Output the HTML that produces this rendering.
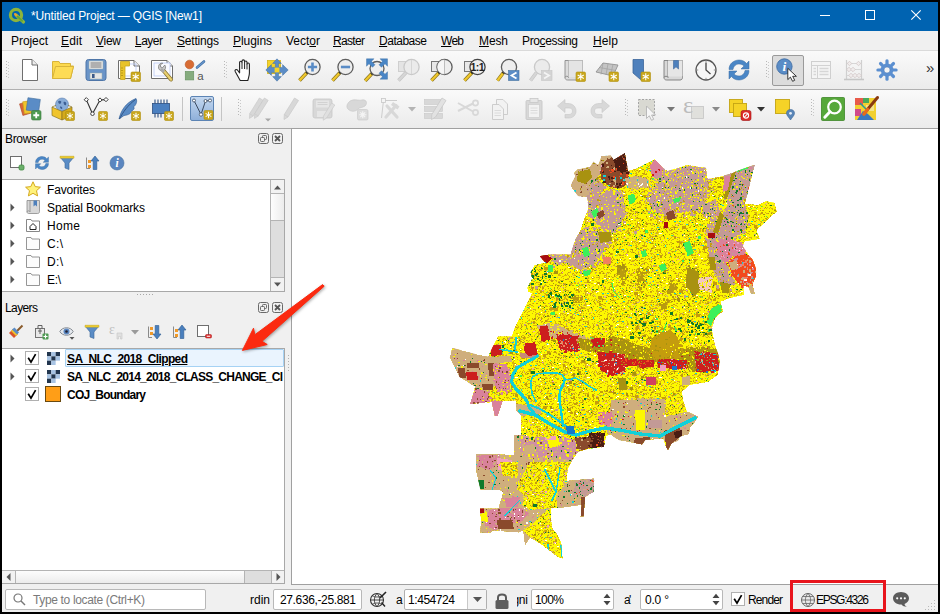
<!DOCTYPE html>
<html lang="en"><head><meta charset="utf-8"><title>QGIS</title>
<style>
html,body{margin:0;padding:0}
body{width:940px;height:614px;background:#000;position:relative;overflow:hidden;font-family:"Liberation Sans",sans-serif;font-size:12px}
.t{position:absolute;white-space:nowrap;overflow:visible}
.b{position:absolute;box-sizing:border-box}
svg{position:absolute;overflow:visible}
u{text-decoration:underline;text-underline-offset:1px}
</style></head><body>
<div class="b" style="left:2px;top:2px;width:936px;height:610px;background:#f0f0f0;"></div>
<div class="b" style="left:2px;top:2px;width:936px;height:29px;background:#0063b1;"></div>
<div class="t" style="left:31px;top:8px;height:16px;line-height:16px;font-size:12px;color:#fff;letter-spacing:-0.147px;">*Untitled Project — QGIS [New1]</div>
<div class="b" style="left:820px;top:15px;width:10px;height:1px;background:#fff;"></div>
<div class="b" style="left:865px;top:10px;width:10px;height:10px;border:1px solid #fff;"></div>
<svg style="left:911px;top:10px" width="10" height="10" viewBox="0 0 10 10"><path d="M0.3 0.3L9.7 9.7M9.7 0.3L0.3 9.7" stroke="#fff" stroke-width="1.1" fill="none"/></svg>
<div class="t" style="left:11px;top:33px;height:16px;line-height:16px;font-size:12px;color:#000;letter-spacing:-0.058px;">Pro<u>j</u>ect</div>
<div class="t" style="left:61px;top:33px;height:16px;line-height:16px;font-size:12px;color:#000;letter-spacing:0.107px;"><u>E</u>dit</div>
<div class="t" style="left:96px;top:33px;height:16px;line-height:16px;font-size:12px;color:#000;letter-spacing:-0.264px;"><u>V</u>iew</div>
<div class="t" style="left:135px;top:33px;height:16px;line-height:16px;font-size:12px;color:#000;letter-spacing:-0.504px;"><u>L</u>ayer</div>
<div class="t" style="left:177px;top:33px;height:16px;line-height:16px;font-size:12px;color:#000;letter-spacing:-0.194px;"><u>S</u>ettings</div>
<div class="t" style="left:233px;top:33px;height:16px;line-height:16px;font-size:12px;color:#000;letter-spacing:-0.059px;"><u>P</u>lugins</div>
<div class="t" style="left:286px;top:33px;height:16px;line-height:16px;font-size:12px;color:#000;letter-spacing:-0.004px;">Vect<u>o</u>r</div>
<div class="t" style="left:333px;top:33px;height:16px;line-height:16px;font-size:12px;color:#000;letter-spacing:-0.669px;"><u>R</u>aster</div>
<div class="t" style="left:379px;top:33px;height:16px;line-height:16px;font-size:12px;color:#000;letter-spacing:-0.481px;"><u>D</u>atabase</div>
<div class="t" style="left:441px;top:33px;height:16px;line-height:16px;font-size:12px;color:#000;letter-spacing:-0.728px;"><u>W</u>eb</div>
<div class="t" style="left:479px;top:33px;height:16px;line-height:16px;font-size:12px;color:#000;letter-spacing:-0.115px;"><u>M</u>esh</div>
<div class="t" style="left:522px;top:33px;height:16px;line-height:16px;font-size:12px;color:#000;letter-spacing:-0.373px;">Pro<u>c</u>essing</div>
<div class="t" style="left:593px;top:33px;height:16px;line-height:16px;font-size:12px;color:#000;letter-spacing:0.107px;"><u>H</u>elp</div>
<div class="b" style="left:2px;top:50px;width:936px;height:1px;background:#dadada;"></div>
<div class="b" style="left:2px;top:51px;width:936px;height:38px;background:linear-gradient(#fafafa,#ebebeb);"></div>
<div class="b" style="left:2px;top:89px;width:936px;height:1px;background:#b0b0b0;"></div>
<div class="b" style="left:2px;top:90px;width:936px;height:38px;background:linear-gradient(#fafafa,#ebebeb);"></div>
<div class="b" style="left:2px;top:128px;width:936px;height:1px;background:#a8a8a8;"></div>
<svg style="left:6px;top:61px" width="4" height="18" viewBox="0 0 4 18"><rect x="0" y="0" width="1" height="1" fill="#b8b8b8"/><rect x="2" y="1" width="1" height="1" fill="#c8c8c8"/><rect x="0" y="3" width="1" height="1" fill="#b8b8b8"/><rect x="2" y="4" width="1" height="1" fill="#c8c8c8"/><rect x="0" y="6" width="1" height="1" fill="#b8b8b8"/><rect x="2" y="7" width="1" height="1" fill="#c8c8c8"/><rect x="0" y="9" width="1" height="1" fill="#b8b8b8"/><rect x="2" y="10" width="1" height="1" fill="#c8c8c8"/><rect x="0" y="12" width="1" height="1" fill="#b8b8b8"/><rect x="2" y="13" width="1" height="1" fill="#c8c8c8"/><rect x="0" y="15" width="1" height="1" fill="#b8b8b8"/><rect x="2" y="16" width="1" height="1" fill="#c8c8c8"/></svg>
<svg style="left:224px;top:61px" width="4" height="18" viewBox="0 0 4 18"><rect x="0" y="0" width="1" height="1" fill="#b8b8b8"/><rect x="2" y="1" width="1" height="1" fill="#c8c8c8"/><rect x="0" y="3" width="1" height="1" fill="#b8b8b8"/><rect x="2" y="4" width="1" height="1" fill="#c8c8c8"/><rect x="0" y="6" width="1" height="1" fill="#b8b8b8"/><rect x="2" y="7" width="1" height="1" fill="#c8c8c8"/><rect x="0" y="9" width="1" height="1" fill="#b8b8b8"/><rect x="2" y="10" width="1" height="1" fill="#c8c8c8"/><rect x="0" y="12" width="1" height="1" fill="#b8b8b8"/><rect x="2" y="13" width="1" height="1" fill="#c8c8c8"/><rect x="0" y="15" width="1" height="1" fill="#b8b8b8"/><rect x="2" y="16" width="1" height="1" fill="#c8c8c8"/></svg>
<svg style="left:766px;top:61px" width="4" height="18" viewBox="0 0 4 18"><rect x="0" y="0" width="1" height="1" fill="#b8b8b8"/><rect x="2" y="1" width="1" height="1" fill="#c8c8c8"/><rect x="0" y="3" width="1" height="1" fill="#b8b8b8"/><rect x="2" y="4" width="1" height="1" fill="#c8c8c8"/><rect x="0" y="6" width="1" height="1" fill="#b8b8b8"/><rect x="2" y="7" width="1" height="1" fill="#c8c8c8"/><rect x="0" y="9" width="1" height="1" fill="#b8b8b8"/><rect x="2" y="10" width="1" height="1" fill="#c8c8c8"/><rect x="0" y="12" width="1" height="1" fill="#b8b8b8"/><rect x="2" y="13" width="1" height="1" fill="#c8c8c8"/><rect x="0" y="15" width="1" height="1" fill="#b8b8b8"/><rect x="2" y="16" width="1" height="1" fill="#c8c8c8"/></svg>
<svg style="left:6px;top:99px" width="4" height="18" viewBox="0 0 4 18"><rect x="0" y="0" width="1" height="1" fill="#b8b8b8"/><rect x="2" y="1" width="1" height="1" fill="#c8c8c8"/><rect x="0" y="3" width="1" height="1" fill="#b8b8b8"/><rect x="2" y="4" width="1" height="1" fill="#c8c8c8"/><rect x="0" y="6" width="1" height="1" fill="#b8b8b8"/><rect x="2" y="7" width="1" height="1" fill="#c8c8c8"/><rect x="0" y="9" width="1" height="1" fill="#b8b8b8"/><rect x="2" y="10" width="1" height="1" fill="#c8c8c8"/><rect x="0" y="12" width="1" height="1" fill="#b8b8b8"/><rect x="2" y="13" width="1" height="1" fill="#c8c8c8"/><rect x="0" y="15" width="1" height="1" fill="#b8b8b8"/><rect x="2" y="16" width="1" height="1" fill="#c8c8c8"/></svg>
<svg style="left:238px;top:99px" width="4" height="18" viewBox="0 0 4 18"><rect x="0" y="0" width="1" height="1" fill="#b8b8b8"/><rect x="2" y="1" width="1" height="1" fill="#c8c8c8"/><rect x="0" y="3" width="1" height="1" fill="#b8b8b8"/><rect x="2" y="4" width="1" height="1" fill="#c8c8c8"/><rect x="0" y="6" width="1" height="1" fill="#b8b8b8"/><rect x="2" y="7" width="1" height="1" fill="#c8c8c8"/><rect x="0" y="9" width="1" height="1" fill="#b8b8b8"/><rect x="2" y="10" width="1" height="1" fill="#c8c8c8"/><rect x="0" y="12" width="1" height="1" fill="#b8b8b8"/><rect x="2" y="13" width="1" height="1" fill="#c8c8c8"/><rect x="0" y="15" width="1" height="1" fill="#b8b8b8"/><rect x="2" y="16" width="1" height="1" fill="#c8c8c8"/></svg>
<svg style="left:625px;top:99px" width="4" height="18" viewBox="0 0 4 18"><rect x="0" y="0" width="1" height="1" fill="#b8b8b8"/><rect x="2" y="1" width="1" height="1" fill="#c8c8c8"/><rect x="0" y="3" width="1" height="1" fill="#b8b8b8"/><rect x="2" y="4" width="1" height="1" fill="#c8c8c8"/><rect x="0" y="6" width="1" height="1" fill="#b8b8b8"/><rect x="2" y="7" width="1" height="1" fill="#c8c8c8"/><rect x="0" y="9" width="1" height="1" fill="#b8b8b8"/><rect x="2" y="10" width="1" height="1" fill="#c8c8c8"/><rect x="0" y="12" width="1" height="1" fill="#b8b8b8"/><rect x="2" y="13" width="1" height="1" fill="#c8c8c8"/><rect x="0" y="15" width="1" height="1" fill="#b8b8b8"/><rect x="2" y="16" width="1" height="1" fill="#c8c8c8"/></svg>
<svg style="left:811px;top:99px" width="4" height="18" viewBox="0 0 4 18"><rect x="0" y="0" width="1" height="1" fill="#b8b8b8"/><rect x="2" y="1" width="1" height="1" fill="#c8c8c8"/><rect x="0" y="3" width="1" height="1" fill="#b8b8b8"/><rect x="2" y="4" width="1" height="1" fill="#c8c8c8"/><rect x="0" y="6" width="1" height="1" fill="#b8b8b8"/><rect x="2" y="7" width="1" height="1" fill="#c8c8c8"/><rect x="0" y="9" width="1" height="1" fill="#b8b8b8"/><rect x="2" y="10" width="1" height="1" fill="#c8c8c8"/><rect x="0" y="12" width="1" height="1" fill="#b8b8b8"/><rect x="2" y="13" width="1" height="1" fill="#c8c8c8"/><rect x="0" y="15" width="1" height="1" fill="#b8b8b8"/><rect x="2" y="16" width="1" height="1" fill="#c8c8c8"/></svg>
<div class="b" style="left:182px;top:97px;width:1px;height:24px;background:#c4c4c4;"></div>
<div class="b" style="left:221px;top:97px;width:1px;height:24px;background:#c4c4c4;"></div>
<div class="b" style="left:772px;top:55px;width:32px;height:31px;background:#dcdcdc;border:1px solid #9a9a9a;border-radius:2px;"></div>
<div class="t" style="left:926px;top:60px;height:16px;line-height:16px;font-size:15px;color:#333;">»</div>
<div class="t" style="left:5px;top:131px;height:16px;line-height:16px;font-size:12px;color:#000;letter-spacing:-0.335px;">Browser</div>
<svg style="left:258px;top:133px" width="11" height="11" viewBox="0 0 11 11"><rect x="0.5" y="0.5" width="10" height="10" rx="2" fill="none" stroke="#6a6a6a"/><rect x="4.5" y="2.5" width="4" height="4" rx="0.8" fill="none" stroke="#6a6a6a"/><rect x="2.5" y="4.5" width="4" height="4" rx="0.8" fill="#f0f0f0" stroke="#6a6a6a"/></svg>
<svg style="left:272px;top:133px" width="11" height="11" viewBox="0 0 11 11"><rect x="0.5" y="0.5" width="10" height="10" rx="2" fill="none" stroke="#6a6a6a"/><path d="M3 3L8 8M8 3L3 8" stroke="#555" stroke-width="1.8"/></svg>
<div class="b" style="left:2px;top:179px;width:283px;height:113px;background:#fff;border:1px solid #a8a8a8;border-left:none;"></div>
<div class="t" style="left:47px;top:182px;height:16px;line-height:16px;font-size:12px;color:#000;letter-spacing:-0.168px;">Favorites</div>
<div class="t" style="left:47px;top:200px;height:16px;line-height:16px;font-size:12px;color:#000;letter-spacing:-0.128px;">Spatial Bookmarks</div>
<div class="t" style="left:47px;top:218px;height:16px;line-height:16px;font-size:12px;color:#000;letter-spacing:0.330px;">Home</div>
<div class="t" style="left:47px;top:236px;height:16px;line-height:16px;font-size:12px;color:#000;letter-spacing:0.333px;">C:\</div>
<div class="t" style="left:47px;top:254px;height:16px;line-height:16px;font-size:12px;color:#000;letter-spacing:0.333px;">D:\</div>
<div class="t" style="left:47px;top:272px;height:16px;line-height:16px;font-size:12px;color:#000;letter-spacing:-0.337px;">E:\</div>
<svg style="left:10px;top:203px" width="5" height="9" viewBox="0 0 5 9"><path d="M0.5 0.5L4.5 4.5L0.5 8.5Z" fill="#555"/></svg>
<svg style="left:10px;top:221px" width="5" height="9" viewBox="0 0 5 9"><path d="M0.5 0.5L4.5 4.5L0.5 8.5Z" fill="#555"/></svg>
<svg style="left:10px;top:239px" width="5" height="9" viewBox="0 0 5 9"><path d="M0.5 0.5L4.5 4.5L0.5 8.5Z" fill="#555"/></svg>
<svg style="left:10px;top:257px" width="5" height="9" viewBox="0 0 5 9"><path d="M0.5 0.5L4.5 4.5L0.5 8.5Z" fill="#555"/></svg>
<svg style="left:10px;top:275px" width="5" height="9" viewBox="0 0 5 9"><path d="M0.5 0.5L4.5 4.5L0.5 8.5Z" fill="#555"/></svg>
<div class="b" style="left:270px;top:180px;width:14px;height:111px;background:#dedede;border-left:1px solid #b4b4b4;"></div>
<div class="b" style="left:270px;top:180px;width:14px;height:14px;background:#f2f2f2;border-left:1px solid #b4b4b4;border-bottom:1px solid #b4b4b4;"></div>
<div class="b" style="left:270px;top:277px;width:14px;height:14px;background:#f2f2f2;border-left:1px solid #b4b4b4;border-top:1px solid #b4b4b4;"></div>
<div class="b" style="left:270px;top:193px;width:14px;height:28px;border:1px solid #b4b4b4;border-right:none;background:linear-gradient(90deg,#fdfdfd,#ececec);"></div>
<svg style="left:274px;top:185px" width="7" height="5" viewBox="0 0 7 5"><path d="M0 4.5L3.5 0.5L7 4.5Z" fill="#555"/></svg>
<svg style="left:274px;top:282px" width="7" height="5" viewBox="0 0 7 5"><path d="M0 0.5L3.5 4.5L7 0.5Z" fill="#555"/></svg>
<div class="b" style="left:137px;top:294px;width:1px;height:1px;background:#a8a8a8;"></div>
<div class="b" style="left:140px;top:294px;width:1px;height:1px;background:#a8a8a8;"></div>
<div class="b" style="left:143px;top:294px;width:1px;height:1px;background:#a8a8a8;"></div>
<div class="b" style="left:146px;top:294px;width:1px;height:1px;background:#a8a8a8;"></div>
<div class="b" style="left:149px;top:294px;width:1px;height:1px;background:#a8a8a8;"></div>
<div class="b" style="left:152px;top:294px;width:1px;height:1px;background:#a8a8a8;"></div>
<div class="t" style="left:5px;top:300px;height:16px;line-height:16px;font-size:12px;color:#000;letter-spacing:-0.603px;">Layers</div>
<svg style="left:258px;top:302px" width="11" height="11" viewBox="0 0 11 11"><rect x="0.5" y="0.5" width="10" height="10" rx="2" fill="none" stroke="#6a6a6a"/><rect x="4.5" y="2.5" width="4" height="4" rx="0.8" fill="none" stroke="#6a6a6a"/><rect x="2.5" y="4.5" width="4" height="4" rx="0.8" fill="#f0f0f0" stroke="#6a6a6a"/></svg>
<svg style="left:272px;top:302px" width="11" height="11" viewBox="0 0 11 11"><rect x="0.5" y="0.5" width="10" height="10" rx="2" fill="none" stroke="#6a6a6a"/><path d="M3 3L8 8M8 3L3 8" stroke="#555" stroke-width="1.8"/></svg>
<div class="b" style="left:2px;top:348px;width:283px;height:236px;background:#fff;border:1px solid #a8a8a8;border-left:none;"></div>
<div class="b" style="left:65px;top:349px;width:219px;height:18px;background:#eaf4fe;border:1px solid #a6d2f4;border-radius:1px;"></div>
<div class="t" style="left:67px;top:351px;height:16px;line-height:16px;font-size:12px;color:#000;font-weight:bold;letter-spacing:-0.613px;text-decoration:underline;">SA_NLC_2018_Clipped</div>
<div class="t" style="left:67px;top:369px;height:16px;line-height:16px;font-size:12px;color:#000;font-weight:bold;letter-spacing:-0.756px;width:217px;overflow:hidden;">SA_NLC_2014_2018_CLASS_CHANGE_Cl</div>
<div class="t" style="left:67px;top:387px;height:16px;line-height:16px;font-size:12px;color:#000;font-weight:bold;letter-spacing:-0.759px;">COJ_Boundary</div>
<svg style="left:10px;top:354px" width="5" height="9" viewBox="0 0 5 9"><path d="M0.5 0.5L4.5 4.5L0.5 8.5Z" fill="#555"/></svg>
<svg style="left:10px;top:372px" width="5" height="9" viewBox="0 0 5 9"><path d="M0.5 0.5L4.5 4.5L0.5 8.5Z" fill="#555"/></svg>
<svg style="left:25px;top:351px" width="14" height="14" viewBox="0 0 14 14"><rect x="0.5" y="0.5" width="13" height="13" fill="#fff" stroke="#b0b0b0"/><path d="M3.2 6.8L6 11.2L10.6 3.2" stroke="#000" stroke-width="1.7" fill="none"/></svg>
<svg style="left:25px;top:369px" width="14" height="14" viewBox="0 0 14 14"><rect x="0.5" y="0.5" width="13" height="13" fill="#fff" stroke="#b0b0b0"/><path d="M3.2 6.8L6 11.2L10.6 3.2" stroke="#000" stroke-width="1.7" fill="none"/></svg>
<svg style="left:25px;top:387px" width="14" height="14" viewBox="0 0 14 14"><rect x="0.5" y="0.5" width="13" height="13" fill="#fff" stroke="#b0b0b0"/><path d="M3.2 6.8L6 11.2L10.6 3.2" stroke="#000" stroke-width="1.7" fill="none"/></svg>
<svg style="left:47px;top:352px" width="13" height="13" viewBox="0 0 3 3"><rect x="0" y="0" width="1" height="1" fill="#22364f"/><rect x="1" y="0" width="1" height="1" fill="#a8c4e4"/><rect x="2" y="0" width="1" height="1" fill="#22364f"/><rect x="0" y="1" width="1" height="1" fill="#a8c4e4"/><rect x="1" y="1" width="1" height="1" fill="#22364f"/><rect x="2" y="1" width="1" height="1" fill="#a8c4e4"/><rect x="0" y="2" width="1" height="1" fill="#22364f"/><rect x="1" y="2" width="1" height="1" fill="#a8c4e4"/></svg>
<svg style="left:47px;top:370px" width="13" height="13" viewBox="0 0 3 3"><rect x="0" y="0" width="1" height="1" fill="#22364f"/><rect x="1" y="0" width="1" height="1" fill="#a8c4e4"/><rect x="2" y="0" width="1" height="1" fill="#22364f"/><rect x="0" y="1" width="1" height="1" fill="#a8c4e4"/><rect x="1" y="1" width="1" height="1" fill="#22364f"/><rect x="2" y="1" width="1" height="1" fill="#a8c4e4"/><rect x="0" y="2" width="1" height="1" fill="#22364f"/><rect x="1" y="2" width="1" height="1" fill="#a8c4e4"/></svg>
<div class="b" style="left:45px;top:386px;width:16px;height:16px;background:#ff9e17;border:1px solid #6a4a10;"></div>
<div class="b" style="left:2px;top:570px;width:282px;height:13px;background:#dedede;border-top:1px solid #b4b4b4;"></div>
<div class="b" style="left:2px;top:570px;width:14px;height:13px;background:#f2f2f2;border-top:1px solid #b4b4b4;border-right:1px solid #b4b4b4;"></div>
<div class="b" style="left:271px;top:570px;width:13px;height:13px;background:#f2f2f2;border-top:1px solid #b4b4b4;border-left:1px solid #b4b4b4;"></div>
<div class="b" style="left:15px;top:570px;width:230px;height:13px;border:1px solid #b4b4b4;border-bottom:none;background:linear-gradient(#fdfdfd,#ececec);"></div>
<svg style="left:6px;top:573px" width="5" height="8" viewBox="0 0 5 8"><path d="M4.5 0L0.5 4L4.5 8Z" fill="#555"/></svg>
<svg style="left:276px;top:573px" width="5" height="8" viewBox="0 0 5 8"><path d="M0.5 0L4.5 4L0.5 8Z" fill="#555"/></svg>
<div class="b" style="left:288px;top:355px;width:1px;height:1px;background:#b0b0b0;"></div>
<div class="b" style="left:288px;top:358px;width:1px;height:1px;background:#b0b0b0;"></div>
<div class="b" style="left:288px;top:361px;width:1px;height:1px;background:#b0b0b0;"></div>
<div class="b" style="left:288px;top:364px;width:1px;height:1px;background:#b0b0b0;"></div>
<div class="b" style="left:288px;top:367px;width:1px;height:1px;background:#b0b0b0;"></div>
<div class="b" style="left:288px;top:370px;width:1px;height:1px;background:#b0b0b0;"></div>
<div class="b" style="left:291px;top:128px;width:647px;height:457px;background:#fff;border:1px solid #a0a0a0;border-right:none;"></div>
<div class="b" style="left:5px;top:589px;width:201px;height:21px;background:#fff;border:1px solid #b8b8b8;border-radius:2px;"></div>
<svg style="left:13px;top:593px" width="13" height="13" viewBox="0 0 13 13"><circle cx="5" cy="5" r="4" fill="none" stroke="#777" stroke-width="1.2"/><path d="M8 8L12 12" stroke="#777" stroke-width="1.4"/></svg>
<div class="t" style="left:33px;top:592px;height:16px;line-height:16px;font-size:12px;color:#7a7a7a;letter-spacing:-0.351px;">Type to locate (Ctrl+K)</div>
<div class="t" style="left:250px;top:592px;height:16px;line-height:16px;font-size:12px;color:#000;letter-spacing:-0.003px;width:21px;overflow:hidden;">rdin</div>
<div class="b" style="left:273px;top:589px;width:89px;height:21px;background:#fff;border:1px solid #b8b8b8;border-radius:2px;"></div>
<div class="t" style="left:280px;top:592px;height:16px;line-height:16px;font-size:12px;color:#000;letter-spacing:-0.364px;">27.636,-25.881</div>
<div class="t" style="left:396px;top:592px;height:16px;line-height:16px;font-size:12px;color:#000;letter-spacing:-0.673px;">a</div>
<div class="b" style="left:404px;top:589px;width:83px;height:21px;background:#fff;border:1px solid #b0b0b0;border-radius:2px;"></div>
<div class="t" style="left:408px;top:592px;height:16px;line-height:16px;font-size:12px;color:#000;letter-spacing:-0.435px;">1:454724</div>
<div class="b" style="left:467px;top:590px;width:19px;height:19px;background:#f4f4f4;border-left:1px solid #c8c8c8;"></div>
<svg style="left:473px;top:597px" width="9" height="5" viewBox="0 0 9 5"><path d="M0 0L9 0L4.5 5Z" fill="#555"/></svg>
<div class="t" style="left:517px;top:592px;width:11px;height:16px;line-height:16px;overflow:hidden"><span style="margin-left:-4.6px;letter-spacing:-0.3px">gni</span></div>
<div class="b" style="left:531px;top:589px;width:83px;height:21px;background:#fff;border:1px solid #b8b8b8;border-radius:2px;"></div>
<div class="t" style="left:535px;top:592px;height:16px;line-height:16px;font-size:12px;color:#000;letter-spacing:-0.564px;">100%</div>
<div class="t" style="left:624px;top:592px;height:16px;line-height:16px;font-size:12px;color:#000;letter-spacing:-0.673px;">a</div>
<div class="t" style="left:629px;top:592px;height:16px;line-height:16px;font-size:12px;color:#000;">'</div>
<div class="b" style="left:640px;top:589px;width:83px;height:21px;background:#fff;border:1px solid #b8b8b8;border-radius:2px;"></div>
<div class="t" style="left:645px;top:592px;height:16px;line-height:16px;font-size:12px;color:#000;letter-spacing:-0.204px;">0.0 °</div>
<svg style="left:603px;top:593px" width="8" height="13" viewBox="0 0 8 13"><path d="M0.5 5L4 0.8L7.5 5Z M0.5 8L4 12.2L7.5 8Z" fill="#444"/></svg>
<svg style="left:712px;top:593px" width="8" height="13" viewBox="0 0 8 13"><path d="M0.5 5L4 0.8L7.5 5Z M0.5 8L4 12.2L7.5 8Z" fill="#444"/></svg>
<svg style="left:731px;top:592px" width="14" height="14" viewBox="0 0 14 14"><rect x="0.5" y="0.5" width="13" height="13" fill="#fff" stroke="#b0b0b0"/><path d="M3.2 6.8L6 11.2L10.6 3.2" stroke="#000" stroke-width="1.7" fill="none"/></svg>
<div class="t" style="left:748px;top:592px;height:16px;line-height:16px;font-size:12px;color:#000;letter-spacing:-0.871px;">Render</div>
<div class="b" style="left:790px;top:580px;width:96px;height:32px;border:3px solid #e8141c;"></div>
<div class="t" style="left:816px;top:592px;height:16px;line-height:16px;font-size:12px;color:#000;letter-spacing:-1.297px;">EPSG:4326</div>
<svg style="left:18px;top:58px" width="24" height="24" viewBox="0 0 24 24"><path d="M4.5 1.5H14L19.5 7V22.5H4.5Z" fill="#fff" stroke="#6e6e6e" stroke-width="1"/><path d="M14 1.5V7H19.5" fill="#ececec" stroke="#6e6e6e" stroke-width="1"/></svg>
<svg style="left:51px;top:58px" width="24" height="24" viewBox="0 0 24 24"><path d="M1.5 3.5H8L9 5.5H19.5V8H22.5L19.5 20.5H1.5Z" fill="#fcd94e" stroke="#d9b43a" stroke-width="1" stroke-linejoin="round"/><path d="M4.5 8.5H22.5L19.5 20.5H1.5Z" fill="#fddc55" stroke="#d9b43a" stroke-width="1" stroke-linejoin="round"/></svg>
<svg style="left:84px;top:58px" width="24" height="24" viewBox="0 0 24 24"><rect x="2" y="1.5" width="20" height="21" rx="2.5" fill="#6a94c8" stroke="#4f76a8" stroke-width="1"/><rect x="5" y="3" width="14" height="8" fill="#ececec" stroke="#9aa" stroke-width="0.5"/><path d="M6.5 5H17.5M6.5 7H17.5M6.5 9H17.5" stroke="#555" stroke-width="0.8"/><rect x="6" y="15" width="12" height="6" fill="#e6e6e6" stroke="#9aa" stroke-width="0.5"/><rect x="8" y="16" width="2.6" height="4" fill="#3c5a88"/></svg>
<svg style="left:117px;top:58px" width="24" height="24" viewBox="0 0 24 24"><path d="M1.5 2.5H17L22.5 8V20.5H1.5Z" fill="#fff" stroke="#6e6e6e"/><path d="M17 2.5V8H22.5" fill="#eee" stroke="#6e6e6e"/><rect x="5" y="6" width="14" height="12" fill="none" stroke="#b8c8f4" stroke-width="0.8"/><path d="M3.5 3.5H12.5V8H8V21.5H3.5Z" fill="#e8c32a" stroke="#c9a71c" stroke-width="0.8"/><path d="M4 10H6M4 12.5H6M4 15H6M4 17.5H6" stroke="#a88a10" stroke-width="0.7"/><rect x="14" y="14" width="9.5" height="9.5" rx="1.2" fill="#c9a71c" stroke="#b0900f" stroke-width="0.6"/><path d="M18.75 15.2V22.3M15.68 16.98L21.82 20.52M21.82 16.98L15.68 20.52" stroke="#fff" stroke-width="1.05"/></svg>
<svg style="left:150px;top:58px" width="24" height="24" viewBox="0 0 24 24"><path d="M1.5 2.5H17L22.5 8V20.5H1.5Z" fill="#fff" stroke="#6e6e6e"/><path d="M17 2.5V8H22.5" fill="#eee" stroke="#6e6e6e"/><rect x="4" y="5" width="16" height="13" fill="#fafbff" stroke="#b8c8f4" stroke-width="0.8"/><path d="M13 12L21 21.5" stroke="#8a7430" stroke-width="4" stroke-linecap="round"/><path d="M13 12L21 21.5" stroke="#e8d070" stroke-width="2.4" stroke-linecap="round"/><path d="M8.5 8.5A3.6 3.6 0 1 0 14.8 7L12.6 9.6L10.6 9L10.4 6.8L12.8 5.2A3.6 3.6 0 0 0 8.5 8.5Z" fill="#c8c8c8" stroke="#777" stroke-width="0.7"/><path d="M11 11L14 14" stroke="#aaa" stroke-width="2.6"/></svg>
<svg style="left:183px;top:58px" width="24" height="24" viewBox="0 0 24 24"><circle cx="6.5" cy="6.5" r="4.3" fill="#d86c34" stroke="#b85420" stroke-width="0.6"/><rect x="2.3" y="13.5" width="8.4" height="8.4" fill="#86ac7e" stroke="#6a9464" stroke-width="0.7"/><path d="M14 9.5L21 3.5" stroke="#3e6ea6" stroke-width="2.6" stroke-linecap="round"/><path d="M14 9.5L21 3.5" stroke="#6a98cc" stroke-width="1.2" stroke-linecap="round"/><text x="14.2" y="21.5" font-family="Liberation Sans, sans-serif" font-size="11.5" fill="#555">a</text></svg>
<svg style="left:232px;top:58px" width="24" height="24" viewBox="0 0 24 24"><path d="M8.2 22.5L3.2 13.6C2.4 12 4.2 10.8 5.4 12L7.6 14.8V4.6C7.6 2.8 10 2.8 10 4.6V3.2C10 1.4 12.6 1.4 12.6 3.2V4.2C12.6 2.6 15 2.6 15 4.4V6C15 4.6 17.4 4.6 17.4 6.4V15C17.4 18 16.4 20 15.8 22.5Z" fill="#fff" stroke="#222" stroke-width="1.1" stroke-linejoin="round"/><path d="M10 4.6V11M12.6 4.2V11M15 6V11.4" stroke="#222" stroke-width="1"/></svg>
<svg style="left:265px;top:58px" width="24" height="24" viewBox="0 0 24 24"><rect x="2.5" y="2.5" width="13" height="13" fill="#f5d327" stroke="#d4b216" stroke-width="0.8"/><path d="M12 0.8L16.4 5.4H13.6V9.4H17.6V6.6L23.2 12L17.6 17.4V14.6H13.6V18.6H16.4L12 23.2L7.6 18.6H10.4V14.6H6.4V17.4L0.8 12L6.4 6.6V9.4H10.4V5.4H7.6Z" fill="#5a8cc6" stroke="#44709e" stroke-width="0.5"/><rect x="9.6" y="9.6" width="4.8" height="4.8" fill="#f5d327"/></svg>
<svg style="left:298px;top:58px" width="24" height="24" viewBox="0 0 24 24"><path d="M9.03 14.47L1.5 22.5" stroke="#8a7420" stroke-width="3.6" stroke-linecap="butt"/><path d="M9.03 14.47L1.5 22.5" stroke="#f0c82c" stroke-width="2.2" stroke-linecap="butt"/><circle cx="9.33" cy="14.17" r="1.5" fill="#111"/><circle cx="14.5" cy="9" r="7.6" fill="#eeeeee" stroke="#5e5e5e" stroke-width="1.3"/><path d="M14.5 4.4V13.6M9.9 9H19.1" stroke="#5a8cc6" stroke-width="2.6"/></svg>
<svg style="left:331px;top:58px" width="24" height="24" viewBox="0 0 24 24"><path d="M9.03 14.47L1.5 22.5" stroke="#8a7420" stroke-width="3.6" stroke-linecap="butt"/><path d="M9.03 14.47L1.5 22.5" stroke="#f0c82c" stroke-width="2.2" stroke-linecap="butt"/><circle cx="9.33" cy="14.17" r="1.5" fill="#111"/><circle cx="14.5" cy="9" r="7.6" fill="#eeeeee" stroke="#5e5e5e" stroke-width="1.3"/><path d="M9.9 9H19.1" stroke="#5a8cc6" stroke-width="2.6"/></svg>
<svg style="left:364px;top:58px" width="24" height="24" viewBox="0 0 24 24"><path d="M7.96 15.54L1.2 22.8" stroke="#8a7420" stroke-width="3.6" stroke-linecap="butt"/><path d="M7.96 15.54L1.2 22.8" stroke="#f0c82c" stroke-width="2.2" stroke-linecap="butt"/><circle cx="8.26" cy="15.24" r="1.5" fill="#111"/><circle cx="13" cy="10.5" r="7" fill="#eeeeee" stroke="#5e5e5e" stroke-width="1.3"/><path d="M2.5 0.8L10.0 0.8L7.5 3.3L11.0 6.8L8.5 9.3L5.0 5.8L2.5 8.3Z" fill="#4a86c6" stroke="#38699e" stroke-width="0.4"/><path d="M23.5 0.8L16.0 0.8L18.5 3.3L15.0 6.8L17.5 9.3L21.0 5.8L23.5 8.3Z" fill="#4a86c6" stroke="#38699e" stroke-width="0.4"/><path d="M23.5 21.2L16.0 21.2L18.5 18.7L15.0 15.2L17.5 12.7L21.0 16.2L23.5 13.7Z" fill="#4a86c6" stroke="#38699e" stroke-width="0.4"/></svg>
<svg style="left:397px;top:58px" width="24" height="24" viewBox="0 0 24 24"><rect x="1.5" y="3.5" width="10" height="10" fill="#e4e4e4" stroke="#cfcfcf"/><path d="M9.03 14.47L1.5 22.5" stroke="#c4c4c4" stroke-width="3.6" stroke-linecap="butt"/><path d="M9.03 14.47L1.5 22.5" stroke="#d6d6d6" stroke-width="2.2" stroke-linecap="butt"/><circle cx="14.5" cy="9" r="7.6" fill="#ebebeb" stroke="#c9c9c9" stroke-width="1.3"/><path d="M14.5 1.8V16.2" stroke="#d0d0d0" stroke-width="0.8"/></svg>
<svg style="left:430px;top:58px" width="24" height="24" viewBox="0 0 24 24"><rect x="1.5" y="3.5" width="10" height="10" fill="#e8e8e8" stroke="#777"/><path d="M9.03 14.47L1.5 22.5" stroke="#8a7420" stroke-width="3.6" stroke-linecap="butt"/><path d="M9.03 14.47L1.5 22.5" stroke="#f0c82c" stroke-width="2.2" stroke-linecap="butt"/><circle cx="9.33" cy="14.17" r="1.5" fill="#111"/><circle cx="14.5" cy="9" r="7.6" fill="#eeeeee" stroke="#5e5e5e" stroke-width="1.3"/><path d="M14.5 1.8V16.2" stroke="#888" stroke-width="0.8"/><path d="M14.5 1.6A7.4 7.4 0 0 0 14.5 16.4Z" fill="#fafafa" opacity=".7"/></svg>
<svg style="left:463px;top:58px" width="24" height="24" viewBox="0 0 24 24"><rect x="1.5" y="3.5" width="10" height="10" fill="#e8e8e8" stroke="#777"/><path d="M9.03 14.47L1.5 22.5" stroke="#8a7420" stroke-width="3.6" stroke-linecap="butt"/><path d="M9.03 14.47L1.5 22.5" stroke="#f0c82c" stroke-width="2.2" stroke-linecap="butt"/><circle cx="9.33" cy="14.17" r="1.5" fill="#111"/><circle cx="14.5" cy="9" r="7.6" fill="#eeeeee" stroke="#444" stroke-width="1.3"/><text x="14.3" y="12.8" text-anchor="middle" font-family="Liberation Sans, sans-serif" font-weight="bold" font-size="10.5" letter-spacing="-0.6" fill="#222">1:1</text></svg>
<svg style="left:496px;top:58px" width="24" height="24" viewBox="0 0 24 24"><path d="M7.53 14.47L1.5 22.5" stroke="#8a7420" stroke-width="3.6" stroke-linecap="butt"/><path d="M7.53 14.47L1.5 22.5" stroke="#f0c82c" stroke-width="2.2" stroke-linecap="butt"/><circle cx="7.83" cy="14.17" r="1.5" fill="#111"/><circle cx="13" cy="9" r="7.6" fill="#eeeeee" stroke="#5e5e5e" stroke-width="1.3"/><rect x="12.5" y="12.5" width="10.5" height="10" fill="#5a8cc6" stroke="#44709e" stroke-width="0.6"/><path d="M20.5 14.5L15.5 17.5L20.5 20.5" stroke="#fff" stroke-width="1.8" fill="none"/></svg>
<svg style="left:529px;top:58px" width="24" height="24" viewBox="0 0 24 24"><path d="M7.53 14.47L1.5 22.5" stroke="#c4c4c4" stroke-width="3.6" stroke-linecap="butt"/><path d="M7.53 14.47L1.5 22.5" stroke="#d6d6d6" stroke-width="2.2" stroke-linecap="butt"/><circle cx="13" cy="9" r="7.6" fill="#ebebeb" stroke="#c9c9c9" stroke-width="1.3"/><rect x="12.5" y="12.5" width="10.5" height="10" fill="#d4d4d4" stroke="#c6c6c6" stroke-width="0.6"/><path d="M15 14.5L20 17.5L15 20.5" stroke="#f4f4f4" stroke-width="1.8" fill="none"/></svg>
<svg style="left:562px;top:58px" width="24" height="24" viewBox="0 0 24 24"><path d="M3 2.5H20.5V19.5C20.5 21 19.5 22 18 22H5.5C4 22 3 21 3 19.5Z" fill="#dcdcdc" stroke="#8a8a8a" stroke-width="0.9"/><path d="M3 19.5C3 17.8 6.5 17.8 6.5 19.5V2.5" fill="none" stroke="#8a8a8a" stroke-width="0.9"/><path d="M6.5 2.5H20.5V19H6.5Z" fill="#e4e4e4"/><rect x="14" y="14" width="9.5" height="9.5" rx="1.2" fill="#c9a71c" stroke="#b0900f" stroke-width="0.6"/><path d="M18.75 15.2V22.3M15.68 16.98L21.82 20.52M21.82 16.98L15.68 20.52" stroke="#fff" stroke-width="1.05"/></svg>
<svg style="left:595px;top:58px" width="24" height="24" viewBox="0 0 24 24"><path d="M1 14L8 5L23 7L18 18Z" fill="#c4c4c4" stroke="#8a8a8a" stroke-width="0.8"/><path d="M4.5 9.5L20.5 12.5M8 5L6 16.5M13 5.7L11 17M18 6.3L15.5 17.6" stroke="#9a9a9a" stroke-width="0.6"/><rect x="14" y="14" width="9.5" height="9.5" rx="1.2" fill="#c9a71c" stroke="#b0900f" stroke-width="0.6"/><path d="M18.75 15.2V22.3M15.68 16.98L21.82 20.52M21.82 16.98L15.68 20.52" stroke="#fff" stroke-width="1.05"/></svg>
<svg style="left:628px;top:58px" width="24" height="24" viewBox="0 0 24 24"><path d="M5 1.5H15.5V18L12.5 21.5L5 15Z" fill="#4e80bc" stroke="#3a659a" stroke-width="0.8"/><rect x="13" y="14" width="9.5" height="9.5" rx="1.2" fill="#c9a71c" stroke="#b0900f" stroke-width="0.6"/><path d="M17.75 15.2V22.3M14.68 16.98L20.82 20.52M20.82 16.98L14.68 20.52" stroke="#fff" stroke-width="1.05"/></svg>
<svg style="left:661px;top:58px" width="24" height="24" viewBox="0 0 24 24"><path d="M3 2.5H21.5V19.5C21.5 21 20.5 22 19 22H5.5C4 22 3 21 3 19.5Z" fill="#d8d8d8" stroke="#7a7a7a" stroke-width="0.9"/><path d="M3 19.5C3 17.8 7 17.8 7 19.5V2.5" fill="none" stroke="#7a7a7a" stroke-width="0.9"/><path d="M7 2.5H21.5V18.5H7Z" fill="#e6e6e6"/><path d="M12.5 2.5H17.5V11L15 8.8L12.5 11Z" fill="#4e80bc" stroke="#3a659a" stroke-width="0.6"/></svg>
<svg style="left:694px;top:58px" width="24" height="24" viewBox="0 0 24 24"><circle cx="12" cy="12" r="10" fill="#f6f6f6" stroke="#555" stroke-width="1.3"/><path d="M12 4.5V12L16.5 16" stroke="#444" stroke-width="1.3" fill="none"/><path d="M12 2.8V4.2M12 19.8V21.2M2.8 12H4.2M19.8 12H21.2" stroke="#777" stroke-width="0.8"/></svg>
<svg style="left:727px;top:58px" width="24" height="24" viewBox="0 0 24 24"><path d="M2 11.5C2 5.5 7 2 12 2C15.5 2 18 3.5 19.5 5.5L22 3V11H14L17 8C16 6.8 14.2 6 12 6C9 6 6.5 8 6 11.5Z" fill="#4a86c6" stroke="#386ba0" stroke-width="0.5"/><path d="M22 12.5C22 18.5 17 22 12 22C8.5 22 6 20.5 4.5 18.5L2 21V13H10L7 16C8 17.2 9.8 18 12 18C15 18 17.500 16 18 12.5Z" fill="#4a86c6" stroke="#386ba0" stroke-width="0.5"/></svg>
<svg style="left:776px;top:58px" width="24" height="24" viewBox="0 0 24 24"><circle cx="8.4" cy="8.500" r="7.700" fill="#5a8cc6" stroke="#3f6ea6" stroke-width="0.900"/><text x="8.500" y="13.400" text-anchor="middle" font-family="Liberation Serif, serif" font-style="italic" font-weight="bold" font-size="13.500" fill="#fff">i</text><path d="M11.800 10.300V21.600L14.400 19.100L16.600 23.300L18.700 22.300L16.700 18.300H20.400Z" fill="#fff" stroke="#222" stroke-width="0.900" stroke-linejoin="round"/></svg>
<svg style="left:809px;top:58px" width="24" height="24" viewBox="0 0 24 24"><rect x="2.5" y="3.5" width="19" height="17" fill="#f4f4f4" stroke="#cfcfcf"/><path d="M2.500 7.500H21.500M8.500 7.500V20.500" stroke="#d2d2d2"/><path d="M4.500 10.500H7M10.500 10.500H19.500M4.500 13.500H7M10.500 13.500H19.500M4.500 16.500H7M10.500 16.500H19.500" stroke="#d6d6d6" stroke-width="1.4"/></svg>
<svg style="left:842px;top:58px" width="24" height="24" viewBox="0 0 24 24"><path d="M4.500 2V21M19.500 2V21" stroke="#cfcfcf" stroke-width="1.200"/><path d="M2 21.500H22" stroke="#c6c6c6" stroke-width="1.600"/><path d="M4.500 5.500H19.500M4.500 11.500H19.500M4.500 17.500H19.500" stroke="#d4d4d4" stroke-width="0.900"/><g fill="#f0ecec" stroke="#d0c4c4" stroke-width="0.700"><rect x="5.9" y="3.9" width="3.200" height="3.200" transform="rotate(45 7.5 5.5)"/><rect x="14.9" y="3.9" width="3.200" height="3.200" transform="rotate(45 16.5 5.5)"/><rect x="5.4" y="9.9" width="3.200" height="3.200" transform="rotate(45 7 11.5)"/><rect x="9.4" y="9.9" width="3.200" height="3.200" transform="rotate(45 11 11.5)"/><rect x="7.4" y="15.9" width="3.200" height="3.200" transform="rotate(45 9 17.5)"/><rect x="11.4" y="15.9" width="3.200" height="3.200" transform="rotate(45 13 17.5)"/><rect x="15.4" y="15.9" width="3.200" height="3.200" transform="rotate(45 17 17.5)"/></g></svg>
<svg style="left:875px;top:58px" width="24" height="24" viewBox="0 0 24 24"><rect x="10.400" y="1.300" width="3.200" height="6" rx="1.500" transform="rotate(0 12 12)" fill="#5b8fd0"/><rect x="10.400" y="1.300" width="3.200" height="6" rx="1.500" transform="rotate(45 12 12)" fill="#5b8fd0"/><rect x="10.400" y="1.300" width="3.200" height="6" rx="1.500" transform="rotate(90 12 12)" fill="#5b8fd0"/><rect x="10.400" y="1.300" width="3.200" height="6" rx="1.500" transform="rotate(135 12 12)" fill="#5b8fd0"/><rect x="10.400" y="1.300" width="3.200" height="6" rx="1.500" transform="rotate(180 12 12)" fill="#5b8fd0"/><rect x="10.400" y="1.300" width="3.200" height="6" rx="1.500" transform="rotate(225 12 12)" fill="#5b8fd0"/><rect x="10.400" y="1.300" width="3.200" height="6" rx="1.500" transform="rotate(270 12 12)" fill="#5b8fd0"/><rect x="10.400" y="1.300" width="3.200" height="6" rx="1.500" transform="rotate(315 12 12)" fill="#5b8fd0"/><circle cx="12" cy="12" r="6.400" fill="#5b8fd0"/><circle cx="12" cy="12" r="3" fill="#f4f4f4"/><circle cx="12" cy="12" r="3" fill="none" stroke="#4a78b4" stroke-width="0.500"/></svg>
<svg style="left:18px;top:97px" width="24" height="24" viewBox="0 0 24 24"><rect x="3" y="5" width="12" height="12" transform="rotate(-16 9 11)" fill="#d9653a" stroke="#b04a24" stroke-width="0.6"/><rect x="5.5" y="4" width="12" height="12" transform="rotate(-8 11 10)" fill="#f0c42c" stroke="#c9a21c" stroke-width="0.6"/><rect x="9" y="1.5" width="12.500" height="12.500" transform="rotate(8 15 8)" fill="#5a8cc6" stroke="#44709e" stroke-width="0.6"/><rect x="13.500" y="13.500" width="9.500" height="9.500" rx="1.5" fill="#4e9a52" stroke="#3a7a3e" stroke-width="0.6"/><path d="M18.250 15.300V21.200M15.300 18.250H21.200" stroke="#fff" stroke-width="1.8"/></svg>
<svg style="left:51px;top:97px" width="24" height="24" viewBox="0 0 24 24"><circle cx="11" cy="7.500" r="6.500" fill="#88acd8" stroke="#5a7eae" stroke-width="0.6"/><path d="M7 4.500C9 3 11 4 10 6C9 7.500 7.500 7 7 4.500ZM12.500 5C14.500 4 16 6 15 8C14 9 12.500 7.500 12.500 5ZM9 9.500C10.500 9 12 10.500 11 12C9.500 12 9 11 9 9.500Z" fill="#3c5f94"/><path d="M1 10L11 14.500V23L1 18.500Z" fill="#f0c42c" stroke="#8a7420" stroke-width="0.7"/><path d="M11 14.500L21 10V18.500L11 23Z" fill="#d4aa1c" stroke="#8a7420" stroke-width="0.7"/><path d="M1 10L5 8.300M21 10L17 8.300" stroke="#8a7420" stroke-width="0.7"/><rect x="14.5" y="14.5" width="9" height="9" rx="1.2" fill="#c9a71c" stroke="#b0900f" stroke-width="0.6"/><path d="M19.0 15.7V22.3M16.14 17.35L21.86 20.65M21.86 17.35L16.14 20.65" stroke="#fff" stroke-width="1.05"/></svg>
<svg style="left:84px;top:97px" width="24" height="24" viewBox="0 0 24 24"><path d="M2.3 2.700L8.500 16.700L16 3L22 2.600" fill="none" stroke="#333" stroke-width="1.100"/><g fill="#fff" stroke="#333" stroke-width="0.900"><rect x="0.800" y="1.200" width="3" height="3" transform="rotate(45 2.300 2.700)"/><rect x="14.500" y="1.500" width="3" height="3" transform="rotate(45 16 3)"/><rect x="20.500" y="1.100" width="3" height="3" transform="rotate(45 22 2.600)"/><circle cx="8.500" cy="16.700" r="1.800"/></g><rect x="14.5" y="14.5" width="9" height="9" rx="1.2" fill="#c9a71c" stroke="#b0900f" stroke-width="0.6"/><path d="M19.0 15.7V22.3M16.14 17.35L21.86 20.65M21.86 17.35L16.14 20.65" stroke="#fff" stroke-width="1.05"/></svg>
<svg style="left:117px;top:97px" width="24" height="24" viewBox="0 0 24 24"><path d="M2 22C4 14 8 6 19 1.500C21 5 18 9 16.500 10C18 10.500 17 13 14 14.500C15 15.500 12 18 7 18.500Z" fill="#5a8cc6" stroke="#38639a" stroke-width="0.7"/><path d="M2.500 22C6 15 11 8 18.500 2.500" stroke="#2c4f80" stroke-width="0.9" fill="none"/><rect x="14.5" y="14.5" width="9" height="9" rx="1.2" fill="#c9a71c" stroke="#b0900f" stroke-width="0.6"/><path d="M19.0 15.7V22.3M16.14 17.35L21.86 20.65M21.86 17.35L16.14 20.65" stroke="#fff" stroke-width="1.05"/></svg>
<svg style="left:150px;top:97px" width="24" height="24" viewBox="0 0 24 24"><rect x="2.500" y="6.500" width="17" height="10" fill="#4a7fc0" stroke="#2c4f80" stroke-width="0.8"/><path d="M5 6.500V2.500M8 6.500V2.500M11 6.500V2.500M14 6.500V2.500M17 6.500V2.500M5 16.500V20.500M8 16.500V20.500M11 16.500V20.500" stroke="#2c4f80" stroke-width="1.100"/><rect x="14.5" y="14.5" width="9" height="9" rx="1.2" fill="#c9a71c" stroke="#b0900f" stroke-width="0.6"/><path d="M19.0 15.7V22.3M16.14 17.35L21.86 20.65M21.86 17.35L16.14 20.65" stroke="#fff" stroke-width="1.05"/></svg>
<div class="b" style="left:190px;top:96px;width:24px;height:25px;background:#aac4e4;border:1px solid #5c84b4;border-radius:2px;background:linear-gradient(#c4d8f0,#8fb0da)"></div>
<svg style="left:190px;top:97px" width="24" height="24" viewBox="0 0 24 24"><path d="M4 3.500L11 17.500L15.500 4L20 3.500" fill="none" stroke="#3a4a60" stroke-width="1"/><g fill="#fff" stroke="#3a4a60" stroke-width="0.8"><circle cx="4" cy="3.500" r="1.500"/><circle cx="15.500" cy="4" r="1.500"/><circle cx="20" cy="3.500" r="1.500"/><circle cx="11" cy="17.500" r="1.700"/></g><rect x="14" y="13.5" width="9" height="9" rx="1.2" fill="#c9a71c" stroke="#b0900f" stroke-width="0.6"/><path d="M18.5 14.7V21.3M15.64 16.35L21.36 19.65M21.36 16.35L15.64 19.65" stroke="#fff" stroke-width="1.05"/></svg>
<svg style="left:248px;top:97px" width="24" height="24" viewBox="0 0 24 24"><g transform="translate(0 1) scale(0.95)"><path d="M12 0L16 2.500L5.500 19L1.500 21.500L1.800 16.500Z" fill="#d8d8d8" stroke="#c8c8c8" stroke-width="0.7"/><path d="M1.800 16.500L5.500 19" stroke="#c8c8c8" stroke-width="0.7"/></g><g transform="translate(5 1) scale(0.95)"><path d="M12 0L16 2.500L5.500 19L1.500 21.500L1.800 16.500Z" fill="#d8d8d8" stroke="#c8c8c8" stroke-width="0.7"/><path d="M1.800 16.500L5.500 19" stroke="#c8c8c8" stroke-width="0.7"/></g><path d="M17 21.500H23L20 24.500Z" fill="#a8a8a8"/></svg>
<svg style="left:279px;top:97px" width="24" height="24" viewBox="0 0 24 24"><g transform="translate(3.5 1) scale(1)"><path d="M12 0L16 2.500L5.500 19L1.500 21.500L1.800 16.500Z" fill="#d8d8d8" stroke="#c8c8c8" stroke-width="0.7"/><path d="M1.800 16.500L5.500 19" stroke="#c8c8c8" stroke-width="0.7"/></g></svg>
<svg style="left:311px;top:97px" width="24" height="24" viewBox="0 0 24 24"><rect x="2" y="2" width="19" height="19" rx="2" fill="#d8d8d8" stroke="#c8c8c8" stroke-width="0.8"/><rect x="5" y="3.500" width="13" height="7" fill="#e6e6e6"/><rect x="6" y="14" width="11" height="6" fill="#e6e6e6"/><path d="M6.500 5.500H16.500M6.500 7.500H16.500" stroke="#c8c8c8" stroke-width="0.7"/><g transform="translate(11 6) scale(0.8)"><path d="M12 0L16 2.500L5.500 19L1.500 21.500L1.800 16.500Z" fill="#e0e0e0" stroke="#c8c8c8" stroke-width="0.8"/></g></svg>
<svg style="left:345px;top:97px" width="24" height="24" viewBox="0 0 24 24"><path d="M4 5C8 1 14 4 17 3C21 2 23 6 20 9C17 11 15 10 13 12C10 15 6 15 3 12C1 10 2 7 4 5Z" fill="#d8d8d8" stroke="#c8c8c8" stroke-width="0.7"/><rect x="12.500" y="12.500" width="10.500" height="10.500" rx="1.500" fill="#dcdcdc" stroke="#c8c8c8" stroke-width="0.6"/><path d="M17.750 14.200V21.300M14.200 17.750H21.300M15.300 15.300L20.200 20.200M20.200 15.300L15.300 20.200" stroke="#f4f4f4" stroke-width="1.200"/></svg>
<svg style="left:378px;top:97px" width="24" height="24" viewBox="0 0 24 24"><path d="M5.500 3.500L3.500 21" stroke="#c8c8c8" stroke-width="0.9"/><path d="M5.500 3.500H19" stroke="#c8c8c8" stroke-width="0.9"/><rect x="3.500" y="1.500" width="4" height="4" fill="#f4f4f4" stroke="#c8c8c8" stroke-width="0.8"/><path d="M9 9L19 20M18 8.500L8 20" stroke="#d8d8d8" stroke-width="3.200" stroke-linecap="round"/><path d="M14 6.500L20.500 11" stroke="#d8d8d8" stroke-width="3.600"/></svg>
<svg style="left:408px;top:107px" width="8" height="5" viewBox="0 0 8 5"><path d="M0 0H8L4 4.500Z" fill="#b4b4b4"/></svg>
<svg style="left:423px;top:97px" width="24" height="24" viewBox="0 0 24 24"><rect x="1.500" y="2.500" width="18" height="5" fill="#d8d8d8" stroke="#c8c8c8" stroke-width="0.600"/><rect x="1.500" y="9.500" width="18" height="5" fill="#d8d8d8" stroke="#c8c8c8" stroke-width="0.600"/><rect x="1.500" y="16.500" width="18" height="5" fill="#d8d8d8" stroke="#c8c8c8" stroke-width="0.600"/><g transform="translate(7 1)"><path d="M12 0L16 2.500L5.500 19L1.500 21.500L1.800 16.500Z" fill="#e2e2e2" stroke="#c8c8c8" stroke-width="0.800"/></g></svg>
<svg style="left:456px;top:97px" width="24" height="24" viewBox="0 0 24 24"><path d="M2 6L17 14.500M2 14L17 6.500" stroke="#d8d8d8" stroke-width="2"/><circle cx="19.500" cy="6" r="2.600" fill="none" stroke="#d8d8d8" stroke-width="1.700"/><circle cx="19.500" cy="15.500" r="2.600" fill="none" stroke="#d8d8d8" stroke-width="1.700"/></svg>
<svg style="left:488px;top:97px" width="24" height="24" viewBox="0 0 24 24"><path d="M8.500 2.500H15L19.500 7V17.500H8.500Z" fill="#f2f2f2" stroke="#c8c8c8" stroke-width="0.900"/><path d="M4.500 7.500H11L15.500 12V22.500H4.500Z" fill="#f2f2f2" stroke="#c8c8c8" stroke-width="0.900"/><path d="M6.500 13.500H13M6.500 16H13M6.500 18.500H13" stroke="#d8d8d8" stroke-width="0.900"/></svg>
<svg style="left:522px;top:97px" width="24" height="24" viewBox="0 0 24 24"><rect x="4" y="3.500" width="16" height="19" rx="1" fill="#d8d8d8" stroke="#c8c8c8" stroke-width="0.900"/><rect x="8" y="1.500" width="8" height="4" fill="#e6e6e6" stroke="#c8c8c8" stroke-width="0.800"/><rect x="6.500" y="7.500" width="11" height="13" fill="#f2f2f2" stroke="#c8c8c8" stroke-width="0.600"/><path d="M8.500 11H15.500M8.500 13.500H15.500M8.500 16H15.500" stroke="#d8d8d8" stroke-width="0.900"/></svg>
<svg style="left:555px;top:97px" width="24" height="24" viewBox="0 0 24 24"><path d="M2.500 9L10 2.500V6.500H13C18 6.500 21 10 21 14C21 18 18 21 14 21H10V17.500H14C16 17.500 17.500 16 17.500 14C17.500 12 16 11 14 11H10V15.500Z" fill="#d8d8d8" stroke="#c8c8c8" stroke-width="0.600"/></svg>
<svg style="left:588px;top:97px" width="24" height="24" viewBox="0 0 24 24"><path d="M21.500 9L14 2.500V6.500H11C6 6.500 3 10 3 14C3 18 6 21 10 21H14V17.500H10C8 17.500 6.500 16 6.500 14C6.500 12 8 11 10 11H14V15.500Z" fill="#d8d8d8" stroke="#c8c8c8" stroke-width="0.600"/></svg>
<svg style="left:636px;top:97px" width="24" height="24" viewBox="0 0 24 24"><rect x="2.500" y="2.500" width="16" height="16" fill="#d9d9d2" stroke="#a4a4a4" stroke-width="1" stroke-dasharray="2 1.500"/><path d="M10.500 9V21.500L13.300 18.800L15.500 23.300L17.700 22.300L15.600 18H19.500Z" fill="#f6f6f6" stroke="#b4b4b4" stroke-width="0.900" stroke-linejoin="round"/></svg>
<svg style="left:667px;top:107px" width="8" height="5" viewBox="0 0 8 5"><path d="M0 0H8L4 4.500Z" fill="#777"/></svg>
<svg style="left:683px;top:97px" width="24" height="24" viewBox="0 0 24 24"><rect x="8.500" y="9.500" width="12" height="12" fill="#e0e0dc" stroke="#c4c4c4" stroke-width="0.800"/><text x="0" y="15.500" font-family="Liberation Serif, serif" font-size="24" fill="#bcbcbc">ε</text></svg>
<svg style="left:712px;top:107px" width="8" height="5" viewBox="0 0 8 5"><path d="M0 0H8L4 4.500Z" fill="#8a8a8a"/></svg>
<svg style="left:728px;top:97px" width="24" height="24" viewBox="0 0 24 24"><rect x="1.500" y="2.500" width="13" height="13" fill="#f5d327" stroke="#c4a414" stroke-width="0.900"/><rect x="5.500" y="6.500" width="13" height="13" fill="#f5d327" stroke="#c4a414" stroke-width="0.900"/><rect x="13" y="13.500" width="10" height="10" rx="2" fill="#dc2a2a" stroke="#a01010" stroke-width="0.600"/><circle cx="18" cy="18.500" r="2.600" fill="none" stroke="#fff" stroke-width="1.100"/><path d="M16.200 20.300L19.800 16.700" stroke="#fff" stroke-width="1.100"/></svg>
<svg style="left:757px;top:107px" width="8" height="5" viewBox="0 0 8 5"><path d="M0 0H8L4 4.500Z" fill="#333"/></svg>
<svg style="left:773px;top:97px" width="24" height="24" viewBox="0 0 24 24"><rect x="2.500" y="2.500" width="14" height="14" fill="#f5d327" stroke="#c4a414" stroke-width="0.900"/><path d="M17.500 12.500C20 12.500 21.500 14.200 21.500 16.200C21.500 18.500 19 20.500 17.500 23C16 20.500 13.500 18.500 13.500 16.200C13.500 14.200 15 12.500 17.500 12.500Z" fill="#5a86b8" stroke="#3e6898" stroke-width="0.600"/><circle cx="17.500" cy="16.300" r="1.400" fill="#e8eef6"/></svg>
<svg style="left:821px;top:97px" width="24" height="24" viewBox="0 0 24 24"><rect x="0.500" y="0.500" width="23" height="23" rx="1" fill="#56a83a" stroke="#3e8628" stroke-width="0.800"/><circle cx="13.500" cy="10" r="6.300" fill="none" stroke="#fff" stroke-width="2.200"/><path d="M9 14.800L3.800 20.200" stroke="#fff" stroke-width="3" stroke-linecap="round"/></svg>
<svg style="left:854px;top:97px" width="24" height="24" viewBox="0 0 24 24"><rect x="1" y="1" width="21" height="22" fill="#f2d030"/><path d="M1 1H9V8H1Z" fill="#e85a4a"/><path d="M9 1H15V6H9Z" fill="#4aa85a"/><path d="M1 12H7V19H1Z" fill="#d04a8a"/><path d="M3 23L9 14L14 17L20 23Z" fill="#3a78c0"/><path d="M12 8H20V14H12Z" fill="#f4e48a"/><path d="M6 6L12 12" stroke="#2a9a9a" stroke-width="1.500"/><path d="M23.500 0.500L13 13" stroke="#8a3a10" stroke-width="3" stroke-linecap="round"/><path d="M13.500 12.500L10 17" stroke="#e86a1a" stroke-width="3.600" stroke-linecap="round"/></svg>
<svg style="left:9px;top:155px" width="16" height="16" viewBox="0 0 16 16"><rect x="1.500" y="1.500" width="11" height="11" fill="#fff" stroke="#6e6e6e"/><rect x="10" y="10" width="5" height="5" rx="1.500" fill="#6cb06c" stroke="#3e8a3e" stroke-width="0.800"/></svg>
<svg style="left:34px;top:155px" width="16" height="16" viewBox="0 0 16 16"><path d="M1.500 7.500C1.500 3.500 5 1.500 8 1.500C10 1.500 11.800 2.400 12.800 3.700L14.500 2V7.300H9.200L11 5.500C10.300 4.700 9.200 4.200 8 4.200C6 4.200 4.400 5.500 4.200 7.500Z" fill="#4a86c6" stroke="#386ba0" stroke-width="0.400"/><path d="M14.500 8.500C14.500 12.500 11 14.500 8 14.500C6 14.500 4.200 13.600 3.200 12.300L1.500 14V8.700H6.800L5 10.500C5.700 11.300 6.800 11.800 8 11.800C10 11.800 11.600 10.500 11.800 8.500Z" fill="#4a86c6" stroke="#386ba0" stroke-width="0.400"/></svg>
<svg style="left:59px;top:155px" width="16" height="16" viewBox="0 0 16 16"><path d="M1 2H15L10 8V14.500L6 13V8Z" fill="#5a8cc6" stroke="#3e6898" stroke-width="0.600"/><path d="M1 1.200H15V3.200H1Z" fill="#f2d030" stroke="#c4a414" stroke-width="0.400"/></svg>
<svg style="left:84px;top:155px" width="16" height="16" viewBox="0 0 16 16"><path d="M2.500 2.500V13.500H6" fill="none" stroke="#8a8a8a"/><rect x="4" y="5" width="3" height="3" fill="#f09a2a"/><rect x="4" y="10" width="3" height="3" fill="#f09a2a"/><path d="M11 1L15 6H12.800V14.500H9.200V6H7Z" fill="#4a7fbd" stroke="#2c5a90" stroke-width="0.600"/></svg>
<svg style="left:109px;top:155px" width="16" height="16" viewBox="0 0 16 16"><circle cx="8" cy="8" r="7" fill="#5a86c0" stroke="#44709e" stroke-width="0.600"/><text x="8" y="12" text-anchor="middle" font-family="Liberation Serif, serif" font-style="italic" font-weight="bold" font-size="11.500" fill="#fff">i</text></svg>
<svg style="left:25px;top:181px" width="16" height="16" viewBox="0 0 16 16"><path d="M8 0.800L10.200 5.600L15.400 6.200L11.500 9.700L12.600 14.900L8 12.300L3.400 14.900L4.500 9.700L0.600 6.200L5.800 5.600Z" fill="#fff27a" stroke="#d4a81c" stroke-width="1"/></svg>
<svg style="left:25px;top:199px" width="16" height="16" viewBox="0 0 16 16"><path d="M2 1.500H14.500V12.500C14.500 13.800 13.800 14.500 12.500 14.500H3.500C2.600 14.500 2 13.800 2 12.800Z" fill="#d8d8d8" stroke="#8a8a8a" stroke-width="0.800"/><path d="M2 12.800C2 11.500 5 11.500 5 12.800V1.500" fill="none" stroke="#8a8a8a" stroke-width="0.800"/><path d="M8.500 1.500H12V7.500L10.200 6L8.500 7.500Z" fill="#4e80bc"/></svg>
<svg style="left:25px;top:217px" width="16" height="16" viewBox="0 0 16 16"><path d="M1.500 2.500H6L7 4H14.500V14.500H1.500Z" fill="#fff" stroke="#7a7a7a" stroke-width="0.900"/><path d="M5 9.500L8 6.500L11 9.500V12.500H5Z" fill="none" stroke="#222" stroke-width="1"/></svg>
<svg style="left:25px;top:235px" width="16" height="16" viewBox="0 0 16 16"><path d="M1.500 2.500H6L7 4H14.500V14.500H1.500Z" fill="#fcfcfc" stroke="#8a8a8a" stroke-width="0.900"/></svg>
<svg style="left:25px;top:253px" width="16" height="16" viewBox="0 0 16 16"><path d="M1.500 2.500H6L7 4H14.500V14.500H1.500Z" fill="#fcfcfc" stroke="#8a8a8a" stroke-width="0.900"/></svg>
<svg style="left:25px;top:271px" width="16" height="16" viewBox="0 0 16 16"><path d="M1.500 2.500H6L7 4H14.500V14.500H1.500Z" fill="#fcfcfc" stroke="#8a8a8a" stroke-width="0.900"/></svg>
<svg style="left:8px;top:324px" width="16" height="16" viewBox="0 0 16 16"><path d="M1 9L5 5L10 10L6 14Z" fill="#d8532a"/><path d="M3 7L5 5L10 10L8 12Z" fill="#f0c42c"/><path d="M9 7L14.500 1.500" stroke="#8a5a2a" stroke-width="2"/><path d="M4 5.500L6.500 3.500L11 8.500L9 10.500Z" fill="#5a8cc6"/></svg>
<svg style="left:33px;top:324px" width="16" height="16" viewBox="0 0 16 16"><rect x="2.500" y="4.500" width="9" height="9" fill="#e8e8e8" stroke="#666" stroke-width="0.900"/><path d="M5 4.500V1.500H9V4.500M5 7H9M7 4.500V10" stroke="#555" stroke-width="0.900" fill="none"/><rect x="9.500" y="9.500" width="6" height="6" rx="1" fill="#4e9a52"/><path d="M12.500 10.500V14.500M10.500 12.500H14.500" stroke="#fff" stroke-width="1.200"/></svg>
<svg style="left:59px;top:324px" width="16" height="16" viewBox="0 0 16 16"><path d="M0.800 7.500C3.500 2.500 11.500 2.500 14.200 7.500C11.500 12.500 3.500 12.500 0.800 7.500Z" fill="#e4e8ee" stroke="#7a8088" stroke-width="0.900"/><circle cx="7.500" cy="7.500" r="3" fill="#5a86c0"/><circle cx="7.500" cy="7.500" r="1.300" fill="#223"/><path d="M10.500 13H15.500L13 15.800Z" fill="#555"/></svg>
<svg style="left:84px;top:324px" width="16" height="16" viewBox="0 0 16 16"><path d="M1 2H15L10 8V14.500L6 13V8Z" fill="#5a8cc6" stroke="#3e6898" stroke-width="0.600"/><path d="M1 1.200H15V3.200H1Z" fill="#f2d030" stroke="#c4a414" stroke-width="0.400"/></svg>
<svg style="left:109px;top:324px" width="16" height="16" viewBox="0 0 16 16"><text x="0" y="10" font-family="Liberation Serif, serif" font-size="14" fill="#c0c0c0">ε</text><path d="M8 9H13V15H11.500V12.500H9.500V15H8Z" fill="#e0e0e0" stroke="#c8c8c8" stroke-width="0.600"/></svg>
<svg style="left:131px;top:330px" width="8" height="5" viewBox="0 0 8 5"><path d="M0 0H8L4 4.500Z" fill="#9a9a9a"/></svg>
<svg style="left:146px;top:324px" width="16" height="16" viewBox="0 0 16 16"><path d="M2.500 2.500V13.500H6" fill="none" stroke="#8a8a8a"/><rect x="4" y="3" width="3" height="3" fill="#f09a2a"/><rect x="4" y="8" width="3" height="3" fill="#f09a2a"/><path d="M11 15L15 10H12.800V1.500H9.200V10H7Z" fill="#4a7fbd" stroke="#2c5a90" stroke-width="0.600"/></svg>
<svg style="left:171px;top:324px" width="16" height="16" viewBox="0 0 16 16"><path d="M2.500 2.500V13.500H6" fill="none" stroke="#8a8a8a"/><rect x="4" y="5" width="3" height="3" fill="#f09a2a"/><rect x="4" y="10" width="3" height="3" fill="#f09a2a"/><path d="M11 1L15 6H12.800V14.500H9.200V6H7Z" fill="#4a7fbd" stroke="#2c5a90" stroke-width="0.600"/></svg>
<svg style="left:196px;top:324px" width="16" height="16" viewBox="0 0 16 16"><rect x="1.500" y="1.500" width="11" height="11" fill="#fff" stroke="#6e6e6e"/><rect x="9.500" y="10.500" width="6" height="3.500" rx="1" fill="#e03030" stroke="#a01818" stroke-width="0.500"/><path d="M10.800 12.250H14.200" stroke="#fff" stroke-width="1"/></svg>
<svg style="left:368px;top:590px" width="20" height="20" viewBox="0 0 20 20"><circle cx="9" cy="10" r="6.500" fill="none" stroke="#333" stroke-width="1.100"/><path d="M9 3.500C5.500 7 5.500 13 9 16.500C12.500 13 12.500 7 9 3.500ZM2.500 10H15.500" fill="none" stroke="#333" stroke-width="0.900"/><path d="M4 5.500C7 7.500 11 7.500 14 5.500M4 14.500C7 12.500 11 12.500 14 14.500" fill="none" stroke="#333" stroke-width="0.800"/><path d="M12 8L18 2" stroke="#222" stroke-width="1.600"/><path d="M13.500 12.500L17 16.500" stroke="#222" stroke-width="1.300"/></svg>
<svg style="left:494px;top:592px" width="16" height="18" viewBox="0 0 16 18"><path d="M4 8V5.500C4 1.500 12 1.500 12 5.500V8" fill="none" stroke="#5a5a5a" stroke-width="2"/><rect x="1.500" y="8" width="13" height="9" rx="1.500" fill="#5e5e5e"/></svg>
<svg style="left:800px;top:592px" width="16" height="16" viewBox="0 0 16 16"><circle cx="8" cy="8" r="6.500" fill="#e8e8e8" stroke="#666" stroke-width="1"/><path d="M8 1.500C4.500 5 4.500 11 8 14.500C11.500 11 11.500 5 8 1.500ZM1.500 8H14.500M2.800 4.500H13.200M2.800 11.500H13.200" fill="none" stroke="#666" stroke-width="0.800"/></svg>
<svg style="left:892px;top:590px" width="18" height="18" viewBox="0 0 18 18"><path d="M9 2C13.500 2 17 4.800 17 8.300C17 11 15 13 12.500 14C12.800 15.500 13.800 16.300 14.800 16.800C12.500 16.800 10.500 16 9.500 14.600C4.800 14.800 1 12 1 8.300C1 4.800 4.500 2 9 2Z" fill="#5c5c5c"/><circle cx="5.200" cy="8.300" r="1.100" fill="#fff"/><circle cx="9" cy="8.300" r="1.100" fill="#fff"/><circle cx="12.800" cy="8.300" r="1.100" fill="#fff"/></svg>
<div class="b" style="left:934px;top:600px;width:1px;height:1px;background:#b8b8b8"></div>
<div class="b" style="left:931px;top:603px;width:1px;height:1px;background:#b8b8b8"></div>
<div class="b" style="left:934px;top:603px;width:1px;height:1px;background:#b8b8b8"></div>
<div class="b" style="left:928px;top:606px;width:1px;height:1px;background:#b8b8b8"></div>
<div class="b" style="left:931px;top:606px;width:1px;height:1px;background:#b8b8b8"></div>
<div class="b" style="left:934px;top:606px;width:1px;height:1px;background:#b8b8b8"></div>
<div class="b" style="left:925px;top:609px;width:1px;height:1px;background:#b8b8b8"></div>
<div class="b" style="left:928px;top:609px;width:1px;height:1px;background:#b8b8b8"></div>
<div class="b" style="left:931px;top:609px;width:1px;height:1px;background:#b8b8b8"></div>
<div class="b" style="left:934px;top:609px;width:1px;height:1px;background:#b8b8b8"></div>
<svg style="left:8px;top:6.5px" width="17" height="17" viewBox="0 0 17 17"><circle cx="8" cy="8" r="5.600" fill="none" stroke="#8cb43c" stroke-width="3.200"/><path d="M8 8L15.500 15" stroke="#8cb43c" stroke-width="3.200" stroke-linecap="round"/><path d="M7 7L13.500 13.200" stroke="#f0a030" stroke-width="2" stroke-linecap="round"/><path d="M9.500 9.500L14 13.800" stroke="#5aa83a" stroke-width="2" stroke-linecap="round"/></svg>
<svg style="left:0;top:0;filter:drop-shadow(1px 1px 1.500px rgba(0,0,0,.35))" width="940" height="614" viewBox="0 0 940 614"><path d="M322.600 284.600L324.200 286.200L262 341.300L267.200 344.500L242.400 350.400L253.500 328.200L254.800 334.800Z" fill="#fb2a10" stroke="#fb2a10" stroke-width="1" stroke-linejoin="round"/></svg>
<svg style="left:0;top:0" width="940" height="614" viewBox="0 0 940 614" shape-rendering="crispEdges"><defs><pattern id="yp" patternUnits="userSpaceOnUse" width="72" height="72"><path fill="#0e7a2a" d="M57 71h1v1h-1zM57 65h2v1h-2zM20 1h2v1h-2zM8 2h2v1h-2zM53 3h1v1h-1zM26 38h1v1h-1zM60 21h1v1h-1zM10 69h1v1h-1zM31 64h1v1h-1zM6 57h2v1h-2zM22 59h1v1h-1zM57 10h1v1h-1zM70 63h1v1h-1zM8 8h1v1h-1zM39 14h1v1h-1zM56 22h1v1h-1zM6 22h1v1h-1zM14 15h1v1h-1zM44 28h2v1h-2zM26 46h1v1h-1zM50 55h1v1h-1zM63 47h1v1h-1zM15 52h1v1h-1zM44 6h2v1h-2zM50 28h1v1h-1zM40 19h1v1h-1zM15 19h1v1h-1zM65 19h2v1h-2zM14 38h1v1h-1zM27 50h1v1h-1zM66 69h1v1h-1zM9 62h2v1h-2zM33 36h1v1h-1zM4 12h1v1h-1zM31 51h1v1h-1zM2 52h1v1h-1zM50 2h1v1h-1zM62 68h2v1h-2zM9 69h2v1h-2zM6 44h2v1h-2zM35 29h1v1h-1zM24 69h2v1h-2zM50 61h2v1h-2zM65 69h1v1h-1zM34 19h1v1h-1zM0 60h1v1h-1zM12 21h1v1h-1zM67 66h1v1h-1zM4 52h1v1h-1zM36 17h1v1h-1zM68 20h2v1h-2zM6 47h2v1h-2zM45 10h2v1h-2zM44 53h1v1h-1zM62 23h1v1h-1zM15 52h1v1h-1zM55 12h1v1h-1zM44 52h1v1h-1zM34 11h1v1h-1zM58 20h1v1h-1zM33 48h1v1h-1zM67 6h1v1h-1zM10 13h2v1h-2zM49 24h2v1h-2zM66 4h1v1h-1zM39 8h1v1h-1zM66 12h1v1h-1zM53 61h1v1h-1zM65 48h1v1h-1zM16 1h2v1h-2zM62 35h1v1h-1zM0 54h1v1h-1zM22 45h1v1h-1zM32 35h1v1h-1zM66 8h1v1h-1zM8 71h1v1h-1zM66 52h1v1h-1zM56 3h1v1h-1zM41 28h1v1h-1zM10 28h1v1h-1zM15 48h1v1h-1zM66 55h1v1h-1zM2 16h1v1h-1zM41 44h1v1h-1z"/><path fill="#c49c0e" d="M65 60h1v1h-1zM66 29h1v1h-1zM10 58h1v1h-1zM70 10h1v1h-1zM16 53h2v1h-2zM31 1h1v1h-1zM29 31h2v1h-2zM70 25h1v1h-1zM42 66h2v1h-2zM61 8h1v1h-1zM45 10h1v1h-1zM48 48h1v1h-1zM10 11h1v1h-1zM38 18h2v1h-2zM21 43h1v1h-1zM35 5h1v1h-1zM45 39h1v1h-1zM47 9h2v1h-2zM60 68h2v1h-2zM26 12h1v1h-1zM67 34h2v1h-2zM62 11h2v1h-2zM36 41h1v1h-1zM65 32h1v1h-1zM10 51h2v1h-2zM51 26h2v1h-2zM63 27h1v1h-1zM2 14h1v1h-1zM66 12h1v1h-1zM9 70h1v1h-1zM67 51h1v1h-1zM36 61h1v1h-1zM6 40h2v1h-2zM14 6h1v1h-1zM17 37h1v1h-1zM24 35h2v1h-2zM23 54h1v1h-1zM3 46h1v1h-1zM54 8h1v1h-1zM18 12h1v1h-1zM59 69h1v1h-1zM18 31h1v1h-1zM60 39h1v1h-1zM30 60h1v1h-1zM13 50h1v1h-1zM48 69h1v1h-1zM50 71h1v1h-1zM25 48h1v1h-1zM35 60h1v1h-1zM1 51h1v1h-1zM43 39h2v1h-2zM65 18h2v1h-2zM66 25h2v1h-2zM71 8h1v1h-1zM21 23h1v1h-1zM55 48h1v1h-1zM28 53h1v1h-1zM35 53h2v1h-2zM39 15h2v1h-2zM46 41h1v1h-1zM21 14h1v1h-1zM19 2h1v1h-1zM64 56h1v1h-1zM69 30h2v1h-2zM54 5h1v1h-1zM46 27h1v1h-1zM17 18h1v1h-1zM7 43h1v1h-1zM9 6h1v1h-1zM65 50h1v1h-1zM32 66h1v1h-1zM61 69h1v1h-1zM70 39h2v1h-2zM38 60h1v1h-1zM46 3h1v1h-1zM9 6h1v1h-1zM29 33h1v1h-1zM40 26h1v1h-1zM50 32h1v1h-1zM16 53h2v1h-2zM37 29h1v1h-1zM2 34h2v1h-2zM71 50h1v1h-1zM31 56h1v1h-1zM68 15h1v1h-1zM41 49h1v1h-1zM35 46h1v1h-1zM27 6h1v1h-1zM8 13h1v1h-1zM1 18h1v1h-1zM7 27h1v1h-1zM58 55h1v1h-1zM26 68h1v1h-1zM25 71h1v1h-1zM1 43h1v1h-1zM35 26h2v1h-2zM16 21h1v1h-1zM30 63h1v1h-1zM36 10h1v1h-1zM28 57h1v1h-1zM42 36h1v1h-1zM34 37h2v1h-2zM13 69h1v1h-1zM31 31h1v1h-1zM71 17h1v1h-1zM12 50h1v1h-1zM51 28h1v1h-1zM38 26h1v1h-1zM34 54h1v1h-1zM11 36h2v1h-2zM2 27h2v1h-2zM70 14h1v1h-1zM49 57h1v1h-1zM41 11h1v1h-1zM33 44h1v1h-1zM25 68h1v1h-1zM20 24h1v1h-1zM36 32h1v1h-1zM69 16h1v1h-1zM20 68h1v1h-1zM47 44h1v1h-1zM64 34h1v1h-1zM42 66h1v1h-1zM33 66h1v1h-1zM65 42h2v1h-2zM36 71h1v1h-1zM23 44h2v1h-2zM41 23h1v1h-1zM58 44h1v1h-1zM36 12h2v1h-2zM65 48h1v1h-1zM61 7h1v1h-1zM6 30h1v1h-1zM50 0h1v1h-1zM29 15h1v1h-1zM64 32h1v1h-1zM31 7h1v1h-1zM49 9h1v1h-1zM65 52h1v1h-1zM11 58h1v1h-1zM70 58h1v1h-1zM10 69h1v1h-1zM43 46h1v1h-1zM59 67h1v1h-1zM10 3h1v1h-1zM62 7h2v1h-2zM50 4h2v1h-2zM71 59h1v1h-1zM18 49h1v1h-1zM69 7h2v1h-2zM59 31h2v1h-2zM17 25h1v1h-1zM23 40h1v1h-1zM32 49h2v1h-2zM46 47h1v1h-1zM43 4h1v1h-1zM12 23h1v1h-1zM53 46h1v1h-1zM34 57h1v1h-1zM71 43h1v1h-1zM0 42h1v1h-1zM30 40h1v1h-1zM25 16h2v1h-2zM46 46h1v1h-1zM15 5h1v1h-1zM22 38h1v1h-1zM22 71h1v1h-1zM22 52h1v1h-1zM68 69h2v1h-2zM27 48h1v1h-1zM56 22h1v1h-1zM63 26h1v1h-1zM8 38h1v1h-1zM5 42h1v1h-1zM11 34h2v1h-2zM61 2h2v1h-2zM6 68h1v1h-1zM62 14h1v1h-1zM59 7h1v1h-1zM21 13h1v1h-1zM67 29h2v1h-2zM61 44h1v1h-1zM57 25h1v1h-1zM47 7h2v1h-2zM57 56h1v1h-1zM17 2h1v1h-1zM22 39h1v1h-1zM70 6h1v1h-1zM12 39h1v1h-1zM43 25h1v1h-1zM38 58h1v1h-1zM16 28h1v1h-1zM34 5h2v1h-2zM53 42h1v1h-1zM6 42h1v1h-1zM3 45h1v1h-1zM6 31h1v1h-1zM21 37h2v1h-2zM55 30h1v1h-1zM15 31h1v1h-1zM66 3h2v1h-2zM34 38h2v1h-2zM61 26h1v1h-1zM67 35h1v1h-1zM14 5h1v1h-1zM0 22h1v1h-1zM21 28h1v1h-1zM4 21h1v1h-1zM10 29h1v1h-1zM0 24h2v1h-2zM35 12h1v1h-1zM23 21h1v1h-1zM37 11h1v1h-1zM36 14h1v1h-1zM54 44h1v1h-1zM55 63h1v1h-1zM51 54h1v1h-1zM70 55h1v1h-1zM34 29h2v1h-2zM66 55h1v1h-1zM61 10h2v1h-2zM58 53h1v1h-1zM36 31h2v1h-2zM52 57h1v1h-1zM53 19h2v1h-2zM49 3h1v1h-1zM51 17h1v1h-1zM36 44h1v1h-1zM25 55h2v1h-2zM20 51h1v1h-1zM45 33h1v1h-1zM26 13h1v1h-1zM19 52h1v1h-1zM10 42h1v1h-1zM11 6h1v1h-1zM47 3h1v1h-1zM68 17h2v1h-2zM0 37h1v1h-1zM40 66h1v1h-1zM69 13h1v1h-1zM52 12h1v1h-1zM7 31h1v1h-1zM60 42h1v1h-1zM5 7h1v1h-1zM4 23h2v1h-2zM46 14h1v1h-1zM20 48h1v1h-1zM32 15h2v1h-2zM17 8h1v1h-1zM46 61h1v1h-1zM35 24h1v1h-1zM26 64h1v1h-1zM34 45h2v1h-2zM22 12h1v1h-1zM21 18h1v1h-1zM51 36h1v1h-1zM65 68h1v1h-1zM39 50h2v1h-2zM4 12h1v1h-1zM52 9h2v1h-2zM3 69h1v1h-1zM27 39h1v1h-1zM59 11h2v1h-2zM0 57h1v1h-1zM67 15h1v1h-1zM39 28h1v1h-1zM50 63h1v1h-1zM16 3h1v1h-1zM35 66h1v1h-1zM11 3h1v1h-1zM30 37h2v1h-2zM25 10h1v1h-1zM42 21h2v1h-2zM28 1h1v1h-1zM69 57h1v1h-1zM52 57h2v1h-2zM23 19h1v1h-1zM0 50h1v1h-1zM44 41h1v1h-1zM38 33h1v1h-1zM37 63h1v1h-1zM27 41h1v1h-1zM6 10h1v1h-1zM12 35h1v1h-1zM59 37h1v1h-1zM8 29h1v1h-1zM37 30h1v1h-1zM2 3h2v1h-2zM63 25h2v1h-2zM4 54h1v1h-1zM67 60h1v1h-1zM45 21h1v1h-1zM28 30h1v1h-1zM52 55h2v1h-2zM60 54h1v1h-1zM61 58h1v1h-1zM49 64h1v1h-1zM64 32h2v1h-2zM58 25h1v1h-1zM70 16h1v1h-1zM70 34h1v1h-1zM3 50h1v1h-1zM69 40h1v1h-1zM53 52h1v1h-1zM49 8h1v1h-1zM47 4h1v1h-1zM26 1h1v1h-1zM60 48h1v1h-1zM60 38h2v1h-2zM56 34h1v1h-1zM38 13h1v1h-1zM22 46h1v1h-1zM34 47h1v1h-1zM45 2h2v1h-2zM23 17h2v1h-2zM32 62h1v1h-1zM40 34h1v1h-1zM68 67h1v1h-1zM2 48h1v1h-1zM18 26h1v1h-1zM1 7h2v1h-2zM16 40h1v1h-1zM57 12h2v1h-2zM44 53h1v1h-1zM3 14h1v1h-1z"/><path fill="#d6b212" d="M12 57h2v1h-2zM59 41h1v1h-1zM29 65h2v1h-2zM13 51h1v1h-1zM26 6h1v1h-1zM50 53h1v1h-1zM34 43h1v1h-1zM52 15h1v1h-1zM1 7h1v1h-1zM71 24h1v1h-1zM53 27h1v1h-1zM38 2h1v1h-1zM37 49h2v1h-2zM17 49h2v1h-2zM61 10h2v1h-2zM50 32h1v1h-1zM62 37h1v1h-1zM8 16h1v1h-1zM9 35h1v1h-1zM2 8h1v1h-1zM7 5h1v1h-1zM16 11h1v1h-1zM4 2h1v1h-1zM39 4h1v1h-1zM9 9h1v1h-1zM53 42h1v1h-1zM58 56h1v1h-1zM66 65h1v1h-1zM61 2h1v1h-1zM63 62h2v1h-2zM30 41h1v1h-1zM40 26h1v1h-1zM21 14h1v1h-1zM27 52h1v1h-1zM40 57h1v1h-1zM17 51h2v1h-2zM14 57h1v1h-1zM60 32h2v1h-2zM34 44h1v1h-1zM64 20h1v1h-1zM28 11h1v1h-1zM49 16h2v1h-2zM0 48h1v1h-1zM64 43h1v1h-1zM15 27h1v1h-1zM11 39h1v1h-1zM44 64h1v1h-1zM4 22h1v1h-1zM17 60h1v1h-1zM11 28h1v1h-1zM71 21h1v1h-1zM71 32h1v1h-1zM68 14h1v1h-1zM68 58h1v1h-1zM51 34h1v1h-1zM60 67h2v1h-2zM3 33h1v1h-1zM2 4h1v1h-1zM63 13h1v1h-1zM55 2h1v1h-1zM67 20h1v1h-1zM68 27h1v1h-1zM44 23h1v1h-1zM11 33h1v1h-1zM51 2h1v1h-1zM45 46h1v1h-1zM9 61h2v1h-2zM24 23h2v1h-2zM12 41h1v1h-1zM45 55h1v1h-1zM5 25h1v1h-1zM43 33h2v1h-2zM20 51h1v1h-1zM43 38h2v1h-2zM45 6h1v1h-1zM38 43h1v1h-1zM23 68h1v1h-1zM32 56h2v1h-2zM25 48h1v1h-1zM35 43h1v1h-1zM36 37h1v1h-1zM5 20h1v1h-1zM26 6h2v1h-2zM46 56h1v1h-1zM33 53h1v1h-1zM45 35h1v1h-1zM5 7h1v1h-1zM3 4h1v1h-1zM30 47h1v1h-1zM43 43h2v1h-2zM9 15h1v1h-1zM27 56h1v1h-1zM19 47h1v1h-1zM41 37h1v1h-1zM59 41h2v1h-2zM62 59h1v1h-1zM9 39h1v1h-1zM10 38h1v1h-1zM56 35h1v1h-1zM39 58h1v1h-1zM66 31h1v1h-1zM22 22h1v1h-1zM36 2h2v1h-2zM69 10h1v1h-1zM13 40h1v1h-1zM31 28h1v1h-1zM43 58h1v1h-1zM42 17h1v1h-1zM9 5h1v1h-1zM1 14h1v1h-1zM48 21h1v1h-1zM67 37h1v1h-1zM13 25h2v1h-2zM23 35h1v1h-1zM28 51h1v1h-1zM20 53h1v1h-1zM33 66h1v1h-1zM34 66h2v1h-2zM22 0h1v1h-1zM19 16h1v1h-1zM24 53h1v1h-1zM56 26h1v1h-1zM40 39h1v1h-1zM59 8h1v1h-1zM15 56h1v1h-1zM60 30h2v1h-2zM48 11h1v1h-1zM16 22h1v1h-1zM59 11h2v1h-2zM15 55h2v1h-2zM54 65h2v1h-2zM18 49h1v1h-1zM31 67h1v1h-1zM48 26h1v1h-1zM13 20h1v1h-1zM38 70h1v1h-1zM25 10h1v1h-1zM53 42h1v1h-1zM46 34h2v1h-2zM42 18h1v1h-1zM36 46h1v1h-1zM58 4h1v1h-1zM48 2h1v1h-1zM4 18h2v1h-2zM51 22h2v1h-2zM31 42h1v1h-1zM60 44h1v1h-1zM52 36h1v1h-1zM52 55h2v1h-2zM67 42h1v1h-1zM39 8h1v1h-1zM60 13h1v1h-1zM47 69h1v1h-1zM68 58h1v1h-1zM38 3h2v1h-2zM57 67h1v1h-1zM29 5h1v1h-1zM40 39h2v1h-2zM60 26h1v1h-1zM7 25h1v1h-1zM60 2h1v1h-1zM71 25h1v1h-1zM6 13h1v1h-1zM56 53h1v1h-1zM23 30h1v1h-1zM14 66h1v1h-1zM23 28h1v1h-1zM67 9h2v1h-2zM36 68h1v1h-1zM11 21h1v1h-1zM31 22h1v1h-1zM59 49h1v1h-1zM7 23h1v1h-1zM66 37h1v1h-1zM66 68h1v1h-1zM30 33h1v1h-1zM63 33h1v1h-1zM3 9h2v1h-2zM65 21h1v1h-1zM63 58h1v1h-1zM5 0h1v1h-1zM18 11h1v1h-1zM29 37h1v1h-1zM30 53h1v1h-1zM46 39h1v1h-1zM27 5h1v1h-1zM27 48h2v1h-2zM53 44h1v1h-1zM20 61h2v1h-2zM59 39h1v1h-1zM23 62h1v1h-1zM35 2h1v1h-1zM27 34h2v1h-2zM30 62h2v1h-2zM16 4h1v1h-1zM70 33h1v1h-1zM68 57h1v1h-1zM45 28h1v1h-1zM27 17h2v1h-2zM30 33h1v1h-1zM50 63h1v1h-1zM42 36h1v1h-1zM20 51h1v1h-1zM44 30h1v1h-1zM54 19h1v1h-1zM50 15h2v1h-2zM51 34h1v1h-1zM9 3h1v1h-1zM47 38h1v1h-1zM23 60h1v1h-1zM53 8h1v1h-1zM17 64h1v1h-1zM60 2h2v1h-2zM42 33h1v1h-1zM24 20h1v1h-1zM62 37h1v1h-1zM68 63h1v1h-1zM61 5h1v1h-1zM61 6h1v1h-1zM41 23h1v1h-1zM34 20h1v1h-1zM60 17h1v1h-1zM32 50h1v1h-1zM17 6h1v1h-1zM5 24h1v1h-1zM15 51h2v1h-2zM69 61h2v1h-2zM56 36h1v1h-1zM27 69h1v1h-1zM32 62h2v1h-2zM51 35h2v1h-2zM25 46h1v1h-1zM19 8h1v1h-1zM10 0h1v1h-1zM25 52h1v1h-1zM32 35h1v1h-1zM3 71h1v1h-1zM1 26h1v1h-1zM63 51h1v1h-1zM12 61h1v1h-1zM32 3h2v1h-2zM39 35h1v1h-1zM12 33h1v1h-1zM26 22h2v1h-2zM47 44h2v1h-2zM51 64h2v1h-2zM68 26h2v1h-2zM60 28h1v1h-1zM22 34h1v1h-1zM56 54h1v1h-1zM49 64h1v1h-1zM57 57h2v1h-2zM6 41h1v1h-1zM32 40h1v1h-1zM70 51h1v1h-1zM62 14h1v1h-1zM33 8h2v1h-2zM43 32h1v1h-1zM26 68h1v1h-1zM13 71h1v1h-1zM46 22h2v1h-2zM23 49h1v1h-1zM59 62h1v1h-1zM16 35h1v1h-1zM45 39h1v1h-1zM25 18h1v1h-1zM47 52h2v1h-2zM15 12h1v1h-1zM61 49h1v1h-1zM31 1h2v1h-2zM32 49h1v1h-1zM2 19h1v1h-1zM59 64h1v1h-1zM14 7h1v1h-1zM51 27h1v1h-1zM12 10h1v1h-1zM59 19h1v1h-1zM3 13h1v1h-1zM64 15h1v1h-1zM11 65h1v1h-1zM27 57h2v1h-2zM18 67h1v1h-1zM14 48h1v1h-1zM3 51h1v1h-1zM69 5h1v1h-1zM27 33h1v1h-1zM33 28h1v1h-1zM61 49h1v1h-1zM57 14h1v1h-1zM7 20h1v1h-1zM4 40h1v1h-1zM66 67h2v1h-2zM52 13h1v1h-1zM40 23h1v1h-1zM50 10h1v1h-1zM61 53h1v1h-1zM15 56h1v1h-1zM53 41h1v1h-1zM63 63h1v1h-1zM65 61h1v1h-1zM21 41h1v1h-1zM20 44h1v1h-1zM45 18h1v1h-1zM31 27h1v1h-1zM58 49h1v1h-1zM13 39h2v1h-2zM45 20h1v1h-1zM38 12h2v1h-2zM47 41h1v1h-1zM37 33h1v1h-1zM9 34h1v1h-1zM33 39h1v1h-1zM46 69h1v1h-1zM18 3h2v1h-2zM66 69h1v1h-1zM23 11h1v1h-1zM17 62h1v1h-1zM3 53h1v1h-1zM66 10h2v1h-2zM42 28h2v1h-2zM30 33h1v1h-1zM30 53h2v1h-2zM32 57h1v1h-1zM42 23h1v1h-1zM2 23h2v1h-2zM4 31h2v1h-2zM64 31h2v1h-2zM71 17h1v1h-1zM60 1h2v1h-2zM40 43h2v1h-2zM40 5h2v1h-2zM30 58h1v1h-1zM28 2h1v1h-1zM64 23h1v1h-1zM13 37h1v1h-1zM59 4h1v1h-1zM6 36h2v1h-2zM27 2h1v1h-1zM63 8h2v1h-2zM1 21h2v1h-2zM33 71h1v1h-1zM40 21h1v1h-1zM53 54h1v1h-1zM42 62h1v1h-1zM20 59h1v1h-1zM71 51h1v1h-1zM61 71h1v1h-1zM51 34h1v1h-1zM59 7h1v1h-1zM35 68h2v1h-2zM5 32h1v1h-1zM13 54h2v1h-2zM40 64h1v1h-1zM38 22h1v1h-1zM65 43h1v1h-1zM16 7h1v1h-1zM62 28h1v1h-1zM2 20h1v1h-1zM40 59h2v1h-2zM34 13h1v1h-1zM3 37h1v1h-1zM35 27h1v1h-1zM60 67h2v1h-2zM46 30h1v1h-1zM68 53h1v1h-1zM60 10h1v1h-1zM1 67h2v1h-2zM7 19h1v1h-1zM7 58h1v1h-1zM7 70h1v1h-1zM52 5h1v1h-1zM42 38h1v1h-1zM24 32h2v1h-2zM34 57h1v1h-1zM26 57h2v1h-2zM29 37h1v1h-1zM58 55h1v1h-1zM54 33h1v1h-1zM55 7h2v1h-2zM27 50h1v1h-1zM71 52h1v1h-1zM63 41h1v1h-1zM63 62h1v1h-1zM53 18h2v1h-2zM2 37h1v1h-1zM9 1h1v1h-1zM46 27h1v1h-1zM45 68h1v1h-1zM50 51h1v1h-1zM31 26h2v1h-2zM37 42h1v1h-1zM60 40h1v1h-1zM28 40h1v1h-1zM23 21h1v1h-1zM28 61h1v1h-1zM3 12h1v1h-1zM13 53h1v1h-1zM22 70h1v1h-1zM41 6h1v1h-1zM71 2h1v1h-1zM31 37h2v1h-2zM46 39h2v1h-2zM22 14h2v1h-2zM65 24h1v1h-1zM56 64h1v1h-1zM46 64h1v1h-1zM68 28h1v1h-1zM58 36h1v1h-1zM58 11h1v1h-1zM24 9h1v1h-1zM42 69h1v1h-1zM4 37h1v1h-1zM2 1h1v1h-1zM27 9h1v1h-1zM22 71h1v1h-1zM23 33h1v1h-1zM28 21h2v1h-2zM5 38h1v1h-1zM63 4h1v1h-1zM25 10h2v1h-2zM30 48h1v1h-1zM0 7h1v1h-1zM15 67h2v1h-2zM23 26h1v1h-1zM30 57h1v1h-1zM24 49h1v1h-1zM48 18h2v1h-2zM23 24h1v1h-1zM9 66h2v1h-2zM68 48h1v1h-1zM65 12h1v1h-1zM5 3h1v1h-1zM50 37h1v1h-1zM16 20h1v1h-1zM36 38h1v1h-1zM43 32h1v1h-1zM18 33h1v1h-1zM16 7h1v1h-1zM3 33h1v1h-1zM64 3h1v1h-1zM29 61h1v1h-1zM60 53h1v1h-1zM4 53h2v1h-2zM12 4h1v1h-1zM32 32h1v1h-1zM47 14h1v1h-1zM60 29h1v1h-1zM8 20h2v1h-2zM44 15h1v1h-1zM47 54h1v1h-1zM36 54h2v1h-2zM60 33h1v1h-1zM20 65h1v1h-1zM37 9h1v1h-1zM19 56h1v1h-1zM29 18h1v1h-1zM16 20h1v1h-1zM8 19h1v1h-1zM4 42h1v1h-1zM63 38h1v1h-1zM23 41h1v1h-1zM5 64h1v1h-1zM70 66h2v1h-2zM33 31h1v1h-1zM28 59h1v1h-1zM29 21h1v1h-1zM62 46h2v1h-2zM28 31h1v1h-1zM66 55h1v1h-1zM32 45h1v1h-1zM5 32h1v1h-1zM32 62h1v1h-1zM54 35h1v1h-1zM26 41h2v1h-2zM53 9h1v1h-1zM70 1h1v1h-1zM62 40h1v1h-1zM56 45h2v1h-2zM15 16h1v1h-1zM58 4h1v1h-1zM15 20h1v1h-1zM65 56h2v1h-2zM14 56h2v1h-2zM35 42h1v1h-1zM53 0h1v1h-1zM27 8h1v1h-1zM23 52h1v1h-1zM54 59h2v1h-2zM59 13h1v1h-1zM11 30h1v1h-1zM68 44h1v1h-1zM41 18h1v1h-1zM45 4h1v1h-1zM28 44h1v1h-1zM47 14h2v1h-2zM48 43h2v1h-2zM10 25h1v1h-1zM11 38h1v1h-1zM11 60h1v1h-1zM28 15h1v1h-1zM9 40h1v1h-1zM65 4h1v1h-1zM37 53h2v1h-2zM53 9h1v1h-1zM43 56h2v1h-2zM6 39h1v1h-1zM51 68h2v1h-2zM38 20h2v1h-2zM0 56h2v1h-2zM53 12h1v1h-1zM63 12h1v1h-1zM18 38h1v1h-1zM6 60h2v1h-2zM21 34h1v1h-1zM55 0h1v1h-1zM9 4h1v1h-1zM70 64h1v1h-1zM52 65h1v1h-1zM2 16h2v1h-2zM5 30h2v1h-2zM10 33h1v1h-1zM35 60h1v1h-1zM41 17h1v1h-1zM27 22h1v1h-1zM9 7h2v1h-2zM48 51h2v1h-2zM13 20h1v1h-1zM31 29h1v1h-1zM43 9h1v1h-1zM9 59h2v1h-2zM21 46h2v1h-2zM4 26h1v1h-1zM50 1h1v1h-1zM7 50h2v1h-2zM11 65h1v1h-1zM41 1h1v1h-1zM37 43h1v1h-1zM34 68h1v1h-1zM7 44h1v1h-1zM56 59h1v1h-1zM65 34h1v1h-1zM8 2h2v1h-2zM32 45h1v1h-1zM9 61h1v1h-1zM0 16h1v1h-1zM63 57h1v1h-1zM59 14h2v1h-2zM16 52h1v1h-1zM36 37h1v1h-1zM46 26h2v1h-2zM11 62h2v1h-2zM37 34h1v1h-1zM18 3h1v1h-1zM52 47h1v1h-1zM39 24h2v1h-2zM25 31h1v1h-1zM12 45h2v1h-2zM33 0h1v1h-1zM28 25h1v1h-1zM30 21h1v1h-1zM60 10h1v1h-1zM60 53h1v1h-1zM17 36h1v1h-1zM17 38h1v1h-1zM27 40h2v1h-2zM58 60h2v1h-2zM64 18h1v1h-1zM58 64h2v1h-2zM8 17h2v1h-2zM54 13h1v1h-1zM9 56h2v1h-2zM35 69h2v1h-2zM8 33h2v1h-2zM60 26h1v1h-1zM11 51h2v1h-2zM43 31h2v1h-2zM33 25h1v1h-1zM27 70h1v1h-1zM8 12h1v1h-1zM59 34h1v1h-1zM29 41h1v1h-1zM15 55h1v1h-1zM30 37h1v1h-1zM13 37h1v1h-1zM58 60h1v1h-1zM22 61h2v1h-2zM64 59h1v1h-1zM70 23h2v1h-2zM64 63h1v1h-1zM20 49h2v1h-2zM62 70h1v1h-1zM6 54h1v1h-1zM21 50h1v1h-1zM34 43h1v1h-1zM5 30h1v1h-1zM20 56h1v1h-1zM60 22h1v1h-1zM69 42h1v1h-1zM24 11h2v1h-2zM6 50h1v1h-1zM30 60h1v1h-1zM25 20h1v1h-1zM30 7h1v1h-1zM13 29h1v1h-1zM33 4h1v1h-1zM58 25h2v1h-2zM5 69h1v1h-1zM57 41h1v1h-1zM70 29h1v1h-1zM55 67h1v1h-1zM13 16h1v1h-1zM71 32h1v1h-1zM55 57h2v1h-2zM51 33h1v1h-1zM41 52h1v1h-1zM45 50h1v1h-1zM61 38h2v1h-2zM32 51h1v1h-1zM66 47h2v1h-2zM15 50h2v1h-2zM21 5h1v1h-1zM57 29h1v1h-1zM29 59h1v1h-1zM23 67h1v1h-1zM24 36h1v1h-1zM61 52h1v1h-1zM70 67h2v1h-2zM55 45h1v1h-1zM40 64h1v1h-1zM36 40h1v1h-1zM68 17h1v1h-1zM48 28h1v1h-1zM37 18h1v1h-1zM23 66h1v1h-1zM47 63h1v1h-1zM59 29h1v1h-1zM17 70h1v1h-1zM30 59h1v1h-1zM14 19h1v1h-1zM31 42h1v1h-1zM49 57h1v1h-1zM8 3h1v1h-1zM54 1h1v1h-1zM31 34h1v1h-1zM42 44h2v1h-2zM29 23h1v1h-1zM55 65h1v1h-1zM47 36h1v1h-1zM55 67h2v1h-2zM55 69h1v1h-1zM18 61h1v1h-1zM49 61h1v1h-1zM59 0h1v1h-1zM49 38h1v1h-1zM26 62h1v1h-1zM49 48h1v1h-1zM3 59h1v1h-1zM19 10h1v1h-1zM62 36h1v1h-1zM22 40h1v1h-1zM49 23h2v1h-2zM65 22h2v1h-2zM34 63h2v1h-2zM54 58h2v1h-2zM39 8h2v1h-2zM7 14h1v1h-1zM15 29h1v1h-1zM49 26h1v1h-1zM34 20h1v1h-1zM57 64h2v1h-2zM52 57h1v1h-1zM36 70h1v1h-1zM3 38h1v1h-1zM1 45h2v1h-2zM3 69h2v1h-2zM71 56h1v1h-1zM28 71h1v1h-1zM67 68h1v1h-1zM6 31h1v1h-1zM38 1h1v1h-1zM71 27h1v1h-1zM10 38h1v1h-1zM3 43h1v1h-1zM10 11h2v1h-2zM67 45h1v1h-1zM51 14h2v1h-2zM53 28h1v1h-1zM27 51h1v1h-1zM71 47h1v1h-1zM9 10h1v1h-1zM56 25h2v1h-2zM65 45h2v1h-2zM57 18h1v1h-1zM23 61h1v1h-1zM18 28h2v1h-2zM64 34h1v1h-1zM30 62h2v1h-2zM35 18h1v1h-1zM0 54h1v1h-1zM59 25h1v1h-1zM54 14h2v1h-2zM70 58h1v1h-1zM38 30h1v1h-1zM0 40h1v1h-1zM56 20h1v1h-1zM9 27h1v1h-1zM28 11h2v1h-2zM12 22h1v1h-1zM41 47h2v1h-2zM59 27h1v1h-1zM34 46h1v1h-1zM43 18h1v1h-1zM7 64h1v1h-1zM19 69h1v1h-1zM11 11h2v1h-2zM8 16h1v1h-1zM56 27h1v1h-1zM34 29h2v1h-2zM15 51h1v1h-1zM11 7h1v1h-1zM42 44h1v1h-1zM47 5h2v1h-2zM28 60h1v1h-1zM58 26h1v1h-1zM43 3h1v1h-1zM5 27h1v1h-1zM17 4h1v1h-1zM9 2h1v1h-1zM23 54h1v1h-1zM40 7h1v1h-1zM14 38h1v1h-1zM29 67h1v1h-1zM67 30h2v1h-2zM40 69h2v1h-2zM12 52h1v1h-1zM16 64h1v1h-1zM49 40h1v1h-1zM39 27h2v1h-2zM56 11h1v1h-1zM11 63h1v1h-1zM11 52h1v1h-1zM18 47h1v1h-1zM5 68h1v1h-1zM9 16h2v1h-2zM63 22h1v1h-1zM7 29h1v1h-1zM42 10h1v1h-1zM43 31h1v1h-1zM13 29h1v1h-1zM59 4h1v1h-1zM34 26h1v1h-1zM13 12h1v1h-1zM34 48h1v1h-1zM26 67h1v1h-1zM15 61h1v1h-1zM42 11h1v1h-1zM65 5h1v1h-1zM4 14h2v1h-2zM60 9h2v1h-2zM17 70h1v1h-1zM1 19h1v1h-1zM66 40h1v1h-1zM56 4h1v1h-1zM37 61h1v1h-1zM28 0h2v1h-2zM11 12h1v1h-1zM38 26h1v1h-1zM31 24h1v1h-1zM47 20h1v1h-1zM63 2h1v1h-1zM4 7h1v1h-1zM7 41h1v1h-1zM43 4h2v1h-2zM3 20h2v1h-2zM48 14h1v1h-1zM59 40h1v1h-1zM7 49h2v1h-2zM22 26h1v1h-1zM26 47h1v1h-1zM62 33h1v1h-1zM30 21h2v1h-2zM47 58h1v1h-1zM57 61h1v1h-1zM11 21h1v1h-1zM63 68h1v1h-1zM44 64h1v1h-1zM0 33h1v1h-1zM64 2h1v1h-1zM56 2h1v1h-1zM43 9h1v1h-1zM37 21h1v1h-1zM40 70h1v1h-1zM22 63h1v1h-1zM12 68h1v1h-1zM12 21h1v1h-1zM18 35h1v1h-1zM50 50h1v1h-1zM8 66h2v1h-2zM56 44h2v1h-2zM68 33h1v1h-1zM10 9h1v1h-1zM30 37h1v1h-1zM64 26h1v1h-1zM70 46h1v1h-1zM7 68h1v1h-1zM49 47h1v1h-1zM26 39h1v1h-1zM6 23h2v1h-2zM18 15h2v1h-2zM15 48h1v1h-1zM52 22h1v1h-1zM38 70h1v1h-1zM8 55h1v1h-1zM38 48h1v1h-1zM25 4h1v1h-1zM19 52h1v1h-1zM54 70h1v1h-1zM26 35h1v1h-1zM41 54h2v1h-2zM68 33h1v1h-1zM0 4h1v1h-1zM17 49h2v1h-2zM47 8h1v1h-1zM20 11h1v1h-1zM62 27h1v1h-1zM1 42h1v1h-1zM8 17h1v1h-1zM27 70h1v1h-1zM38 12h1v1h-1zM9 20h1v1h-1zM55 36h1v1h-1zM27 33h1v1h-1zM69 43h1v1h-1zM68 46h2v1h-2zM3 49h1v1h-1zM36 4h1v1h-1zM5 29h1v1h-1zM65 65h1v1h-1zM67 52h1v1h-1zM41 68h1v1h-1zM68 33h2v1h-2zM19 44h2v1h-2zM40 61h1v1h-1zM57 15h2v1h-2zM71 7h1v1h-1zM60 59h2v1h-2zM48 51h1v1h-1zM54 48h1v1h-1zM27 52h1v1h-1zM43 31h1v1h-1zM12 32h1v1h-1zM32 25h1v1h-1zM39 60h1v1h-1zM16 54h1v1h-1zM26 64h1v1h-1zM41 15h1v1h-1zM21 59h1v1h-1zM20 22h1v1h-1zM28 64h1v1h-1zM70 59h1v1h-1zM3 46h1v1h-1zM48 24h1v1h-1zM48 29h1v1h-1z"/><path fill="#c39a96" d="M5 50h1v1h-1zM58 16h1v1h-1zM4 65h1v1h-1zM5 8h1v1h-1zM66 56h1v1h-1zM20 36h2v1h-2zM7 17h1v1h-1zM47 51h1v1h-1zM5 49h2v1h-2zM7 54h1v1h-1zM66 12h1v1h-1zM20 37h1v1h-1zM39 70h1v1h-1zM63 20h1v1h-1zM18 51h1v1h-1zM39 50h1v1h-1zM45 15h1v1h-1zM57 48h1v1h-1zM62 35h1v1h-1zM31 46h1v1h-1zM9 14h1v1h-1zM71 14h1v1h-1zM4 55h2v1h-2zM19 57h1v1h-1zM29 9h2v1h-2zM18 7h1v1h-1zM3 71h1v1h-1zM28 34h1v1h-1zM19 54h2v1h-2zM62 40h2v1h-2zM66 20h2v1h-2zM34 18h2v1h-2zM67 33h2v1h-2zM36 21h1v1h-1zM43 6h1v1h-1zM60 24h1v1h-1zM13 26h1v1h-1zM62 40h1v1h-1zM15 49h1v1h-1zM26 41h1v1h-1zM24 45h2v1h-2zM35 50h1v1h-1zM6 36h1v1h-1zM9 53h1v1h-1zM45 60h1v1h-1zM6 20h1v1h-1zM48 35h1v1h-1zM39 2h1v1h-1zM65 34h1v1h-1zM63 13h1v1h-1zM30 57h1v1h-1zM41 24h1v1h-1zM3 22h2v1h-2zM59 2h1v1h-1zM14 53h1v1h-1zM19 8h1v1h-1zM53 61h1v1h-1zM10 18h1v1h-1zM20 12h1v1h-1zM9 58h1v1h-1zM10 5h1v1h-1zM69 59h1v1h-1zM42 56h1v1h-1zM59 71h1v1h-1zM24 19h2v1h-2zM59 23h2v1h-2zM66 48h1v1h-1zM15 0h1v1h-1zM20 3h1v1h-1zM52 29h2v1h-2zM34 25h1v1h-1zM59 68h1v1h-1zM61 14h2v1h-2zM63 38h1v1h-1zM16 71h1v1h-1zM2 66h1v1h-1z"/><path fill="#ffffff" d="M4 24h1v1h-1zM55 25h1v1h-1zM12 17h2v1h-2zM14 64h1v1h-1zM41 36h2v1h-2zM33 62h1v1h-1zM7 30h1v1h-1zM67 12h1v1h-1zM48 18h1v1h-1zM10 71h1v1h-1zM53 42h2v1h-2zM22 68h1v1h-1zM63 25h2v1h-2zM11 17h1v1h-1zM26 20h1v1h-1zM64 51h2v1h-2zM43 56h2v1h-2zM20 4h1v1h-1zM1 54h1v1h-1zM47 49h2v1h-2zM1 0h1v1h-1zM18 67h2v1h-2zM40 37h1v1h-1zM62 6h1v1h-1zM71 26h1v1h-1zM6 59h1v1h-1zM37 24h1v1h-1zM37 66h1v1h-1zM21 3h2v1h-2zM38 0h1v1h-1zM28 62h2v1h-2zM0 53h2v1h-2zM11 4h1v1h-1zM16 61h1v1h-1zM44 43h1v1h-1zM51 39h1v1h-1zM14 46h1v1h-1zM13 51h1v1h-1zM55 3h2v1h-2zM48 7h2v1h-2zM36 19h1v1h-1z"/><path fill="#f0a0c0" d="M12 5h2v1h-2zM43 64h1v1h-1zM15 2h1v1h-1zM3 44h1v1h-1zM36 7h1v1h-1zM15 24h1v1h-1zM9 49h1v1h-1zM29 43h2v1h-2zM56 16h1v1h-1zM50 38h2v1h-2zM9 68h2v1h-2zM57 71h1v1h-1zM28 70h1v1h-1zM71 26h1v1h-1zM46 59h1v1h-1zM36 31h1v1h-1zM58 56h1v1h-1zM28 21h1v1h-1zM31 12h1v1h-1zM38 2h1v1h-1zM52 56h1v1h-1zM28 8h2v1h-2zM70 53h1v1h-1zM48 21h2v1h-2z"/><path fill="#a89210" d="M33 1h1v1h-1zM5 16h1v1h-1zM34 30h1v1h-1zM70 53h1v1h-1zM3 27h2v1h-2zM51 69h1v1h-1zM24 27h2v1h-2zM53 69h2v1h-2zM12 65h1v1h-1zM68 47h1v1h-1zM40 9h1v1h-1zM24 47h1v1h-1zM44 0h1v1h-1zM43 70h2v1h-2zM49 67h1v1h-1zM47 57h1v1h-1zM17 39h1v1h-1zM12 66h2v1h-2zM34 47h1v1h-1zM56 70h1v1h-1zM67 33h1v1h-1zM16 62h1v1h-1zM46 17h1v1h-1zM61 1h1v1h-1zM67 33h1v1h-1zM41 23h1v1h-1zM18 14h1v1h-1zM30 9h1v1h-1zM70 8h2v1h-2zM26 11h2v1h-2zM32 60h2v1h-2zM68 14h2v1h-2zM17 13h1v1h-1zM9 22h1v1h-1zM17 48h1v1h-1zM32 8h1v1h-1zM3 56h1v1h-1zM27 57h1v1h-1zM16 31h1v1h-1zM38 59h1v1h-1zM53 71h1v1h-1zM40 34h1v1h-1zM17 41h1v1h-1zM2 35h1v1h-1zM41 43h1v1h-1zM44 27h1v1h-1zM6 8h1v1h-1zM57 69h1v1h-1zM60 41h1v1h-1zM48 20h1v1h-1zM18 54h2v1h-2zM47 52h2v1h-2zM59 47h1v1h-1zM1 56h1v1h-1zM64 49h1v1h-1zM59 15h2v1h-2zM56 12h1v1h-1zM35 55h1v1h-1zM3 32h2v1h-2zM34 70h2v1h-2zM39 47h1v1h-1zM40 29h1v1h-1zM70 0h1v1h-1zM62 32h1v1h-1zM47 1h1v1h-1zM2 70h1v1h-1zM29 71h1v1h-1zM35 1h1v1h-1zM9 35h1v1h-1zM63 44h1v1h-1zM67 38h1v1h-1zM64 9h1v1h-1zM45 43h1v1h-1zM16 44h1v1h-1zM61 63h2v1h-2zM55 33h1v1h-1zM7 33h1v1h-1zM67 10h1v1h-1zM45 63h1v1h-1zM48 59h1v1h-1zM5 14h1v1h-1zM30 30h2v1h-2zM68 38h1v1h-1zM59 43h1v1h-1zM56 33h1v1h-1zM30 33h1v1h-1zM54 66h2v1h-2zM23 13h2v1h-2zM57 36h1v1h-1z"/><path fill="#12d0d8" d="M41 33h1v1h-1zM43 55h1v1h-1zM17 29h1v1h-1zM70 65h1v1h-1zM9 11h2v1h-2zM41 46h1v1h-1zM19 22h1v1h-1zM2 61h2v1h-2zM1 26h2v1h-2zM17 30h1v1h-1zM3 41h1v1h-1zM38 8h2v1h-2zM41 22h1v1h-1zM5 65h1v1h-1zM9 38h2v1h-2zM8 54h2v1h-2zM31 5h2v1h-2zM47 13h2v1h-2zM68 19h1v1h-1zM26 5h2v1h-2zM54 29h2v1h-2zM70 25h1v1h-1zM30 13h1v1h-1zM3 17h1v1h-1zM66 22h1v1h-1zM1 60h1v1h-1zM39 39h1v1h-1zM46 33h2v1h-2zM70 54h1v1h-1z"/><path fill="#3cf05a" d="M3 68h1v1h-1zM61 32h1v1h-1zM59 18h1v1h-1zM31 64h1v1h-1zM11 59h1v1h-1zM23 19h2v1h-2zM54 9h1v1h-1zM0 69h2v1h-2zM52 18h1v1h-1zM7 28h1v1h-1zM71 23h1v1h-1zM51 8h2v1h-2zM23 33h1v1h-1zM36 64h1v1h-1zM6 69h1v1h-1zM41 62h1v1h-1zM46 25h1v1h-1zM46 0h1v1h-1zM22 40h1v1h-1zM27 35h1v1h-1zM14 49h2v1h-2zM45 8h1v1h-1zM42 4h1v1h-1zM66 35h1v1h-1z"/></pattern><clipPath id="oc"><polygon points="570.5,186 575.4,176 574,172.9 577.5,169.4 590,167 593.4,161.8 598.2,165 601.7,156.2 610.7,155.5 613.5,160 625.2,153 628,170.8 636.5,168.5 655,159 663,167.7 667.5,171 687,165 706,167.7 707.7,179 723,176 755,164.4 745,203.5 758,205 766,201 774.5,202.7 777,211.7 771,216.5 764.7,223 756.5,230 760,239 745,241.4 742.7,246 748.4,254.4 753,260 755.7,267.5 756.5,275.6 752.5,283.7 755,293.5 751,294 748.4,287 743.5,286 744,295 729,298.4 720.7,301.7 723,311.4 715,318 712.6,326 712,330 715,344.4 717.7,352.6 719.7,362 717.7,375 708,382 690,385 682,391.7 683.5,401.4 687,411.4 698.3,416.3 695,422 690,427 689.3,434 680.4,436.6 678,440.7 671.4,444 668,450.5 665.7,446.4 663.3,439 645.4,440 642,444.8 634,443 618.5,440 611,435 606.3,435.8 604,447 589,449 578,452 571.4,462 568,468.4 566.7,480.7 594.4,478.3 593.6,492 585.4,497 583.8,516.5 580.5,516.5 581.3,505 557.7,508.4 551,508 551.7,527.4 556.9,533.9 561.4,543 562.7,558.6 558.2,557.3 539.3,543 530,537.8 525,545.6 523,530.6 519,532.6 492.4,530.6 490.4,533.2 480,532.6 481.2,518.2 479.5,513.3 479.5,508.4 498.3,508.4 503.2,492 500.7,490.5 480.4,489.7 478.7,482.3 476.3,472.6 475.5,453.8 513.7,454.7 513.6,435 521,435 521,416 516.5,411.2 515.7,400.6 502.7,401.4 497.8,416 494.6,416 491.3,401.4 488.9,403 470,403.9 475,386.8 459.5,377 456.3,370.5 449.8,357.5 452.2,347.7 479,355 488,356.6 497.8,336.3 511.7,336.3 515,326.5 532,293.5 528,291.9 527.2,287.8 532,278.9 530.5,272.3 534.6,265 545,262.6 539.4,256 548.4,254.4 570.4,254.4 575,240 580,231 584.4,218 588.5,208 587,197 578,196" fill="#000" /></clipPath></defs><g clip-path="url(#oc)"><polygon points="570.5,186 575.4,176 574,172.9 577.5,169.4 590,167 593.4,161.8 598.2,165 601.7,156.2 610.7,155.5 613.5,160 625.2,153 628,170.8 636.5,168.5 655,159 663,167.7 667.5,171 687,165 706,167.7 707.7,179 723,176 755,164.4 745,203.5 758,205 766,201 774.5,202.7 777,211.7 771,216.5 764.7,223 756.5,230 760,239 745,241.4 742.7,246 748.4,254.4 753,260 755.7,267.5 756.5,275.6 752.5,283.7 755,293.5 751,294 748.4,287 743.5,286 744,295 729,298.4 720.7,301.7 723,311.4 715,318 712.6,326 712,330 715,344.4 717.7,352.6 719.7,362 717.7,375 708,382 690,385 682,391.7 683.5,401.4 687,411.4 698.3,416.3 695,422 690,427 689.3,434 680.4,436.6 678,440.7 671.4,444 668,450.5 665.7,446.4 663.3,439 645.4,440 642,444.8 634,443 618.5,440 611,435 606.3,435.8 604,447 589,449 578,452 571.4,462 568,468.4 566.7,480.7 594.4,478.3 593.6,492 585.4,497 583.8,516.5 580.5,516.5 581.3,505 557.7,508.4 551,508 551.7,527.4 556.9,533.9 561.4,543 562.7,558.6 558.2,557.3 539.3,543 530,537.8 525,545.6 523,530.6 519,532.6 492.4,530.6 490.4,533.2 480,532.6 481.2,518.2 479.5,513.3 479.5,508.4 498.3,508.4 503.2,492 500.7,490.5 480.4,489.7 478.7,482.3 476.3,472.6 475.5,453.8 513.7,454.7 513.6,435 521,435 521,416 516.5,411.2 515.7,400.6 502.7,401.4 497.8,416 494.6,416 491.3,401.4 488.9,403 470,403.9 475,386.8 459.5,377 456.3,370.5 449.8,357.5 452.2,347.7 479,355 488,356.6 497.8,336.3 511.7,336.3 515,326.5 532,293.5 528,291.9 527.2,287.8 532,278.9 530.5,272.3 534.6,265 545,262.6 539.4,256 548.4,254.4 570.4,254.4 575,240 580,231 584.4,218 588.5,208 587,197 578,196" fill="#fdf800" /><polygon points="570.5,186 575.4,176 574,172.9 577.5,169.4 590,167 593.4,161.8 598.2,165 601.7,156.2 610.7,155.5 613.5,160 625.2,153 628,170.8 636.5,168.5 655,159 663,167.7 667.5,171 687,165 706,167.7 707.7,179 723,176 755,164.4 745,203.5 758,205 766,201 774.5,202.7 777,211.7 771,216.5 764.7,223 756.5,230 760,239 745,241.4 742.7,246 748.4,254.4 753,260 755.7,267.5 756.5,275.6 752.5,283.7 755,293.5 751,294 748.4,287 743.5,286 744,295 729,298.4 720.7,301.7 723,311.4 715,318 712.6,326 712,330 715,344.4 717.7,352.6 719.7,362 717.7,375 708,382 690,385 682,391.7 683.5,401.4 687,411.4 698.3,416.3 695,422 690,427 689.3,434 680.4,436.6 678,440.7 671.4,444 668,450.5 665.7,446.4 663.3,439 645.4,440 642,444.8 634,443 618.5,440 611,435 606.3,435.8 604,447 589,449 578,452 571.4,462 568,468.4 566.7,480.7 594.4,478.3 593.6,492 585.4,497 583.8,516.5 580.5,516.5 581.3,505 557.7,508.4 551,508 551.7,527.4 556.9,533.9 561.4,543 562.7,558.6 558.2,557.3 539.3,543 530,537.8 525,545.6 523,530.6 519,532.6 492.4,530.6 490.4,533.2 480,532.6 481.2,518.2 479.5,513.3 479.5,508.4 498.3,508.4 503.2,492 500.7,490.5 480.4,489.7 478.7,482.3 476.3,472.6 475.5,453.8 513.7,454.7 513.6,435 521,435 521,416 516.5,411.2 515.7,400.6 502.7,401.4 497.8,416 494.6,416 491.3,401.4 488.9,403 470,403.9 475,386.8 459.5,377 456.3,370.5 449.8,357.5 452.2,347.7 479,355 488,356.6 497.8,336.3 511.7,336.3 515,326.5 532,293.5 528,291.9 527.2,287.8 532,278.9 530.5,272.3 534.6,265 545,262.6 539.4,256 548.4,254.4 570.4,254.4 575,240 580,231 584.4,218 588.5,208 587,197 578,196" fill="url(#yp)" /><path fill="#c49c0e" d="M614 230h2v2h-2zM723 201h2v2h-2zM708 262h3v2h-3zM663 226h2v3h-2zM639 202h2v2h-2zM479 469h2v3h-2zM609 391h3v2h-3zM711 367h3v2h-3zM699 368h2v3h-2zM761 212h2v2h-2zM703 194h3v2h-3zM542 287h2v2h-2zM652 357h3v2h-3zM654 184h4v3h-4zM674 236h2v3h-2zM739 230h4v3h-4zM525 477h3v2h-3zM635 395h3v3h-3zM696 312h2v2h-2zM524 506h2v2h-2zM582 418h2v2h-2zM563 425h2v3h-2zM565 255h3v2h-3zM592 394h2v3h-2zM627 339h2v2h-2zM689 253h3v2h-3zM693 244h2v3h-2zM493 522h3v2h-3zM492 524h4v3h-4zM628 232h2v2h-2zM577 261h2v2h-2zM581 431h2v2h-2zM526 421h3v3h-3zM542 464h3v3h-3zM546 294h2v2h-2zM481 379h4v3h-4zM551 507h2v3h-2zM552 382h2v2h-2zM675 314h2v2h-2zM531 514h2v3h-2zM622 368h3v2h-3zM622 436h3v3h-3zM645 322h2v2h-2zM581 360h4v3h-4zM616 198h3v3h-3zM511 385h4v3h-4zM531 287h2v2h-2zM540 291h2v2h-2zM577 171h3v3h-3zM731 250h2v2h-2zM650 412h2v2h-2zM566 328h3v3h-3zM579 373h2v2h-2zM599 176h2v2h-2zM607 264h2v2h-2zM644 195h2v3h-2zM551 280h2v2h-2zM522 357h3v2h-3zM702 229h2v3h-2zM574 403h3v2h-3zM701 348h4v3h-4zM756 228h2v3h-2zM739 221h2v2h-2zM499 507h3v2h-3zM713 299h3v2h-3zM679 290h4v3h-4zM697 354h2v2h-2zM679 360h2v2h-2zM625 345h3v3h-3zM622 356h4v3h-4zM597 282h3v2h-3zM592 205h2v3h-2zM576 289h3v2h-3zM595 401h4v3h-4zM690 365h2v2h-2zM650 214h2v2h-2zM679 371h2v2h-2zM624 437h2v2h-2zM581 444h2v2h-2zM660 349h2v3h-2zM641 291h2v2h-2zM587 280h2v3h-2zM683 196h2v2h-2zM514 473h2v3h-2zM547 351h3v3h-3zM573 396h2v3h-2zM664 194h2v3h-2zM638 269h2v3h-2zM707 187h4v3h-4zM548 271h2v2h-2zM544 267h4v3h-4zM477 457h3v2h-3zM754 225h3v3h-3zM543 354h3v3h-3zM533 321h2v3h-2zM688 169h3v3h-3zM640 322h2v2h-2zM664 216h3v3h-3zM670 197h3v2h-3zM656 173h3v2h-3zM548 535h2v3h-2zM634 292h4v3h-4zM611 294h3v3h-3zM703 246h4v3h-4zM526 463h3v3h-3zM711 254h2v2h-2zM498 368h3v3h-3zM677 241h3v2h-3zM599 303h2v2h-2zM582 254h2v2h-2zM545 320h2v2h-2zM574 412h2v3h-2zM500 487h2v2h-2zM599 272h2v2h-2zM711 244h2v2h-2zM637 327h2v2h-2zM579 172h2v3h-2zM608 192h3v3h-3zM481 361h3v2h-3zM661 366h3v3h-3zM529 369h2v2h-2zM707 240h2v2h-2zM550 307h4v3h-4zM696 314h4v3h-4zM549 395h2v2h-2zM653 418h3v2h-3zM614 213h3v2h-3zM664 310h3v2h-3zM637 381h2v2h-2zM632 373h3v3h-3zM491 528h3v3h-3zM516 404h3v3h-3zM578 234h2v3h-2zM682 226h4v3h-4zM694 259h2v3h-2zM570 316h2v2h-2zM616 345h3v3h-3zM639 288h3v2h-3zM523 337h2v2h-2zM713 282h4v3h-4zM670 366h3v3h-3zM516 403h2v3h-2zM630 308h3v2h-3zM563 364h2v3h-2zM525 383h2v3h-2zM701 280h2v2h-2zM461 360h2v2h-2zM660 255h2v3h-2zM709 311h2v3h-2zM680 242h2v2h-2zM567 482h3v2h-3zM716 288h4v3h-4zM738 240h2v2h-2zM521 511h2v2h-2zM483 530h3v3h-3zM645 207h2v2h-2zM596 397h2v2h-2zM553 303h3v2h-3zM580 297h3v3h-3zM660 168h3v3h-3zM596 240h2v3h-2zM627 404h2v3h-2zM543 406h4v3h-4zM712 286h2v2h-2zM567 408h4v3h-4zM502 474h2v2h-2zM554 308h4v3h-4zM705 240h3v3h-3zM568 388h2v3h-2zM614 239h2v3h-2zM580 449h3v2h-3zM570 412h3v2h-3zM531 273h2v2h-2zM601 375h2v2h-2zM554 351h2v2h-2zM681 374h2v3h-2zM499 367h3v2h-3zM577 369h2v2h-2zM542 488h2v2h-2zM699 207h2v3h-2zM682 430h3v2h-3zM638 420h3v3h-3zM589 348h2v2h-2zM649 389h2v2h-2zM484 477h2v3h-2zM592 336h3v2h-3zM485 488h2v3h-2zM734 182h4v3h-4zM700 279h2v3h-2zM600 391h3v2h-3zM618 201h3v2h-3zM636 327h2v3h-2zM556 298h3v2h-3zM701 359h4v3h-4zM474 357h2v2h-2zM500 488h3v3h-3zM581 307h2v2h-2zM459 373h2v3h-2zM656 381h2v3h-2zM491 482h3v3h-3zM515 394h3v3h-3zM648 312h2v3h-2zM662 397h3v3h-3zM598 296h4v3h-4z"/><path fill="#0e7a2a" d="M666 183h2v2h-2zM602 280h2v3h-2zM591 223h3v3h-3zM476 386h3v3h-3zM584 398h2v2h-2zM548 275h3v3h-3zM625 381h3v3h-3zM523 466h4v3h-4zM713 368h3v3h-3zM515 369h2v3h-2zM542 370h2v2h-2zM491 464h2v2h-2zM528 489h3v3h-3zM502 345h2v3h-2zM683 192h4v3h-4zM670 312h3v3h-3zM577 373h2v2h-2zM684 338h2v3h-2zM531 371h4v3h-4zM531 480h2v2h-2zM683 244h3v2h-3zM533 504h4v3h-4zM587 358h4v3h-4zM616 251h3v2h-3zM568 445h3v3h-3zM635 255h3v3h-3zM493 369h2v2h-2zM716 232h3v2h-3zM689 334h2v2h-2zM745 226h2v2h-2zM680 330h2v2h-2zM663 272h3v2h-3zM732 179h2v2h-2z"/><path fill="#a89210" d="M563 475h4v3h-4zM678 300h2v2h-2zM609 327h2v3h-2zM587 395h2v2h-2zM677 298h3v3h-3zM596 219h3v2h-3zM661 336h3v2h-3zM612 217h2v3h-2zM510 351h3v3h-3zM630 387h3v3h-3zM528 519h3v2h-3zM688 265h2v2h-2zM662 290h2v2h-2zM605 424h2v2h-2zM677 207h2v3h-2zM644 412h2v2h-2zM602 308h2v2h-2zM718 186h3v2h-3zM554 271h4v3h-4zM592 210h2v2h-2zM633 372h3v3h-3zM659 383h2v2h-2zM582 360h3v2h-3zM465 370h3v3h-3zM678 280h2v2h-2zM740 172h3v2h-3zM463 363h3v2h-3zM664 338h2v2h-2zM643 335h3v2h-3zM691 168h2v2h-2zM657 186h3v2h-3zM616 362h2v2h-2zM730 232h2v2h-2zM532 356h3v2h-3zM549 353h2v2h-2zM731 225h4v3h-4zM569 381h3v3h-3zM707 346h3v3h-3zM655 235h2v2h-2zM720 177h3v2h-3zM553 340h3v2h-3zM641 376h3v2h-3zM690 424h3v3h-3zM692 300h2v2h-2zM626 393h2v3h-2zM573 373h2v3h-2zM664 270h2v3h-2zM747 270h2v3h-2zM658 418h4v3h-4zM531 519h4v3h-4zM663 368h2v3h-2zM688 303h2v3h-2zM578 371h3v2h-3zM722 238h2v3h-2zM550 406h2v3h-2zM613 392h3v2h-3zM547 315h2v2h-2zM469 357h3v3h-3zM546 396h2v3h-2zM528 396h2v3h-2zM573 383h2v2h-2zM523 526h2v2h-2zM579 179h2v2h-2zM673 393h2v2h-2z"/><path fill="#3cf05a" d="M652 178h2v2h-2zM719 305h3v3h-3zM520 375h2v2h-2zM698 236h3v3h-3zM656 330h3v3h-3zM551 312h4v3h-4zM591 447h2v2h-2zM526 420h2v2h-2zM645 230h3v3h-3zM562 409h2v2h-2zM682 260h2v2h-2zM511 526h3v2h-3zM654 422h4v3h-4zM708 329h2v3h-2z"/><path fill="#c39a96" d="M626 164h3v2h-3zM716 285h3v3h-3zM588 173h2v2h-2zM583 339h4v3h-4zM707 224h3v3h-3zM717 287h2v2h-2zM555 409h3v2h-3zM561 384h4v3h-4zM684 295h2v3h-2zM600 208h3v2h-3zM639 430h2v2h-2zM567 382h2v2h-2zM606 366h3v2h-3zM715 240h2v2h-2zM647 197h2v3h-2zM535 286h3v3h-3zM571 347h2v3h-2zM503 471h3v2h-3zM634 231h3v3h-3zM508 338h2v2h-2z"/><path fill="#cfae7d" d="M583 177h2v1h-2zM582 181h1v1h-1zM584 170h2v2h-2zM586 162h3v2h-3zM604 162h3v2h-3zM602 158h1v2h-1zM592 165h2v2h-2zM582 172h2v2h-2zM581 169h1v1h-1zM592 182h1v2h-1zM582 178h3v2h-3zM580 166h1v1h-1zM577 168h2v3h-2zM597 158h2v2h-2zM590 170h1v1h-1zM581 169h2v1h-2zM574 181h2v2h-2zM576 169h2v1h-2zM579 177h1v1h-1zM599 157h2v2h-2zM573 169h1v1h-1zM579 181h2v1h-2zM582 164h2v1h-2zM603 154h1v1h-1zM577 173h2v3h-2zM587 190h2v2h-2zM574 183h2v1h-2zM575 176h1v1h-1zM611 153h3v2h-3zM596 159h2v1h-2zM572 181h2v1h-2zM582 183h2v1h-2zM589 167h1v1h-1zM577 181h2v1h-2zM594 168h2v1h-2zM586 174h2v1h-2zM574 173h1v2h-1zM577 185h3v2h-3zM584 165h1v2h-1zM584 168h1v1h-1zM586 179h1v1h-1zM577 193h2v2h-2zM589 185h1v1h-1zM601 171h1v2h-1zM594 166h1v1h-1zM579 186h2v2h-2zM580 191h1v1h-1zM599 170h1v1h-1zM571 186h2v1h-2zM576 195h1v1h-1zM578 197h2v2h-2zM601 157h2v2h-2zM569 186h1v1h-1zM582 192h1v1h-1zM584 188h1v1h-1zM601 168h1v1h-1zM575 178h1v2h-1zM582 167h1v2h-1zM601 155h2v3h-2zM591 174h3v2h-3zM601 162h2v3h-2zM583 180h1v1h-1zM574 186h2v1h-2zM580 185h1v1h-1zM594 178h2v3h-2zM608 155h3v2h-3zM585 196h2v2h-2zM574 169h1v1h-1zM587 175h1v1h-1zM602 162h1v2h-1zM586 179h2v1h-2zM586 182h1v2h-1zM580 188h1v2h-1zM598 172h2v1h-2zM580 185h2v3h-2zM590 163h1v1h-1zM599 170h2v3h-2zM603 157h2v1h-2zM610 156h3v2h-3zM601 167h2v2h-2zM577 179h2v1h-2zM585 186h3v2h-3zM585 193h3v2h-3zM576 179h1v1h-1zM575 184h2v3h-2zM577 179h2v1h-2zM575 177h2v2h-2zM586 199h2v1h-2zM596 172h2v1h-2zM577 180h1v2h-1zM573 174h3v2h-3zM583 173h1v2h-1zM587 187h1v2h-1zM592 182h2v2h-2zM590 181h2v2h-2zM601 167h2v1h-2zM593 181h3v2h-3zM578 176h2v3h-2zM587 185h2v2h-2zM586 197h2v3h-2zM601 171h1v1h-1zM580 179h2v2h-2zM606 159h2v3h-2z"/><polygon points="570.5,186 574,170 593,160 602,155 614,155 606,163 601,172 596,180 591,186 588,198 578,197" fill="#cfae7d" /><path fill="#12d0d8" d="M605 155h2v1h-2zM574 190h2v2h-2z"/><path fill="#c39a96" d="M576 192h1v1h-1zM579 170h1v1h-1zM587 195h3v2h-3zM607 159h1v2h-1zM572 183h1v1h-1zM584 181h3v2h-3zM592 179h2v3h-2zM599 173h1v2h-1zM587 197h2v2h-2zM585 165h1v1h-1zM579 174h2v2h-2zM584 175h3v2h-3zM589 167h2v1h-2zM584 173h2v2h-2zM578 172h2v1h-2zM592 181h2v2h-2zM581 173h3v2h-3zM572 180h1v1h-1zM582 174h2v2h-2zM587 188h2v3h-2zM580 177h1v1h-1zM585 170h2v2h-2zM578 196h2v1h-2zM601 168h3v2h-3zM589 167h2v1h-2zM580 190h1v1h-1zM586 196h1v1h-1zM595 164h1v1h-1zM586 170h1v1h-1zM584 165h2v2h-2zM600 167h2v1h-2zM579 173h1v1h-1zM580 179h1v2h-1zM582 185h2v1h-2z"/><path fill="#8a4a2c" d="M581 186h1v2h-1zM580 188h1v1h-1zM580 192h2v1h-2zM601 156h1v1h-1zM587 189h1v1h-1zM581 191h1v2h-1zM586 182h1v2h-1zM583 177h1v1h-1zM597 165h1v1h-1zM601 160h2v1h-2zM601 167h2v1h-2zM576 174h2v1h-2zM581 196h2v1h-2zM582 169h1v2h-1z"/><path fill="#a89210" d="M602 164h2v1h-2zM580 188h1v2h-1zM588 180h1v1h-1zM597 177h2v1h-2zM589 185h1v1h-1zM578 171h1v2h-1zM602 160h2v1h-2zM602 163h1v1h-1zM586 166h2v3h-2zM590 183h2v1h-2zM593 163h2v1h-2zM596 178h2v2h-2zM589 176h2v2h-2z"/><path fill="#0e7a2a" d="M597 158h2v2h-2zM591 180h2v3h-2zM595 179h1v2h-1zM585 180h1v1h-1zM585 176h1v1h-1zM592 160h2v2h-2z"/><path fill="#f0a0c0" d="M586 186h1v1h-1zM599 170h2v1h-2zM601 165h2v2h-2zM595 160h3v2h-3zM579 180h2v2h-2z"/><path fill="#ffffff" d="M588 177h3v2h-3z"/><polygon points="578,172 590,169 592,177 585,184 577,181" fill="#a89210" /><path fill="#8a4a2c" d="M625 174h1v2h-1zM624 167h1v1h-1zM611 186h1v1h-1zM615 157h2v2h-2zM628 165h2v2h-2zM604 177h2v2h-2zM607 183h2v2h-2zM605 180h2v1h-2zM609 163h2v2h-2zM607 174h1v1h-1zM622 153h2v2h-2zM612 180h2v2h-2zM626 156h3v2h-3zM606 173h2v2h-2zM615 158h1v2h-1zM621 182h2v2h-2zM605 173h2v2h-2zM614 167h2v2h-2zM615 162h2v3h-2zM623 160h2v1h-2zM616 179h2v1h-2zM608 182h3v2h-3zM624 181h2v2h-2zM627 176h2v3h-2zM603 174h1v1h-1zM601 164h2v1h-2zM628 172h2v1h-2zM621 171h1v2h-1zM620 165h1v2h-1zM608 160h2v1h-2zM615 173h1v2h-1zM605 163h2v2h-2zM605 174h2v2h-2zM614 160h2v1h-2zM620 174h2v2h-2zM621 186h2v1h-2zM620 171h2v2h-2zM622 166h2v3h-2zM608 159h3v2h-3zM628 176h1v2h-1zM618 161h1v1h-1zM618 167h1v2h-1zM620 155h2v2h-2zM610 170h2v3h-2zM621 178h2v3h-2zM610 168h1v2h-1zM616 166h1v1h-1zM624 179h2v2h-2zM605 163h1v1h-1zM620 159h2v1h-2zM612 171h2v2h-2zM620 162h2v1h-2zM620 182h2v1h-2zM600 171h2v3h-2zM602 177h2v2h-2zM620 161h1v1h-1zM608 184h1v1h-1zM622 178h2v2h-2zM620 165h2v1h-2zM618 186h1v2h-1zM616 174h2v3h-2zM607 167h1v2h-1zM622 160h1v1h-1zM607 158h1v2h-1zM610 167h2v1h-2zM608 162h3v2h-3zM609 184h2v2h-2zM614 179h1v2h-1zM621 175h2v1h-2zM624 173h1v2h-1zM625 175h2v2h-2zM615 178h2v1h-2zM619 178h2v1h-2zM609 181h3v2h-3zM616 159h2v1h-2zM609 171h2v2h-2zM627 164h3v2h-3zM612 174h2v2h-2zM627 162h1v1h-1zM606 160h1v1h-1zM618 160h2v1h-2zM609 180h1v1h-1zM620 176h2v3h-2zM614 163h2v2h-2zM613 187h1v1h-1zM619 155h1v1h-1z"/><polygon points="601.7,164 612,157 625,153 628.7,172 628,183 621,188.5 609,187 601,179" fill="#8a4a2c" /><path fill="#cfae7d" d="M606 167h1v1h-1zM613 179h3v2h-3zM613 168h2v2h-2zM609 183h2v1h-2zM612 168h1v1h-1zM621 184h1v1h-1zM614 180h2v2h-2zM615 182h1v2h-1zM616 164h1v2h-1zM622 167h2v1h-2zM622 165h1v2h-1zM623 179h1v1h-1zM614 156h1v1h-1zM613 169h2v1h-2zM613 185h2v2h-2zM615 184h1v1h-1zM618 156h1v1h-1zM607 166h2v2h-2zM622 171h1v2h-1zM606 162h2v2h-2zM614 167h2v1h-2z"/><path fill="#4a1c12" d="M617 160h3v2h-3zM624 157h1v1h-1zM617 156h1v2h-1zM621 182h1v2h-1zM623 170h2v1h-2zM611 181h2v1h-2zM616 183h2v2h-2zM612 157h1v2h-1zM619 183h2v3h-2zM611 177h3v2h-3zM614 160h2v2h-2zM613 159h2v2h-2zM617 186h2v2h-2zM609 178h1v2h-1zM604 181h2v2h-2zM622 161h1v2h-1zM608 176h2v2h-2zM619 164h1v2h-1zM614 171h2v1h-2zM612 168h1v2h-1zM603 181h1v2h-1zM616 161h2v2h-2zM602 171h2v2h-2zM603 166h1v1h-1zM611 165h1v1h-1zM618 170h1v1h-1zM602 166h2v1h-2zM602 164h2v2h-2zM624 163h2v2h-2zM617 159h1v1h-1z"/><path fill="#12d0d8" d="M603 175h3v2h-3zM623 179h3v2h-3zM614 177h2v1h-2zM608 185h2v1h-2zM620 177h2v2h-2zM622 167h2v2h-2zM620 165h3v2h-3zM603 179h2v2h-2zM615 178h1v2h-1z"/><path fill="#f24a1e" d="M609 170h1v1h-1zM612 170h2v2h-2zM622 160h2v2h-2zM620 173h2v2h-2zM612 186h1v1h-1zM622 182h2v3h-2zM618 165h2v1h-2zM611 169h3v2h-3zM613 176h2v2h-2zM619 176h1v1h-1zM625 182h1v1h-1zM610 172h2v1h-2zM614 187h1v1h-1zM626 174h2v3h-2zM602 170h1v2h-1z"/><path fill="#4a1c12" d="M626 172h3v2h-3zM617 165h1v1h-1zM622 173h1v1h-1zM620 161h1v1h-1zM619 163h2v1h-2zM621 158h2v2h-2zM618 165h1v1h-1zM622 172h1v1h-1zM623 154h1v1h-1zM614 160h1v1h-1zM618 166h2v1h-2zM614 157h2v1h-2zM619 169h1v1h-1zM623 157h2v2h-2zM613 156h1v2h-1zM619 161h1v1h-1zM621 153h1v2h-1zM617 170h1v1h-1zM615 164h1v1h-1zM623 153h2v2h-2zM617 162h2v3h-2zM616 159h3v2h-3zM615 155h1v2h-1zM615 161h1v1h-1zM623 157h1v2h-1zM616 158h1v2h-1zM619 154h2v3h-2z"/><polygon points="614,157 625,153 627.6,171 622,173 615,168" fill="#4a1c12" /><path fill="#8a4a2c" d="M625 160h1v1h-1zM622 156h1v2h-1zM623 159h2v1h-2zM626 167h1v1h-1zM624 158h1v1h-1zM616 159h1v1h-1zM621 154h1v2h-1zM624 155h2v1h-2zM626 166h2v1h-2z"/><path fill="#f24a1e" d="M626 169h1v1h-1zM623 163h1v1h-1zM623 158h1v1h-1zM619 166h1v1h-1zM619 155h1v2h-1zM616 168h1v2h-1z"/><path fill="#c39a96" d="M593 194h2v3h-2zM614 231h2v2h-2zM595 205h2v2h-2zM617 197h2v2h-2zM592 182h2v2h-2zM601 226h1v1h-1zM597 215h1v1h-1zM616 214h2v2h-2zM588 203h2v1h-2zM606 230h2v3h-2zM599 219h2v2h-2zM627 216h1v2h-1zM604 209h2v3h-2zM615 204h2v1h-2zM594 199h1v1h-1zM610 232h1v1h-1zM602 189h1v2h-1zM627 212h1v1h-1zM587 202h1v1h-1zM602 199h2v1h-2zM599 200h2v2h-2zM610 197h2v3h-2zM617 228h1v1h-1zM595 203h1v1h-1zM596 184h1v2h-1zM607 221h1v2h-1zM617 220h2v3h-2zM601 220h1v2h-1zM606 206h2v1h-2zM604 220h2v2h-2zM618 229h3v2h-3zM616 209h2v3h-2zM620 202h2v2h-2zM605 208h2v3h-2zM602 187h2v3h-2zM610 189h2v2h-2zM602 218h2v1h-2zM611 213h2v2h-2zM609 209h2v2h-2zM602 198h1v2h-1zM619 200h1v1h-1zM588 188h1v2h-1zM588 215h2v1h-2zM608 222h2v1h-2zM615 190h2v3h-2zM608 203h2v2h-2zM615 195h2v3h-2zM624 206h2v1h-2zM594 195h1v2h-1zM589 195h2v2h-2zM610 211h3v2h-3zM592 194h1v1h-1zM604 200h2v1h-2zM623 221h3v2h-3zM604 188h2v3h-2zM610 203h2v2h-2zM606 203h2v2h-2zM607 233h3v2h-3zM619 225h2v2h-2zM603 186h2v2h-2zM621 220h1v2h-1zM598 214h2v2h-2zM593 187h3v2h-3zM600 210h2v1h-2zM603 186h3v2h-3zM609 217h2v2h-2zM623 216h2v1h-2zM599 197h2v2h-2zM590 201h1v2h-1zM605 191h2v2h-2zM593 206h1v1h-1zM613 215h2v2h-2zM587 212h1v1h-1zM599 196h2v1h-2zM606 211h1v1h-1zM598 196h2v2h-2zM619 223h2v2h-2zM617 195h1v1h-1zM590 215h2v1h-2zM622 204h3v2h-3zM608 212h2v3h-2zM589 219h1v1h-1zM614 221h2v2h-2zM597 199h1v1h-1zM595 196h1v1h-1zM613 227h2v2h-2zM601 190h2v2h-2zM603 225h1v1h-1zM607 191h3v2h-3zM625 212h2v1h-2zM595 214h2v3h-2zM596 222h3v2h-3zM614 227h1v1h-1zM594 201h1v2h-1zM606 228h3v2h-3zM591 211h1v2h-1zM598 200h1v1h-1zM597 223h2v2h-2zM618 205h2v2h-2zM592 191h1v2h-1zM590 207h1v1h-1zM621 212h3v2h-3zM606 217h1v2h-1zM600 191h2v1h-2zM591 184h1v1h-1zM597 206h2v2h-2zM613 226h2v2h-2zM610 219h2v2h-2zM600 223h2v2h-2zM615 216h3v2h-3zM623 202h1v1h-1zM610 214h2v2h-2zM600 184h1v1h-1zM610 193h2v3h-2zM620 218h2v1h-2zM615 226h2v2h-2zM591 189h1v2h-1zM624 210h1v2h-1zM586 213h1v1h-1zM620 217h2v2h-2zM619 217h2v1h-2zM598 179h1v2h-1zM614 191h2v2h-2zM598 220h1v1h-1zM590 212h2v2h-2zM591 183h2v1h-2zM603 187h1v2h-1zM606 227h1v1h-1zM623 191h1v2h-1zM624 214h3v2h-3zM612 229h1v1h-1zM603 206h1v1h-1zM604 232h2v1h-2zM591 188h2v3h-2zM615 226h2v2h-2zM605 195h1v1h-1zM606 192h2v1h-2zM606 228h1v1h-1zM605 205h2v1h-2zM598 211h2v2h-2zM618 222h2v2h-2zM598 196h3v2h-3zM601 205h2v3h-2zM596 217h2v2h-2zM603 226h2v1h-2zM598 219h2v3h-2zM589 212h2v1h-2zM594 213h1v2h-1zM617 222h2v3h-2zM613 189h2v1h-2zM610 204h1v1h-1zM614 199h1v1h-1zM609 231h1v1h-1zM607 220h2v2h-2zM597 182h1v1h-1zM622 197h1v1h-1zM594 208h2v3h-2zM609 194h1v2h-1zM599 181h1v1h-1zM607 201h1v1h-1z"/><polygon points="591.3,184.6 601,181.9 606.5,190.2 613.5,191.6 620.4,190.2 623.2,195.7 624.6,205.4 626,215 620.4,222 617.6,229 612,233 603.8,231.7 599.6,224.8 592.7,219.3 587.9,216.5 588.5,205.4 587.9,198.5" fill="#c39a96" /><path fill="#c49c0e" d="M610 231h1v1h-1zM597 199h2v2h-2zM599 195h1v2h-1zM597 213h1v1h-1zM595 185h2v1h-2zM617 224h1v1h-1zM596 205h2v2h-2zM599 200h2v1h-2zM600 193h1v1h-1zM620 205h1v2h-1zM601 204h1v1h-1zM599 204h1v1h-1zM603 191h2v1h-2zM603 189h1v2h-1zM590 193h2v1h-2z"/><path fill="#0e7a2a" d="M597 214h1v2h-1zM591 188h1v1h-1zM618 223h2v1h-2zM589 204h2v1h-2zM620 218h1v1h-1zM620 197h1v1h-1zM617 194h1v2h-1zM617 202h2v1h-2zM598 186h1v1h-1zM621 202h1v1h-1zM620 204h1v1h-1zM613 230h1v1h-1zM591 210h1v1h-1zM605 230h1v1h-1zM613 229h1v2h-1zM602 215h2v1h-2zM593 219h1v2h-1zM616 226h1v1h-1z"/><path fill="#d9829b" d="M602 222h1v1h-1zM618 211h2v2h-2zM613 197h2v1h-2zM605 229h1v2h-1zM598 210h1v2h-1zM592 186h1v1h-1zM606 223h1v1h-1zM596 192h1v2h-1zM592 197h2v2h-2zM590 203h1v1h-1zM622 210h1v1h-1zM606 228h2v1h-2zM596 219h2v2h-2z"/><path fill="#fdf800" d="M610 196h1v1h-1zM594 210h1v1h-1zM614 209h1v1h-1zM604 204h1v1h-1zM608 216h1v1h-1zM617 228h2v1h-2zM590 208h1v1h-1zM592 211h2v2h-2zM593 194h1v2h-1zM603 192h2v1h-2zM592 209h1v1h-1zM591 206h1v1h-1zM610 211h1v1h-1zM616 198h2v2h-2zM613 192h2v1h-2zM610 230h1v2h-1zM603 219h2v1h-2zM603 196h1v1h-1zM595 214h1v1h-1zM590 191h1v1h-1zM604 226h1v1h-1zM619 218h1v1h-1zM620 216h1v1h-1zM603 217h1v2h-1zM603 222h1v1h-1zM601 208h2v2h-2zM621 207h1v1h-1zM601 221h1v1h-1zM589 213h1v1h-1zM613 222h2v1h-2zM608 217h1v1h-1zM614 201h1v1h-1zM597 206h2v2h-2zM600 221h2v1h-2zM625 215h2v1h-2zM601 192h2v1h-2zM620 203h1v1h-1zM617 197h2v2h-2zM603 191h1v1h-1zM608 213h1v1h-1zM614 205h1v1h-1zM591 218h1v2h-1zM601 220h2v1h-2zM623 208h1v1h-1zM602 229h1v1h-1zM619 199h2v1h-2zM616 220h1v1h-1zM590 195h1v1h-1zM606 206h2v1h-2zM592 199h1v1h-1zM599 201h1v1h-1zM606 230h2v1h-2zM614 211h1v2h-1zM619 195h1v2h-1zM607 220h1v2h-1zM604 189h2v2h-2zM608 208h1v1h-1zM591 201h1v1h-1zM602 192h1v2h-1zM608 204h1v1h-1zM611 211h1v1h-1zM605 229h2v1h-2zM599 212h1v2h-1zM603 213h2v2h-2zM596 220h1v1h-1zM608 224h1v1h-1zM623 203h1v2h-1zM589 201h1v1h-1zM604 204h2v1h-2zM612 205h2v2h-2zM606 197h1v1h-1zM607 230h2v2h-2zM608 204h1v1h-1zM617 205h2v1h-2zM623 211h1v1h-1zM617 209h1v2h-1zM601 194h1v1h-1zM616 218h1v1h-1zM590 195h2v2h-2zM614 191h2v1h-2zM613 193h2v2h-2zM598 212h1v1h-1zM597 192h2v1h-2zM594 217h2v2h-2zM600 213h1v1h-1zM600 213h1v1h-1zM600 190h1v1h-1zM588 208h2v1h-2zM601 207h2v1h-2zM608 226h1v2h-1zM621 197h1v2h-1zM601 219h1v2h-1zM614 213h2v2h-2zM607 210h1v1h-1zM621 202h2v1h-2zM599 195h1v1h-1zM606 200h1v1h-1zM592 190h1v1h-1zM619 199h1v1h-1zM624 212h1v1h-1zM620 193h1v1h-1zM619 191h1v1h-1z"/><path fill="#ffffff" d="M618 224h2v1h-2zM595 208h1v1h-1z"/><polygon points="591,212 597,208 600,213 594,218" fill="#3cf05a" /><polygon points="597,213 603,210 605,215 599,219" fill="#8a4a2c" /><path fill="#cfae7d" d="M633 187h2v2h-2zM648 186h1v2h-1zM642 186h2v2h-2zM643 178h2v2h-2zM634 184h2v2h-2zM632 179h2v1h-2zM627 183h3v2h-3zM641 184h1v2h-1zM630 185h1v1h-1zM647 184h1v2h-1zM632 182h2v2h-2zM647 182h2v2h-2zM631 189h2v2h-2zM628 180h2v2h-2zM626 183h1v1h-1zM630 177h2v2h-2zM639 176h1v1h-1zM648 180h1v2h-1zM645 186h2v2h-2zM644 179h2v3h-2zM623 179h1v1h-1zM644 179h1v1h-1zM627 180h2v2h-2zM628 185h3v2h-3zM632 186h1v2h-1zM643 179h3v2h-3zM647 185h2v2h-2zM636 188h2v2h-2zM632 186h1v1h-1z"/><polygon points="625,178 636,176 648,179 648,187 636,189 627,188" fill="#cfae7d" /><path fill="#12d0d8" d="M642 184h1v1h-1zM637 179h1v2h-1zM647 181h1v2h-1zM629 177h1v2h-1zM627 187h1v1h-1zM627 186h1v2h-1z"/><path fill="#fdf800" d="M637 178h1v1h-1zM636 182h1v1h-1zM637 187h1v1h-1zM633 188h1v1h-1zM629 182h2v1h-2zM634 185h2v1h-2zM643 187h1v2h-1z"/><path fill="#ffffff" d="M647 184h1v2h-1zM640 185h2v1h-2zM642 183h1v2h-1zM627 183h1v2h-1zM638 183h1v2h-1zM626 183h1v1h-1zM641 184h1v1h-1zM639 186h1v1h-1z"/><path fill="#d9829b" d="M653 168h2v1h-2zM656 165h1v1h-1zM651 166h2v3h-2zM654 161h2v2h-2zM654 173h1v1h-1zM656 172h1v1h-1zM656 162h2v2h-2zM661 174h2v3h-2zM655 160h1v2h-1zM659 178h2v1h-2zM655 165h2v2h-2z"/><polygon points="650,166 655,159 663,167.7 661,178 652,177" fill="#d9829b" /><path fill="#cc1e1e" d="M658 169h1v1h-1zM652 174h2v2h-2zM659 170h1v1h-1zM659 169h1v2h-1zM655 171h2v2h-2z"/><path fill="#c39a96" d="M660 192h2v3h-2zM692 197h2v1h-2zM669 190h2v1h-2zM690 197h2v3h-2zM689 191h2v2h-2zM665 184h1v1h-1zM680 206h2v3h-2zM651 187h1v2h-1zM669 193h1v1h-1zM673 203h2v1h-2zM649 188h2v1h-2zM696 183h2v2h-2zM668 172h1v1h-1zM669 168h3v2h-3zM708 181h2v1h-2zM697 168h3v2h-3zM708 170h3v2h-3zM649 188h2v2h-2zM663 184h1v2h-1zM688 184h1v1h-1zM663 170h2v2h-2zM682 193h1v1h-1zM706 187h2v2h-2zM697 169h2v2h-2zM673 213h2v2h-2zM704 198h2v1h-2zM649 189h1v1h-1zM647 199h1v1h-1zM676 166h2v2h-2zM686 202h2v2h-2zM652 193h1v2h-1zM662 172h2v1h-2zM656 206h2v3h-2zM648 192h3v2h-3zM663 213h1v1h-1zM707 163h1v1h-1zM667 193h1v1h-1zM669 188h1v2h-1zM673 190h1v1h-1zM693 167h1v1h-1zM679 184h2v1h-2zM685 175h2v1h-2zM698 165h1v1h-1zM676 201h1v2h-1zM705 177h2v2h-2zM706 197h2v1h-2zM703 169h1v2h-1zM659 203h2v2h-2zM648 211h2v2h-2zM657 212h1v1h-1zM677 183h2v2h-2zM695 206h1v1h-1zM699 189h1v1h-1zM673 201h2v2h-2zM676 206h2v2h-2zM654 203h1v1h-1zM688 166h2v3h-2zM683 215h2v2h-2zM699 202h3v2h-3zM711 173h1v1h-1zM686 169h1v2h-1zM671 200h1v2h-1zM696 188h1v1h-1zM711 179h2v2h-2zM700 210h1v2h-1zM708 195h2v1h-2zM694 214h2v2h-2zM704 181h1v1h-1zM688 206h2v1h-2zM689 207h2v2h-2zM698 202h2v1h-2zM689 205h1v2h-1zM686 184h1v2h-1zM682 212h2v1h-2zM703 167h2v2h-2zM666 192h1v1h-1zM705 163h3v2h-3zM699 179h2v1h-2zM666 206h2v1h-2zM674 182h1v1h-1zM649 188h1v1h-1zM690 193h3v2h-3zM699 193h2v2h-2zM693 185h2v2h-2zM690 168h2v1h-2zM647 200h1v1h-1zM672 179h2v2h-2zM673 175h2v2h-2zM684 168h2v1h-2zM654 193h1v1h-1zM699 180h3v2h-3zM657 182h1v1h-1zM697 176h1v1h-1zM647 194h2v2h-2zM677 191h1v2h-1zM691 190h2v2h-2zM703 196h1v1h-1zM656 177h2v2h-2zM654 180h1v1h-1zM666 184h2v1h-2zM701 179h2v1h-2zM690 206h1v2h-1zM706 168h3v2h-3zM669 175h2v1h-2zM685 199h1v2h-1zM679 209h2v3h-2zM690 214h2v2h-2zM684 169h3v2h-3zM686 171h2v3h-2zM689 175h1v1h-1zM668 203h2v1h-2zM676 175h2v2h-2zM664 214h2v2h-2zM691 175h2v1h-2zM694 204h1v2h-1zM668 195h2v2h-2zM666 177h1v2h-1zM664 203h2v1h-2zM660 206h2v2h-2zM660 178h2v2h-2zM671 203h2v2h-2zM659 209h1v2h-1zM650 202h1v1h-1zM647 198h2v3h-2zM661 178h1v1h-1zM645 200h1v2h-1zM701 195h1v1h-1zM683 201h1v1h-1zM686 184h1v1h-1zM663 205h2v1h-2zM654 216h2v3h-2zM678 196h2v2h-2zM679 175h2v3h-2zM661 185h1v2h-1zM668 175h2v2h-2zM708 176h2v1h-2zM699 211h1v2h-1zM707 192h2v2h-2zM688 186h2v1h-2zM694 171h1v1h-1zM666 191h1v1h-1zM668 202h2v1h-2zM655 177h2v2h-2zM704 179h1v2h-1zM670 181h1v1h-1zM681 177h1v1h-1zM659 205h2v1h-2zM655 211h1v2h-1zM702 188h2v2h-2zM698 173h1v1h-1zM665 193h2v1h-2zM698 185h1v1h-1zM667 171h1v2h-1zM699 202h3v2h-3zM668 189h2v2h-2zM656 195h3v2h-3zM682 201h1v1h-1zM665 202h1v1h-1zM651 202h2v1h-2zM675 196h2v2h-2zM650 214h3v2h-3zM668 176h2v1h-2zM654 177h2v1h-2zM681 190h1v1h-1zM695 168h3v2h-3zM657 182h1v2h-1zM669 183h2v2h-2zM695 202h2v1h-2zM682 187h2v3h-2zM699 204h2v2h-2zM703 178h2v1h-2zM695 174h1v2h-1zM702 197h2v3h-2zM705 201h1v1h-1zM659 216h2v2h-2zM669 170h2v2h-2zM691 189h1v2h-1zM672 182h1v1h-1zM653 179h2v1h-2zM663 168h2v2h-2zM690 206h2v1h-2zM696 168h1v2h-1zM705 189h1v2h-1zM672 185h2v1h-2zM691 186h1v2h-1zM657 198h1v2h-1zM668 170h2v2h-2zM678 184h1v2h-1zM697 170h3v2h-3zM673 168h2v1h-2zM647 200h3v2h-3zM681 198h2v2h-2zM656 212h2v1h-2zM691 184h1v2h-1zM662 193h1v1h-1zM654 196h1v2h-1zM660 179h1v2h-1zM675 198h3v2h-3zM649 197h1v1h-1zM695 180h3v2h-3zM655 188h2v2h-2zM678 204h1v1h-1zM698 162h2v2h-2zM681 196h2v2h-2zM709 192h2v1h-2zM683 193h2v1h-2zM682 184h3v2h-3zM708 178h2v2h-2zM673 188h2v1h-2zM669 169h2v2h-2zM675 216h2v1h-2zM667 186h2v2h-2zM655 180h1v1h-1zM703 202h2v2h-2zM693 186h1v1h-1zM679 186h2v1h-2zM693 173h1v1h-1zM686 196h3v2h-3zM673 204h2v2h-2zM665 214h2v2h-2zM701 191h2v2h-2zM666 215h1v1h-1zM710 174h3v2h-3zM710 170h1v2h-1zM685 215h1v1h-1zM669 186h2v3h-2zM671 185h1v2h-1zM691 211h2v3h-2zM672 186h1v1h-1zM655 190h1v2h-1zM707 166h2v1h-2zM650 184h1v1h-1zM658 209h1v1h-1zM705 196h2v1h-2zM712 190h2v1h-2zM685 199h1v1h-1zM680 197h1v1h-1zM707 184h1v1h-1zM675 206h2v3h-2zM676 203h1v2h-1zM710 189h1v2h-1zM683 168h1v1h-1zM657 176h2v2h-2zM659 174h1v2h-1zM685 173h2v3h-2zM700 191h2v2h-2zM665 213h1v1h-1zM704 208h2v3h-2zM695 175h2v2h-2zM695 176h2v2h-2zM696 186h3v2h-3zM647 199h1v2h-1zM671 182h1v1h-1zM650 215h3v2h-3zM706 184h2v2h-2zM692 201h2v2h-2zM651 192h2v1h-2zM705 167h1v1h-1zM698 212h1v1h-1zM681 163h1v2h-1zM678 203h2v2h-2zM674 183h2v1h-2zM680 201h2v2h-2zM685 180h2v3h-2zM661 200h2v1h-2zM680 203h2v1h-2zM650 209h1v1h-1zM664 212h2v2h-2zM671 208h1v2h-1zM684 200h2v3h-2zM655 176h3v2h-3zM687 170h1v1h-1zM679 184h2v1h-2zM706 164h1v1h-1zM651 181h1v1h-1zM660 180h1v1h-1zM658 215h1v2h-1zM661 192h2v2h-2zM662 212h3v2h-3zM676 167h1v1h-1zM699 201h2v2h-2zM684 214h1v1h-1zM693 204h2v2h-2zM700 178h2v2h-2zM666 169h2v1h-2zM662 176h1v1h-1zM658 173h2v2h-2zM682 181h2v1h-2zM699 167h2v1h-2zM666 171h2v3h-2zM694 166h1v2h-1zM695 201h1v1h-1zM686 173h2v2h-2zM687 211h2v1h-2zM692 165h2v1h-2zM658 174h1v2h-1zM667 216h2v2h-2zM681 185h1v1h-1zM658 189h1v2h-1zM697 177h2v1h-2zM672 193h2v2h-2zM708 188h1v1h-1zM691 214h3v2h-3zM691 202h2v2h-2zM653 186h2v1h-2zM708 169h1v2h-1zM702 179h3v2h-3zM704 200h1v1h-1zM675 201h1v1h-1zM706 184h3v2h-3zM697 209h2v3h-2zM668 205h2v2h-2zM654 201h1v1h-1zM691 173h1v2h-1zM701 201h2v1h-2zM682 194h2v2h-2zM695 203h1v2h-1zM664 176h2v2h-2zM712 188h2v1h-2zM700 163h1v2h-1zM669 203h1v1h-1zM687 180h3v2h-3zM673 192h1v2h-1z"/><polygon points="664,172 687,166 706,168 707.7,179 707.7,193.7 701,208 694,212 674,213 655,213 649,205 651,194 656,182" fill="#c39a96" /><path fill="#fdf800" d="M683 192h1v1h-1zM668 189h2v1h-2zM690 193h1v1h-1zM680 186h1v2h-1zM666 189h1v1h-1zM660 195h1v2h-1zM697 201h1v1h-1zM672 209h1v1h-1zM700 172h1v1h-1zM688 186h1v1h-1zM668 197h2v1h-2zM697 196h1v2h-1zM707 190h1v2h-1zM650 203h1v1h-1zM698 207h1v1h-1zM699 207h1v2h-1zM680 168h1v2h-1zM703 179h1v1h-1zM674 187h1v1h-1zM661 202h1v1h-1zM667 173h2v1h-2zM655 185h1v1h-1zM670 180h1v1h-1zM668 184h1v2h-1zM666 174h1v1h-1zM672 187h1v1h-1zM686 194h1v1h-1zM682 212h1v1h-1zM688 182h1v1h-1zM670 174h1v1h-1zM693 172h1v1h-1zM661 210h1v1h-1zM692 197h1v1h-1zM691 169h2v1h-2zM694 187h1v1h-1zM656 197h1v1h-1zM660 206h2v1h-2zM704 190h1v1h-1zM697 187h2v2h-2zM670 191h1v2h-1zM692 171h1v2h-1zM673 195h1v2h-1zM651 204h1v1h-1zM685 183h1v1h-1zM675 210h2v2h-2zM695 168h1v1h-1zM698 197h1v2h-1zM674 174h2v2h-2zM666 183h1v1h-1zM672 202h1v2h-1zM683 198h1v1h-1zM654 187h1v1h-1zM652 192h1v1h-1zM679 176h2v1h-2zM662 194h2v1h-2zM682 203h2v2h-2zM657 187h1v1h-1zM676 181h1v1h-1zM674 175h1v1h-1zM687 171h1v1h-1zM656 191h1v1h-1zM656 189h2v1h-2zM677 190h1v1h-1zM700 189h2v1h-2zM688 174h2v1h-2zM675 192h2v2h-2zM695 170h2v1h-2zM656 182h2v1h-2zM689 198h1v1h-1zM656 186h1v1h-1zM681 183h2v1h-2zM665 210h1v2h-1zM659 203h1v1h-1zM662 212h1v1h-1zM697 185h1v1h-1zM676 207h2v2h-2zM666 174h2v2h-2zM693 195h2v1h-2zM701 184h1v1h-1zM690 208h1v1h-1zM659 202h1v1h-1zM670 195h2v2h-2zM665 173h1v2h-1zM699 201h1v1h-1zM667 183h1v1h-1zM698 168h1v1h-1zM691 199h1v1h-1zM704 173h1v1h-1zM672 198h1v1h-1zM702 171h1v1h-1zM667 186h1v1h-1zM677 191h1v1h-1zM657 201h1v1h-1zM672 171h2v1h-2zM656 202h1v1h-1zM705 187h1v1h-1zM683 172h2v1h-2zM670 207h1v2h-1zM669 211h1v2h-1zM705 169h2v1h-2zM684 203h1v1h-1zM654 210h2v2h-2zM700 199h2v2h-2zM657 181h1v1h-1zM698 175h1v2h-1zM692 186h1v2h-1zM680 168h1v2h-1zM692 205h2v1h-2zM694 197h2v1h-2zM656 196h2v1h-2zM669 180h1v1h-1zM684 194h1v1h-1zM683 188h1v2h-1zM656 198h1v1h-1zM663 181h1v1h-1zM666 184h1v1h-1zM689 211h1v1h-1zM703 184h1v1h-1zM688 186h1v2h-1zM688 204h1v1h-1zM671 188h1v2h-1zM703 187h2v1h-2zM701 185h1v2h-1zM663 198h1v1h-1zM675 200h1v1h-1zM683 167h1v1h-1zM667 182h1v1h-1zM684 211h1v1h-1zM687 187h2v1h-2zM671 172h1v1h-1zM699 195h1v1h-1zM660 211h1v1h-1zM691 182h2v1h-2zM703 178h2v2h-2zM700 194h1v1h-1zM667 193h2v1h-2zM683 174h1v1h-1zM652 193h1v1h-1zM655 194h1v1h-1zM693 180h1v1h-1zM679 210h1v1h-1zM677 177h2v1h-2zM655 194h1v1h-1zM676 197h1v1h-1zM684 176h1v1h-1zM664 181h1v2h-1zM703 191h1v1h-1zM656 196h1v1h-1zM674 170h1v1h-1zM682 206h1v2h-1zM671 192h1v1h-1zM690 205h2v2h-2zM691 185h2v1h-2zM696 194h1v2h-1zM658 203h1v2h-1zM666 200h1v1h-1zM706 188h1v2h-1zM669 204h2v2h-2zM663 180h2v2h-2zM674 169h2v1h-2zM681 197h1v1h-1zM670 192h1v1h-1zM675 202h1v1h-1zM655 185h1v1h-1zM693 205h1v1h-1zM657 205h2v1h-2zM675 191h1v1h-1zM660 194h1v1h-1zM662 200h1v1h-1zM691 206h1v2h-1zM683 212h1v1h-1zM691 206h1v1h-1zM680 176h1v1h-1zM673 179h1v2h-1zM665 189h1v1h-1zM678 208h1v2h-1zM706 174h1v1h-1zM684 173h1v1h-1zM683 209h2v1h-2zM700 190h2v1h-2zM659 194h1v1h-1zM704 190h1v1h-1zM674 202h1v1h-1zM665 190h1v1h-1zM682 177h1v2h-1zM697 179h2v2h-2zM662 181h1v1h-1zM692 172h2v2h-2zM697 171h1v1h-1zM695 191h2v1h-2zM659 209h2v1h-2zM662 176h1v1h-1zM694 170h1v1h-1zM651 194h1v1h-1zM690 196h1v2h-1zM668 172h1v1h-1zM705 176h2v2h-2zM679 198h1v1h-1zM688 174h2v1h-2zM654 189h1v1h-1zM662 189h1v1h-1zM657 202h2v1h-2zM668 189h1v1h-1zM673 198h1v1h-1zM706 180h1v1h-1zM693 211h1v1h-1zM698 172h1v2h-1zM680 204h1v1h-1zM655 191h2v2h-2zM695 181h2v1h-2zM678 174h1v1h-1zM694 200h1v1h-1zM678 170h1v1h-1zM704 194h1v1h-1zM669 199h1v1h-1zM698 205h1v1h-1zM696 172h1v1h-1zM654 207h1v1h-1zM682 188h2v1h-2zM701 199h1v1h-1zM655 187h1v1h-1zM704 188h1v2h-1zM680 173h2v1h-2zM649 205h1v2h-1zM660 182h1v1h-1zM687 166h1v1h-1zM675 198h1v1h-1zM655 184h1v2h-1zM683 191h2v2h-2zM686 181h1v1h-1zM692 193h1v1h-1zM687 206h1v1h-1zM704 198h1v1h-1zM656 182h1v1h-1zM704 180h1v2h-1zM664 188h1v1h-1zM668 176h1v1h-1zM654 209h1v2h-1zM690 202h1v1h-1zM693 192h1v1h-1zM671 178h1v1h-1zM684 196h1v1h-1zM672 210h1v1h-1zM688 198h1v1h-1zM700 171h2v2h-2zM686 211h1v1h-1z"/><path fill="#0e7a2a" d="M691 179h1v1h-1zM657 204h1v2h-1zM668 179h1v1h-1zM667 208h1v1h-1zM696 209h2v1h-2zM699 201h1v1h-1zM662 188h1v1h-1zM691 209h1v1h-1zM658 201h1v1h-1zM696 187h1v2h-1zM690 169h2v1h-2zM700 194h1v1h-1zM695 173h1v1h-1zM688 177h1v1h-1zM668 200h1v2h-1zM682 187h1v1h-1zM701 206h1v1h-1zM661 204h2v1h-2zM685 177h1v1h-1zM666 181h1v2h-1zM659 192h1v1h-1zM697 183h1v1h-1zM692 194h1v2h-1zM685 167h1v1h-1zM693 201h1v1h-1zM654 205h1v1h-1zM679 190h2v1h-2zM692 211h1v1h-1zM690 187h2v2h-2zM684 189h1v2h-1zM658 206h1v1h-1zM679 188h1v1h-1zM694 183h2v2h-2zM665 211h1v1h-1zM651 207h1v2h-1zM664 187h2v1h-2zM702 176h1v1h-1zM659 181h2v1h-2zM654 186h1v1h-1zM663 177h1v1h-1zM702 186h1v1h-1zM653 203h1v1h-1zM668 187h1v1h-1zM682 167h1v1h-1zM659 178h2v2h-2zM675 187h1v1h-1zM677 172h1v1h-1z"/><path fill="#d9829b" d="M678 211h1v2h-1zM660 212h2v2h-2zM666 207h2v2h-2zM665 208h2v2h-2zM676 182h1v1h-1zM650 197h1v1h-1zM683 198h1v1h-1zM655 187h1v1h-1zM695 170h1v1h-1zM680 194h2v1h-2zM665 183h1v1h-1zM675 189h1v1h-1zM655 197h1v2h-1zM665 210h1v2h-1zM662 202h1v1h-1zM695 192h1v1h-1zM667 210h1v1h-1zM660 192h1v1h-1zM685 191h1v2h-1zM682 187h1v1h-1zM654 194h1v2h-1zM684 211h1v2h-1zM686 209h1v1h-1zM669 196h1v2h-1zM684 172h2v2h-2zM675 199h1v1h-1zM689 168h1v2h-1zM684 173h1v1h-1zM679 171h1v1h-1zM665 175h1v1h-1zM704 172h2v1h-2zM658 183h1v1h-1zM689 201h2v2h-2zM697 196h1v1h-1zM655 187h2v1h-2zM680 195h1v1h-1zM668 209h1v1h-1zM678 169h1v1h-1zM656 209h1v1h-1zM697 187h1v2h-1zM694 168h1v2h-1zM683 190h1v1h-1z"/><path fill="#c49c0e" d="M704 193h2v1h-2zM669 196h2v1h-2zM697 194h2v1h-2zM703 195h1v2h-1zM668 200h1v1h-1zM678 179h1v1h-1zM679 196h2v1h-2zM675 185h2v1h-2zM680 202h2v1h-2zM694 184h2v1h-2zM707 181h1v1h-1zM694 211h2v2h-2zM652 193h1v1h-1zM666 194h1v1h-1zM674 175h1v2h-1zM692 211h1v1h-1zM664 184h1v2h-1zM692 210h2v1h-2zM687 169h1v1h-1zM683 201h2v1h-2zM699 192h1v2h-1zM678 207h1v1h-1zM674 209h1v2h-1zM705 170h1v1h-1zM703 199h1v2h-1zM679 211h1v1h-1zM695 179h1v1h-1zM676 208h2v2h-2zM668 209h1v1h-1zM695 185h2v1h-2zM701 197h1v1h-1zM650 203h1v2h-1zM683 200h1v1h-1zM650 204h1v1h-1zM664 208h1v2h-1zM683 207h1v1h-1zM663 188h1v1h-1zM664 186h1v2h-1zM650 206h2v1h-2zM653 194h1v1h-1zM675 173h1v1h-1zM702 171h1v1h-1zM654 200h1v1h-1zM664 191h1v1h-1zM675 210h1v2h-1zM703 187h2v1h-2zM692 181h1v1h-1zM681 185h1v1h-1zM661 202h1v2h-1zM663 193h1v1h-1zM669 186h1v1h-1zM658 182h1v2h-1zM679 203h1v2h-1zM682 182h1v1h-1zM662 175h1v1h-1z"/><path fill="#ffffff" d="M676 199h1v1h-1zM662 187h1v1h-1zM690 187h1v2h-1zM664 197h1v2h-1zM678 200h1v1h-1zM682 187h1v2h-1zM677 203h1v1h-1zM698 190h1v2h-1zM686 176h1v2h-1zM691 171h1v1h-1zM658 200h2v1h-2zM704 170h1v1h-1zM664 198h1v1h-1zM654 193h1v1h-1z"/><polygon points="673,199 681,197 680,201 674,203" fill="#3cf05a" /><polygon points="666,213 673,210 676,218 668,221" fill="#8a4a2c" /><polygon points="664,222 668,222 668,228 664,228" fill="#a80c10" /><polygon points="628,195 634,194 636,199 634,203 629,204" fill="#3cf05a" /><path fill="#c39a96" d="M730 229h1v1h-1zM735 198h1v2h-1zM736 213h1v2h-1zM729 180h2v1h-2zM743 168h1v2h-1zM738 173h1v2h-1zM749 186h1v1h-1zM749 176h2v1h-2zM726 232h3v2h-3zM748 223h2v3h-2zM743 165h1v2h-1zM729 222h2v1h-2zM726 180h2v2h-2zM736 197h1v2h-1zM733 192h2v1h-2zM754 169h1v2h-1zM736 222h1v2h-1zM747 168h1v1h-1zM728 228h2v2h-2zM736 237h1v1h-1zM741 197h1v2h-1zM748 191h2v1h-2zM734 168h2v2h-2zM732 209h2v1h-2zM742 227h2v1h-2zM723 223h3v2h-3zM742 224h2v3h-2zM731 233h1v1h-1zM727 207h2v2h-2zM741 184h2v2h-2zM740 168h3v2h-3zM731 197h1v2h-1zM730 205h2v1h-2zM723 228h3v2h-3zM728 186h1v2h-1zM744 215h2v1h-2zM735 224h2v2h-2zM746 213h2v2h-2zM727 230h1v1h-1zM741 206h2v3h-2zM746 187h1v2h-1zM736 222h2v2h-2zM737 188h1v2h-1zM745 170h1v2h-1zM741 183h3v2h-3zM740 189h1v1h-1zM734 183h2v2h-2zM747 171h1v2h-1zM742 174h1v1h-1zM738 207h2v3h-2zM742 218h3v2h-3zM731 207h2v2h-2zM746 177h1v1h-1zM736 185h3v2h-3zM737 233h1v1h-1zM728 231h1v1h-1zM728 222h2v2h-2zM732 208h2v1h-2zM751 170h1v2h-1zM741 174h2v1h-2zM744 231h2v2h-2zM754 165h2v2h-2zM737 183h2v2h-2zM722 230h1v2h-1zM727 180h1v2h-1zM729 188h2v2h-2zM750 165h2v3h-2zM726 211h2v2h-2zM748 188h1v2h-1zM743 221h2v2h-2zM748 165h3v2h-3zM735 223h2v3h-2zM728 203h1v1h-1zM744 197h2v2h-2zM725 227h1v1h-1zM724 177h2v2h-2zM742 224h1v2h-1zM730 212h2v2h-2zM724 229h2v1h-2zM742 219h1v2h-1zM749 183h2v2h-2zM734 217h2v2h-2zM744 188h1v2h-1zM732 204h1v2h-1zM729 186h1v1h-1zM741 179h1v1h-1zM736 225h2v2h-2zM731 216h3v2h-3zM726 174h1v1h-1zM738 230h2v2h-2zM730 212h2v2h-2zM754 162h2v1h-2zM735 220h2v2h-2zM728 181h2v2h-2zM742 231h2v3h-2zM729 184h1v1h-1zM741 200h1v2h-1zM741 216h1v2h-1zM751 169h2v3h-2zM734 232h1v1h-1zM732 201h2v2h-2zM737 224h2v3h-2zM727 188h2v2h-2zM754 169h1v1h-1zM729 189h2v2h-2zM736 230h2v3h-2zM726 226h1v2h-1zM737 225h2v2h-2zM750 176h2v2h-2zM739 233h1v2h-1zM732 193h1v1h-1zM740 195h1v2h-1zM747 197h1v1h-1zM748 167h2v1h-2zM738 236h3v2h-3zM735 225h2v1h-2zM726 171h2v1h-2zM734 231h2v2h-2zM731 200h3v2h-3zM740 189h2v1h-2zM730 177h3v2h-3zM754 165h2v2h-2zM736 176h2v2h-2zM739 229h1v1h-1zM735 197h2v1h-2zM745 200h3v2h-3zM726 183h2v3h-2zM741 168h3v2h-3zM744 201h1v2h-1zM737 196h1v1h-1zM726 229h2v3h-2zM727 206h3v2h-3zM737 198h3v2h-3zM732 224h2v2h-2zM728 175h2v3h-2zM727 175h3v2h-3zM734 238h2v2h-2zM724 220h2v3h-2zM733 176h2v2h-2zM725 214h1v1h-1zM737 222h1v2h-1zM732 209h2v2h-2zM732 235h2v2h-2zM735 195h2v2h-2zM744 226h2v2h-2zM728 186h2v2h-2zM745 200h1v1h-1zM737 219h2v2h-2zM742 228h2v3h-2zM737 208h1v1h-1zM739 178h2v2h-2zM742 219h2v1h-2zM744 224h1v1h-1zM742 177h1v1h-1zM740 182h1v2h-1zM745 188h2v2h-2zM739 195h3v2h-3zM737 193h2v1h-2zM737 214h2v2h-2zM729 183h1v1h-1zM732 184h1v1h-1zM729 177h2v2h-2zM738 172h1v1h-1zM737 203h1v1h-1zM743 195h2v2h-2zM726 179h2v2h-2zM735 180h2v2h-2z"/><polygon points="723,176 755,164.4 745,203.5 748.4,218 745,231 733.7,237.7 724,231 720.7,218 725.6,208.4 728.9,193.7 725.6,182.3" fill="#c39a96" /><path fill="#fdf800" d="M743 230h1v1h-1zM751 168h1v1h-1zM725 230h1v1h-1zM744 221h2v2h-2zM732 175h1v2h-1zM745 175h1v1h-1zM729 186h1v1h-1zM746 171h1v1h-1zM740 231h1v1h-1zM736 219h2v1h-2zM742 191h1v2h-1zM749 179h2v1h-2zM751 173h1v2h-1zM722 219h1v1h-1zM728 176h1v1h-1zM732 231h2v2h-2zM751 177h1v2h-1zM742 177h1v1h-1zM734 183h1v2h-1zM736 221h1v2h-1zM733 189h2v1h-2zM745 221h1v1h-1zM741 232h1v2h-1zM729 219h1v2h-1zM746 167h2v1h-2zM741 182h1v1h-1zM743 178h2v1h-2zM741 170h1v1h-1zM738 224h2v1h-2zM734 212h1v1h-1zM728 185h2v2h-2zM740 204h1v2h-1zM729 224h1v1h-1zM746 179h1v1h-1zM743 217h2v2h-2zM729 216h2v1h-2zM732 212h2v1h-2zM736 177h1v1h-1zM731 221h1v1h-1zM751 177h1v1h-1zM741 172h1v1h-1zM732 225h1v1h-1zM726 205h1v2h-1zM736 210h1v1h-1zM741 219h1v1h-1zM728 212h1v1h-1zM730 203h2v1h-2zM743 200h2v2h-2zM743 218h1v1h-1zM745 186h1v1h-1zM742 205h2v2h-2zM729 199h2v2h-2zM726 204h2v1h-2zM722 218h2v1h-2zM727 185h2v2h-2zM728 210h2v1h-2zM747 177h1v1h-1zM732 204h1v1h-1zM737 216h1v1h-1zM739 179h1v1h-1zM741 176h1v1h-1zM736 186h2v2h-2zM725 211h1v1h-1zM736 217h1v1h-1zM729 185h1v1h-1zM741 202h1v2h-1zM745 174h1v1h-1zM735 218h2v1h-2zM731 183h1v2h-1zM750 173h1v1h-1z"/><path fill="#c49c0e" d="M733 206h1v1h-1zM742 196h2v1h-2zM745 175h1v1h-1zM726 215h2v1h-2zM737 214h1v1h-1zM724 221h1v1h-1zM732 205h1v1h-1zM739 190h1v1h-1zM729 231h1v1h-1zM726 226h1v1h-1zM741 187h1v2h-1zM746 192h2v1h-2zM731 181h1v2h-1zM747 167h2v1h-2zM736 221h1v1h-1zM744 202h1v2h-1zM724 217h2v2h-2zM745 210h1v1h-1zM736 218h1v2h-1zM743 211h1v2h-1zM741 226h1v1h-1zM733 212h1v2h-1zM743 215h1v2h-1zM743 226h1v1h-1zM731 194h1v1h-1zM731 174h2v1h-2zM740 209h1v1h-1zM732 221h1v1h-1zM741 184h1v1h-1zM730 178h1v2h-1zM738 173h1v1h-1zM739 189h2v1h-2zM743 189h1v1h-1zM738 224h1v1h-1zM732 189h1v1h-1zM735 183h1v1h-1zM744 199h2v2h-2zM749 178h1v2h-1zM737 231h2v1h-2zM747 216h1v1h-1zM731 196h1v1h-1z"/><path fill="#d9829b" d="M739 191h1v1h-1zM740 232h1v1h-1zM725 176h2v2h-2zM744 181h1v1h-1zM750 167h2v2h-2zM741 171h1v1h-1zM740 198h1v2h-1zM739 222h1v1h-1zM744 208h1v2h-1zM728 212h1v2h-1zM736 179h2v1h-2zM742 194h2v1h-2zM728 225h1v1h-1zM725 209h1v1h-1zM735 227h2v2h-2zM727 176h2v2h-2zM725 221h2v2h-2zM729 215h2v2h-2zM740 173h2v2h-2zM728 225h2v2h-2zM738 177h1v1h-1zM731 218h2v1h-2zM730 234h1v1h-1zM738 191h1v2h-1zM731 208h1v1h-1zM746 189h1v1h-1zM732 173h2v1h-2z"/><path fill="#0e7a2a" d="M751 175h1v1h-1zM729 234h1v2h-1zM728 182h2v1h-2zM731 212h2v1h-2zM732 188h1v1h-1zM732 195h1v1h-1zM732 186h2v2h-2zM731 225h1v2h-1zM741 197h1v1h-1zM733 180h2v1h-2zM736 193h1v1h-1zM742 216h1v1h-1zM727 222h2v1h-2zM740 207h1v1h-1zM735 175h1v2h-1zM723 225h1v1h-1zM729 206h1v1h-1zM740 181h1v1h-1zM737 212h1v1h-1zM734 231h1v1h-1zM751 172h2v1h-2zM745 171h1v2h-1zM743 184h1v1h-1zM737 200h2v1h-2zM741 193h1v2h-1zM733 222h1v1h-1zM740 204h1v2h-1zM725 217h1v1h-1zM739 213h1v2h-1zM734 226h1v1h-1zM730 221h2v1h-2zM727 219h1v1h-1zM747 193h1v2h-1zM738 210h1v1h-1zM747 220h1v2h-1zM741 231h1v2h-1zM740 224h2v1h-2zM729 191h1v1h-1zM739 188h1v2h-1zM734 213h1v1h-1zM740 197h2v2h-2zM737 204h2v2h-2zM726 184h2v1h-2zM740 229h2v2h-2zM742 207h1v1h-1zM733 174h1v2h-1zM735 178h2v1h-2zM735 192h2v1h-2zM741 199h1v1h-1zM732 222h1v1h-1zM732 202h2v1h-2zM732 229h2v2h-2zM741 223h1v2h-1zM736 190h2v2h-2zM734 174h1v1h-1zM727 221h1v1h-1zM740 212h2v2h-2zM739 199h2v1h-2zM749 170h1v2h-1zM742 184h1v2h-1zM724 221h1v1h-1zM747 174h1v1h-1zM729 234h1v1h-1zM745 187h1v1h-1zM735 206h1v2h-1zM745 221h1v1h-1zM745 170h1v2h-1zM749 179h1v2h-1zM726 218h1v2h-1zM725 224h1v1h-1zM729 212h1v1h-1zM732 215h1v1h-1zM746 212h2v2h-2zM747 191h1v1h-1zM736 223h1v1h-1zM731 200h1v1h-1zM744 224h1v1h-1zM742 213h2v1h-2zM739 184h2v1h-2zM739 215h1v1h-1zM729 177h1v1h-1z"/><path fill="#f24a1e" d="M736 226h1v1h-1zM731 178h2v1h-2zM733 196h1v1h-1zM743 184h1v1h-1zM748 187h1v2h-1zM738 170h2v2h-2zM728 186h1v1h-1zM742 230h1v1h-1zM732 205h2v1h-2z"/><polygon points="732,173 736,172 727,199 723,198" fill="#a89210" /><polygon points="724,178 731,175 728,190 723,192" fill="#d9829b" /><polygon points="736,170 748,166.5 748,168.5 737,172" fill="#3cf05a" /><path fill="#c39a96" d="M713 220h2v1h-2zM706 211h2v2h-2zM714 200h1v1h-1zM716 208h1v2h-1zM709 214h1v2h-1zM704 212h1v1h-1zM710 210h2v2h-2zM704 203h3v2h-3zM717 208h1v2h-1zM713 208h2v3h-2zM715 207h1v2h-1zM712 218h1v1h-1zM718 211h3v2h-3zM712 213h1v2h-1zM711 203h2v3h-2zM708 215h1v1h-1zM702 206h1v1h-1zM712 213h2v2h-2zM713 207h3v2h-3zM714 216h1v1h-1zM712 216h1v2h-1zM716 209h1v2h-1zM720 208h2v2h-2zM713 210h1v1h-1zM716 211h2v1h-2zM702 212h1v2h-1zM719 213h2v2h-2zM714 199h2v2h-2zM714 206h2v2h-2zM709 205h1v2h-1zM715 217h1v2h-1zM703 214h2v1h-2zM716 216h2v2h-2z"/><polygon points="703,204 716,200 721,214 712,222 703,216" fill="#c39a96" /><path fill="#fdf800" d="M708 212h1v1h-1zM713 204h2v1h-2zM708 219h1v1h-1zM706 214h1v2h-1zM709 214h2v1h-2zM705 204h1v1h-1zM712 218h2v1h-2zM712 217h1v1h-1zM716 206h1v1h-1zM716 211h1v1h-1zM714 209h1v1h-1zM711 217h1v1h-1zM708 217h2v2h-2zM716 208h1v2h-1zM716 216h1v2h-1zM715 206h1v1h-1zM717 216h1v1h-1zM709 213h1v1h-1zM714 206h2v1h-2zM714 216h1v1h-1zM710 207h2v1h-2zM716 202h1v2h-1zM714 212h1v1h-1zM710 204h2v1h-2z"/><path fill="#0e7a2a" d="M719 214h1v1h-1zM714 210h1v1h-1zM705 204h2v1h-2zM704 212h1v2h-1zM710 209h1v1h-1zM713 204h1v1h-1zM712 208h1v2h-1zM710 216h1v1h-1zM707 213h2v1h-2zM708 216h1v1h-1z"/><path fill="#ffffff" d="M706 216h1v2h-1zM712 214h1v1h-1z"/><path fill="#c49c0e" d="M710 213h1v2h-1zM711 203h1v1h-1zM717 216h2v1h-2zM715 213h1v1h-1zM703 214h1v1h-1zM709 219h1v1h-1z"/><path fill="#d9829b" d="M717 211h1v1h-1zM718 212h1v1h-1zM716 214h2v2h-2z"/><path fill="#c39a96" d="M717 255h2v3h-2zM726 276h1v1h-1zM713 250h2v2h-2zM717 266h2v1h-2zM729 275h1v1h-1zM710 255h2v1h-2zM729 283h1v1h-1zM721 267h1v1h-1zM707 242h2v2h-2zM707 231h1v1h-1zM707 240h2v1h-2zM721 266h2v2h-2zM705 233h1v1h-1zM705 237h2v2h-2zM710 235h3v2h-3zM707 231h1v1h-1zM719 278h1v2h-1zM710 241h2v2h-2zM720 236h1v2h-1zM725 267h1v2h-1zM722 227h2v2h-2zM726 288h2v3h-2zM706 229h3v2h-3zM723 269h2v2h-2zM711 267h1v2h-1zM731 283h2v2h-2zM724 231h1v2h-1zM718 266h1v1h-1zM715 239h2v1h-2zM705 238h3v2h-3zM711 225h2v1h-2zM718 268h1v1h-1zM732 281h2v1h-2zM711 249h2v2h-2zM717 264h2v2h-2zM725 269h2v1h-2zM715 223h2v1h-2zM732 280h3v2h-3zM710 257h2v1h-2zM717 261h2v2h-2zM705 237h1v1h-1zM714 219h2v3h-2zM718 266h1v1h-1zM732 283h3v2h-3zM728 232h1v2h-1zM727 268h2v1h-2zM710 223h1v1h-1zM727 282h2v3h-2zM715 241h1v1h-1zM711 244h1v2h-1zM723 229h2v2h-2zM712 263h1v1h-1zM711 246h2v1h-2zM719 275h1v1h-1zM717 255h2v1h-2zM713 234h2v1h-2zM708 235h1v1h-1zM730 289h2v2h-2zM717 257h2v1h-2zM726 277h2v2h-2zM715 267h1v1h-1zM712 246h1v2h-1zM709 227h2v2h-2zM714 274h1v2h-1zM706 231h1v2h-1zM726 287h2v1h-2zM709 256h2v2h-2zM728 235h1v1h-1zM718 225h2v2h-2zM715 218h2v2h-2zM715 253h2v2h-2zM717 259h3v2h-3zM718 228h2v1h-2zM724 263h2v3h-2zM711 249h2v1h-2zM727 235h2v2h-2zM708 227h2v1h-2zM732 277h1v1h-1zM719 258h3v2h-3zM714 244h1v2h-1zM708 237h1v1h-1zM708 243h2v2h-2zM719 265h2v2h-2zM731 280h2v2h-2zM706 239h1v2h-1zM709 256h2v1h-2zM723 268h1v1h-1zM711 252h2v3h-2zM722 231h2v2h-2zM709 250h1v2h-1zM729 233h1v2h-1zM710 254h2v2h-2zM714 245h3v2h-3zM711 225h2v2h-2zM713 227h3v2h-3zM717 273h2v2h-2zM728 271h2v1h-2zM729 269h1v2h-1zM718 233h1v1h-1zM720 225h2v1h-2zM725 231h2v1h-2zM731 283h1v2h-1zM727 273h1v2h-1z"/><polygon points="720.7,218 724,231 733.7,237.7 726,238 716,243 718,256 724,262 729,268 734,280 730,287 720,284 712,268 708,250 706,236 710,225" fill="#c39a96" /><path fill="#0e7a2a" d="M727 283h1v1h-1zM729 286h1v1h-1zM717 232h1v1h-1zM710 233h1v1h-1zM716 247h1v1h-1zM715 255h2v1h-2zM722 274h1v2h-1zM717 261h2v1h-2zM708 233h1v1h-1zM714 242h1v1h-1zM719 262h1v2h-1zM719 225h1v1h-1zM714 228h1v1h-1zM707 237h1v1h-1zM711 265h1v1h-1zM716 237h1v1h-1zM722 239h1v1h-1zM719 240h2v1h-2zM723 281h1v2h-1zM721 268h1v1h-1zM730 284h1v1h-1zM717 223h1v1h-1zM729 274h1v1h-1zM731 237h2v2h-2zM715 266h1v1h-1zM713 233h1v1h-1zM724 235h1v1h-1zM710 241h1v1h-1zM723 276h1v1h-1zM715 221h2v1h-2zM717 256h1v1h-1zM715 234h2v1h-2zM718 230h1v1h-1zM712 238h1v1h-1zM719 260h2v2h-2z"/><path fill="#d9829b" d="M727 271h2v2h-2zM708 230h1v1h-1zM720 218h1v1h-1zM713 228h2v2h-2zM709 253h1v1h-1zM715 234h2v1h-2zM716 231h2v1h-2zM723 268h2v1h-2zM712 232h1v2h-1zM724 282h1v2h-1zM719 219h1v2h-1zM716 234h1v2h-1zM711 260h2v1h-2zM713 269h1v2h-1zM710 233h2v1h-2zM724 273h1v1h-1zM724 263h1v2h-1zM713 244h1v1h-1zM720 265h2v1h-2zM719 229h1v1h-1zM728 267h1v1h-1z"/><path fill="#fdf800" d="M716 249h1v2h-1zM729 286h1v1h-1zM713 224h1v2h-1zM722 269h1v1h-1zM714 235h1v1h-1zM729 271h1v1h-1zM715 225h1v1h-1zM716 260h1v1h-1zM716 234h1v1h-1zM709 230h1v1h-1zM718 231h2v1h-2zM714 261h2v2h-2zM706 236h2v2h-2zM709 250h1v1h-1zM718 267h1v1h-1zM728 272h1v2h-1zM728 279h1v2h-1zM719 276h1v1h-1zM712 228h1v1h-1zM710 243h2v1h-2zM716 239h1v1h-1zM710 228h1v1h-1zM729 275h1v2h-1zM719 263h1v1h-1zM723 271h1v1h-1zM730 274h1v2h-1zM721 269h1v1h-1zM717 241h2v1h-2zM711 250h1v2h-1zM714 229h1v2h-1zM719 281h1v1h-1zM731 275h2v2h-2zM723 238h1v1h-1zM716 240h2v1h-2zM711 259h1v1h-1zM717 262h1v1h-1zM707 237h2v2h-2zM728 271h2v2h-2zM723 262h1v1h-1zM717 276h1v1h-1zM712 262h1v2h-1zM720 225h1v2h-1zM714 250h1v2h-1zM714 259h1v1h-1zM716 230h2v2h-2zM714 252h1v1h-1zM726 283h1v1h-1zM720 218h2v1h-2zM710 239h1v1h-1zM720 276h1v1h-1zM710 236h1v1h-1zM710 244h1v2h-1zM720 237h1v1h-1zM711 262h1v1h-1zM717 238h1v1h-1zM711 243h1v1h-1z"/><path fill="#c49c0e" d="M714 269h1v1h-1zM726 236h2v2h-2zM716 273h1v1h-1zM713 247h1v1h-1zM710 244h2v1h-2zM723 280h1v2h-1zM710 243h2v1h-2zM718 234h1v1h-1zM710 245h1v2h-1zM708 229h1v1h-1zM729 237h1v1h-1zM715 241h1v2h-1zM708 247h1v1h-1zM726 281h1v1h-1zM708 234h1v1h-1zM715 272h1v1h-1zM713 244h1v1h-1zM711 246h1v1h-1zM722 275h1v1h-1zM713 230h1v1h-1zM721 272h1v1h-1zM715 251h1v1h-1zM719 271h1v2h-1zM720 279h1v1h-1zM723 272h1v1h-1z"/><path fill="#cfae7d" d="M711 229h2v2h-2zM717 227h1v1h-1zM728 283h1v1h-1zM708 236h1v1h-1zM707 244h1v1h-1zM713 253h1v2h-1zM715 224h1v1h-1zM709 232h1v1h-1zM711 225h1v1h-1zM712 244h2v1h-2z"/><path fill="#d9829b" d="M730 250h2v1h-2zM723 258h2v2h-2zM729 238h2v2h-2zM729 251h1v1h-1zM741 243h1v1h-1zM728 237h2v3h-2zM742 244h2v3h-2zM730 243h2v1h-2zM726 253h3v2h-3zM728 257h2v1h-2zM724 255h2v3h-2zM743 250h2v2h-2zM727 259h2v3h-2zM725 259h2v3h-2zM732 250h2v1h-2zM744 250h2v2h-2zM737 244h2v2h-2zM728 248h2v1h-2zM729 239h2v2h-2zM735 243h2v2h-2zM717 249h3v2h-3zM732 243h2v2h-2zM727 245h2v2h-2zM741 254h2v1h-2zM719 240h2v1h-2zM744 254h2v3h-2zM722 244h2v2h-2zM724 257h3v2h-3zM737 246h1v1h-1zM729 256h3v2h-3zM727 237h2v2h-2zM714 241h2v2h-2zM730 245h2v1h-2zM738 254h3v2h-3zM724 261h2v2h-2zM728 257h2v3h-2zM726 245h2v1h-2zM724 239h2v1h-2zM717 252h1v1h-1zM734 246h3v2h-3zM744 255h2v1h-2zM741 242h1v1h-1zM726 238h1v1h-1zM716 245h2v2h-2zM724 242h2v3h-2zM740 252h1v1h-1zM744 248h3v2h-3zM717 250h1v1h-1zM734 250h2v2h-2zM719 247h1v1h-1zM723 252h1v2h-1zM726 246h2v3h-2zM740 242h1v1h-1zM743 246h2v2h-2zM734 242h3v2h-3zM722 252h1v1h-1zM721 239h2v1h-2zM739 251h2v3h-2zM729 249h2v2h-2zM737 244h2v1h-2zM718 250h2v2h-2zM728 253h2v2h-2zM738 248h1v2h-1zM731 249h1v2h-1zM738 245h2v1h-2zM721 251h1v1h-1zM742 256h1v1h-1zM722 241h1v2h-1z"/><polygon points="716,243 726,238 742,243 742.7,246 746,254 740,258 732,256 724,262 718,256" fill="#d9829b" /><path fill="#f0a0c0" d="M724 257h1v1h-1zM726 253h2v1h-2zM721 256h1v1h-1zM737 242h2v2h-2zM736 246h1v1h-1zM736 247h2v1h-2zM733 243h2v1h-2zM740 256h1v1h-1zM720 258h1v1h-1zM736 250h2v1h-2zM739 248h2v1h-2zM735 241h1v1h-1zM734 248h1v2h-1zM723 255h1v2h-1zM729 246h1v1h-1zM723 254h1v2h-1z"/><path fill="#c39a96" d="M732 253h1v2h-1zM723 254h1v1h-1zM723 245h2v1h-2zM740 256h2v1h-2zM731 248h1v1h-1zM740 254h1v1h-1zM741 245h2v2h-2zM738 256h2v1h-2zM729 256h1v1h-1zM733 241h1v1h-1zM730 252h1v1h-1zM732 246h1v1h-1zM721 245h1v1h-1zM739 253h1v1h-1zM724 240h1v1h-1zM728 247h1v1h-1zM738 253h1v1h-1zM733 253h1v1h-1zM740 255h1v1h-1zM735 254h1v1h-1z"/><path fill="#0e7a2a" d="M729 249h1v2h-1zM726 244h2v2h-2zM722 251h1v1h-1zM727 257h1v1h-1zM738 252h2v1h-2zM735 248h1v1h-1zM726 238h1v2h-1z"/><path fill="#f24a1e" d="M739 257h1v1h-1zM717 249h1v1h-1zM728 245h1v1h-1zM734 244h1v2h-1zM720 246h1v1h-1zM726 242h1v1h-1zM728 253h2v2h-2zM723 245h2v1h-2zM737 255h1v1h-1zM741 250h1v1h-1zM723 244h1v1h-1zM732 247h1v2h-1zM722 255h1v1h-1zM720 251h1v1h-1zM728 252h1v1h-1zM743 255h2v2h-2z"/><path fill="#ffffff" d="M742 248h1v1h-1zM725 250h1v1h-1zM739 250h1v1h-1zM728 242h1v1h-1z"/><path fill="#f24a1e" d="M745 267h1v1h-1zM753 269h2v1h-2zM741 284h2v2h-2zM746 271h1v1h-1zM743 256h1v2h-1zM737 280h2v3h-2zM751 281h2v2h-2zM749 274h1v1h-1zM753 276h2v3h-2zM738 264h2v1h-2zM748 285h1v1h-1zM748 285h1v1h-1zM739 274h1v2h-1zM757 268h1v2h-1zM741 286h3v2h-3zM746 266h3v2h-3zM734 270h3v2h-3zM748 268h1v2h-1zM735 275h1v2h-1zM731 275h1v2h-1zM742 280h1v2h-1zM739 267h2v1h-2zM734 275h2v2h-2zM744 254h2v2h-2zM735 272h1v1h-1zM728 262h1v1h-1zM731 262h1v1h-1zM733 272h2v3h-2zM750 285h1v1h-1zM730 259h2v1h-2zM736 280h2v1h-2zM752 281h2v2h-2zM744 273h2v2h-2zM737 276h1v1h-1zM737 265h1v1h-1zM737 256h2v2h-2zM740 270h2v1h-2zM745 259h1v1h-1zM730 266h2v1h-2zM748 273h2v2h-2zM746 286h1v2h-1zM751 280h2v2h-2zM744 278h1v1h-1zM749 271h1v2h-1zM732 273h1v2h-1zM753 271h2v2h-2zM745 265h1v2h-1zM734 266h1v2h-1zM746 262h2v1h-2zM741 283h3v2h-3zM752 283h2v3h-2zM737 261h1v2h-1zM752 263h2v1h-2zM745 272h2v1h-2zM734 258h1v1h-1zM747 252h2v1h-2zM752 264h1v2h-1zM752 261h1v1h-1zM735 277h2v3h-2zM726 263h1v2h-1zM751 267h2v2h-2zM743 261h1v1h-1zM735 279h1v1h-1zM748 286h2v2h-2zM739 283h1v2h-1zM754 268h2v1h-2zM755 265h1v2h-1zM746 272h2v2h-2zM735 258h2v2h-2zM731 274h2v2h-2zM747 276h2v3h-2zM739 263h2v1h-2zM747 272h2v2h-2zM735 261h2v1h-2zM730 266h2v1h-2zM752 266h1v1h-1zM756 276h1v1h-1zM734 275h1v1h-1zM757 268h2v2h-2zM754 259h1v1h-1zM737 281h2v1h-2zM742 277h2v2h-2zM746 284h2v2h-2zM738 259h1v1h-1zM745 282h1v2h-1zM737 257h1v2h-1zM740 255h1v1h-1zM741 269h1v1h-1zM756 269h2v2h-2zM750 254h2v1h-2z"/><polygon points="728,262 736,256 748.4,254.4 753,260 755.7,267.5 756.5,275.6 752.5,283.7 744,286 736,281 731,272" fill="#f24a1e" /><path fill="#d9829b" d="M736 262h2v1h-2zM746 282h2v1h-2zM751 261h1v1h-1zM749 264h2v2h-2zM752 268h2v2h-2zM735 258h3v2h-3zM730 260h1v1h-1zM732 259h2v1h-2zM738 266h2v2h-2zM740 264h2v3h-2zM742 284h1v1h-1zM752 272h1v1h-1zM736 269h1v1h-1zM729 264h2v1h-2zM743 281h1v2h-1zM743 262h2v1h-2zM747 263h1v2h-1zM747 277h1v1h-1z"/><path fill="#c39a96" d="M737 264h1v1h-1zM750 272h2v2h-2zM737 275h2v2h-2zM744 266h2v2h-2zM745 266h1v1h-1zM750 279h1v2h-1zM742 264h1v1h-1zM747 273h2v3h-2zM751 276h2v3h-2zM747 268h1v2h-1zM734 259h3v2h-3zM742 277h2v2h-2z"/><path fill="#f08060" d="M748 283h2v1h-2zM732 267h2v3h-2zM743 259h1v1h-1zM745 260h2v1h-2zM739 264h1v1h-1zM732 266h1v2h-1zM742 263h2v3h-2zM745 261h2v2h-2zM747 267h1v2h-1zM743 280h2v1h-2zM733 268h1v1h-1zM744 277h3v2h-3zM741 261h1v1h-1zM734 272h1v2h-1zM749 256h2v2h-2zM744 266h1v1h-1zM740 266h2v1h-2zM737 264h2v3h-2zM736 264h1v1h-1z"/><path fill="#12d0d8" d="M752 278h2v1h-2zM738 274h1v1h-1zM732 265h2v3h-2zM746 279h1v2h-1zM742 262h1v2h-1zM734 264h3v2h-3z"/><path fill="#cfae7d" d="M755 271h2v2h-2zM747 259h1v2h-1zM752 281h1v2h-1zM741 278h3v2h-3zM744 283h2v2h-2zM748 257h1v1h-1zM747 283h3v2h-3zM740 281h2v2h-2zM732 262h1v1h-1zM743 270h2v3h-2zM740 266h1v1h-1zM749 260h2v3h-2zM747 275h1v1h-1zM749 269h2v3h-2z"/><path fill="#ffffff" d="M729 262h2v2h-2zM752 267h1v1h-1zM734 266h2v2h-2zM748 274h3v2h-3zM744 279h3v2h-3zM736 264h2v2h-2zM729 263h1v1h-1z"/><polygon points="729,262 737,261 738,269 731,270" fill="#cfae7d" /><polygon points="709,257 715,257 716,270 710,270" fill="#a89210" /><polygon points="748,287 752,284 755,293.5 751,294" fill="#cfae7d" /><polygon points="708,233 715,233 715,238 708,238" fill="#a80c10" /><polygon points="724,215 718,234 713,232 720,212" fill="#a89210" /><path fill="#a89210" d="M689 285h3v2h-3zM693 268h2v2h-2zM692 273h2v3h-2zM691 281h2v1h-2zM685 274h1v1h-1zM690 291h2v1h-2zM694 275h3v2h-3zM698 287h1v1h-1zM697 286h2v2h-2zM694 277h3v2h-3zM691 292h3v2h-3zM696 288h2v2h-2zM691 279h1v2h-1zM691 275h1v1h-1zM694 285h2v1h-2zM692 295h2v2h-2zM697 269h1v2h-1zM691 273h1v2h-1zM689 285h2v2h-2zM696 280h1v1h-1zM699 274h1v1h-1zM690 283h2v2h-2zM689 267h2v2h-2zM685 287h2v1h-2zM689 268h1v1h-1zM696 281h1v1h-1zM697 286h1v2h-1zM696 275h1v1h-1zM686 267h1v2h-1z"/><polygon points="687,268 699,272 701,290 694,296 686,286" fill="#a89210" /><polygon points="720,282 730,284 729,293 722,293" fill="#a89210" /><path fill="#f4c8c0" d="M702 280h1v1h-1zM701 283h2v1h-2zM698 282h2v2h-2zM707 280h1v2h-1zM708 290h2v2h-2zM709 290h1v1h-1zM702 289h1v1h-1zM710 288h1v2h-1zM706 285h1v1h-1zM710 281h2v2h-2zM705 284h1v2h-1zM704 286h2v2h-2zM711 278h2v1h-2zM710 280h2v1h-2zM702 287h1v1h-1zM705 288h1v1h-1zM703 286h1v1h-1zM699 288h2v1h-2zM703 289h2v1h-2zM698 281h2v2h-2zM706 277h2v1h-2zM710 290h2v3h-2zM705 290h2v1h-2z"/><polygon points="698,278 712,276 710,290 700,290" fill="#f4c8c0" /><path fill="#fdf800" d="M702 285h1v1h-1zM705 281h1v1h-1zM703 278h1v1h-1zM708 289h1v2h-1zM703 287h2v1h-2zM706 283h1v2h-1zM709 279h2v1h-2zM700 283h1v1h-1zM702 287h1v1h-1zM708 285h1v1h-1zM700 285h2v1h-2zM706 285h1v2h-1zM706 282h2v1h-2zM705 281h1v1h-1zM704 282h1v1h-1zM702 286h1v1h-1zM702 282h1v1h-1zM702 283h1v2h-1zM698 279h1v1h-1zM709 280h1v2h-1z"/><path fill="#a89210" d="M708 289h2v1h-2zM702 286h2v2h-2zM707 280h1v2h-1zM704 289h1v1h-1zM702 277h1v1h-1zM710 280h1v1h-1zM704 277h1v2h-1zM699 283h1v1h-1zM711 276h1v1h-1zM709 276h1v1h-1zM698 278h1v1h-1zM709 286h1v1h-1zM709 289h1v1h-1z"/><polygon points="711,309 719,304 722,311 714,318 711,326 706,322" fill="#3cf05a" /><polygon points="683,243 690,241 694,253 688,256" fill="#3cf05a" /><path fill="#c39a96" d="M583 260h1v1h-1zM586 259h2v2h-2zM577 268h1v1h-1zM551 267h1v1h-1zM583 255h1v1h-1zM585 269h2v2h-2zM596 253h2v3h-2zM579 257h1v2h-1zM565 261h3v2h-3zM580 251h3v2h-3zM601 248h1v1h-1zM601 249h2v1h-2zM572 267h1v2h-1zM592 265h2v2h-2zM590 231h1v1h-1zM586 229h1v1h-1zM593 261h2v2h-2zM592 254h2v1h-2zM593 258h1v1h-1zM589 238h2v1h-2zM570 250h3v2h-3zM571 250h1v1h-1zM551 261h1v1h-1zM597 263h2v2h-2zM594 241h2v1h-2zM578 247h2v2h-2zM575 252h2v1h-2zM575 251h3v2h-3zM589 261h2v1h-2zM580 232h1v1h-1zM573 244h1v1h-1zM588 228h1v2h-1zM598 227h2v2h-2zM602 239h2v2h-2zM593 252h2v1h-2zM607 245h2v3h-2zM584 237h2v1h-2zM583 253h2v1h-2zM577 242h2v3h-2zM602 256h1v2h-1zM574 245h1v2h-1zM570 263h2v3h-2zM603 247h1v2h-1zM601 235h2v3h-2zM593 236h2v2h-2zM583 228h2v1h-2zM578 250h2v2h-2zM587 247h2v1h-2zM568 259h3v2h-3zM574 249h1v1h-1zM600 231h1v1h-1zM579 259h2v2h-2zM584 250h2v3h-2zM594 255h1v1h-1zM595 235h3v2h-3zM578 231h1v1h-1zM589 251h2v1h-2zM563 256h1v1h-1zM603 232h3v2h-3zM586 230h2v3h-2zM581 250h1v1h-1zM593 231h2v2h-2zM591 252h2v2h-2zM595 228h1v2h-1zM590 242h2v2h-2zM589 243h2v3h-2zM598 252h1v1h-1zM582 235h1v1h-1zM593 240h2v2h-2zM602 254h1v2h-1zM593 244h2v1h-2zM592 251h1v1h-1zM587 238h2v2h-2zM569 255h2v2h-2zM578 255h1v1h-1zM593 266h3v2h-3zM558 257h2v2h-2zM549 262h1v1h-1zM577 252h2v2h-2zM565 263h1v1h-1zM586 255h2v2h-2zM570 250h2v2h-2zM565 257h2v1h-2zM595 259h2v3h-2zM583 248h1v1h-1zM594 235h2v2h-2zM586 265h2v1h-2zM583 251h1v1h-1zM553 266h2v2h-2zM598 258h2v1h-2zM582 260h2v2h-2zM588 264h2v1h-2zM606 238h1v2h-1zM581 255h2v1h-2zM606 241h3v2h-3zM579 266h1v1h-1zM593 231h1v1h-1zM593 239h1v1h-1zM598 249h1v1h-1zM594 229h2v1h-2zM589 226h1v1h-1zM583 255h1v2h-1zM579 235h2v2h-2zM572 257h1v2h-1zM597 246h1v1h-1zM568 260h1v1h-1zM584 237h1v2h-1zM571 267h1v2h-1zM580 272h2v2h-2zM598 261h2v2h-2zM601 235h2v1h-2zM573 258h3v2h-3zM586 264h2v1h-2zM572 247h1v2h-1zM579 243h1v1h-1zM605 244h2v3h-2zM590 256h2v1h-2zM558 257h2v3h-2zM574 237h2v2h-2zM601 251h2v2h-2zM587 243h1v2h-1zM574 245h1v1h-1zM548 256h1v1h-1zM578 248h1v2h-1zM580 249h2v1h-2zM604 250h2v2h-2zM605 240h2v2h-2zM580 260h1v2h-1zM586 227h3v2h-3zM588 235h2v1h-2zM581 256h1v1h-1zM608 240h2v3h-2zM595 249h2v2h-2zM602 242h2v1h-2zM597 252h3v2h-3zM584 269h2v1h-2zM601 231h1v1h-1zM591 252h1v2h-1zM605 245h1v1h-1zM578 234h2v1h-2zM607 242h2v1h-2zM589 255h2v2h-2zM599 252h2v1h-2zM582 264h1v2h-1zM592 262h2v3h-2zM593 227h2v3h-2zM585 227h2v2h-2zM565 256h1v2h-1zM597 253h1v2h-1zM604 255h1v2h-1zM602 257h1v2h-1zM610 242h2v1h-2zM610 242h2v2h-2zM583 251h1v2h-1zM581 253h2v2h-2zM573 245h1v1h-1zM584 248h1v1h-1zM593 244h2v1h-2zM608 243h2v1h-2zM587 251h1v2h-1zM567 264h2v1h-2zM593 228h1v1h-1zM573 242h2v2h-2zM576 241h1v1h-1zM585 259h2v1h-2zM575 259h3v2h-3zM577 244h1v2h-1zM583 250h1v2h-1zM593 238h1v1h-1zM584 266h3v2h-3zM601 228h1v1h-1zM592 248h1v2h-1z"/><polygon points="575,240 581,230 600,231 606,244 600,257 592,265 581,270 566,262 556,266 548.4,254.4 570.4,254.4" fill="#c39a96" /><path fill="#0e7a2a" d="M586 235h1v1h-1zM586 264h1v1h-1zM596 239h1v2h-1zM596 239h2v2h-2zM582 251h1v2h-1zM596 233h1v2h-1zM579 249h1v2h-1zM557 260h1v1h-1zM587 232h1v1h-1zM594 260h1v1h-1zM597 246h1v1h-1zM595 255h1v1h-1zM575 247h1v1h-1zM557 264h1v2h-1zM585 266h1v1h-1zM589 245h1v2h-1zM589 239h1v1h-1zM584 256h1v1h-1zM582 241h1v1h-1zM597 231h1v1h-1zM598 251h2v1h-2zM575 249h1v1h-1zM602 241h1v1h-1zM582 259h1v1h-1zM580 243h1v1h-1zM599 249h2v2h-2zM555 263h1v1h-1zM581 233h1v1h-1zM580 250h1v2h-1zM591 253h1v1h-1zM595 249h1v1h-1zM597 258h1v1h-1zM554 258h2v2h-2zM581 245h1v1h-1zM588 256h1v1h-1z"/><path fill="#fdf800" d="M566 259h1v1h-1zM556 256h1v1h-1zM588 254h1v2h-1zM575 250h1v2h-1zM590 265h1v2h-1zM582 253h1v1h-1zM553 259h1v1h-1zM583 236h1v2h-1zM585 262h2v1h-2zM597 252h2v2h-2zM583 252h1v1h-1zM595 235h2v1h-2zM586 233h2v1h-2zM588 258h1v2h-1zM580 250h2v1h-2zM597 258h2v1h-2zM574 242h1v1h-1zM586 235h2v1h-2zM596 250h2v1h-2zM601 239h2v1h-2zM573 253h1v2h-1zM598 236h2v1h-2zM580 253h1v2h-1zM584 238h1v1h-1zM565 254h2v2h-2zM582 250h1v1h-1zM598 231h1v1h-1zM559 256h1v1h-1zM564 261h2v1h-2zM591 253h2v1h-2zM594 234h1v2h-1zM588 244h1v1h-1zM584 264h1v1h-1zM601 244h1v1h-1zM561 263h1v1h-1zM596 257h1v1h-1zM596 248h1v2h-1zM596 249h2v2h-2zM580 252h1v1h-1zM552 255h2v1h-2zM575 241h1v1h-1zM593 233h2v2h-2zM588 230h2v1h-2zM580 250h1v1h-1zM562 254h1v1h-1zM601 241h1v1h-1zM578 261h1v1h-1zM580 232h1v1h-1zM600 249h1v1h-1zM585 256h1v1h-1zM574 256h1v1h-1zM596 238h1v1h-1zM579 240h1v1h-1zM556 262h1v1h-1zM570 258h1v1h-1zM581 238h1v1h-1zM591 235h1v1h-1zM572 255h1v2h-1zM594 241h2v1h-2zM590 232h1v1h-1zM591 241h2v1h-2zM584 260h1v1h-1zM560 255h1v1h-1zM579 251h1v2h-1zM575 255h1v1h-1zM587 263h2v1h-2zM583 250h2v2h-2zM584 262h1v2h-1zM578 260h1v1h-1zM582 251h1v1h-1zM583 267h1v1h-1zM586 241h1v1h-1zM589 249h1v2h-1zM564 261h1v1h-1zM582 244h2v1h-2zM594 243h1v1h-1zM585 230h2v2h-2zM561 259h2v1h-2zM587 238h1v2h-1zM600 249h1v2h-1zM572 256h1v2h-1zM569 256h1v1h-1zM581 264h1v2h-1zM582 238h2v2h-2zM600 232h2v2h-2zM574 244h1v1h-1zM561 255h1v1h-1zM557 263h1v2h-1zM586 252h1v1h-1zM589 247h1v1h-1zM596 250h1v2h-1zM593 251h1v1h-1zM587 238h1v1h-1zM582 239h1v1h-1z"/><path fill="#c49c0e" d="M567 255h2v2h-2zM578 263h1v2h-1zM584 262h1v1h-1zM597 245h1v1h-1zM562 254h1v1h-1zM557 264h1v1h-1zM563 262h1v1h-1zM597 243h1v1h-1zM579 232h2v2h-2zM576 250h1v1h-1zM589 240h1v1h-1zM549 255h1v1h-1zM575 251h1v2h-1zM592 244h2v1h-2zM572 253h1v1h-1zM576 244h1v1h-1zM585 253h2v2h-2zM573 255h1v2h-1zM552 258h1v2h-1zM598 241h1v1h-1zM567 257h1v1h-1zM578 253h1v1h-1zM589 231h2v1h-2zM596 244h1v1h-1z"/><path fill="#d9829b" d="M600 233h1v1h-1zM578 255h2v2h-2zM588 252h1v1h-1zM583 252h2v1h-2zM589 234h1v1h-1zM596 258h1v1h-1zM586 237h1v2h-1zM601 242h1v1h-1zM554 254h2v1h-2zM550 257h2v2h-2zM587 246h1v1h-1zM576 255h1v1h-1zM557 260h1v2h-1zM571 259h2v1h-2zM574 247h1v2h-1zM587 234h1v1h-1zM580 258h1v1h-1z"/><path fill="#ffffff" d="M559 260h2v2h-2zM605 243h1v1h-1zM574 258h1v1h-1zM583 264h1v1h-1zM598 234h1v1h-1z"/><polygon points="539.4,256 545,254 552,258 548,263 543,262" fill="#a80c10" /><polygon points="598,232 611,232 612,241 600,243" fill="#a89210" /><polygon points="582,248 588,247 590,255 584,257" fill="#3cf05a" /><polygon points="583,271 591,270 590,275 584,276" fill="#3cf05a" /><polygon points="603,257 611,257 611,264 603,264" fill="#f08060" /><polygon points="548,265 553,265 553,272 548,272" fill="#3cf05a" /><path fill="#a89210" d="M621 268h1v1h-1zM622 264h2v3h-2zM622 268h2v1h-2zM620 267h1v2h-1zM625 271h2v1h-2zM619 276h2v2h-2zM619 269h2v3h-2zM620 267h2v1h-2zM617 265h2v2h-2zM618 268h1v2h-1zM625 266h1v1h-1zM625 270h2v1h-2zM621 270h1v2h-1zM622 274h1v1h-1zM622 270h2v1h-2z"/><polygon points="617,265 625,266 624,276 617,275" fill="#a89210" /><path fill="#0e7a2a" d="M535 270h1v2h-1zM538 276h1v1h-1zM542 268h1v1h-1zM531 276h1v1h-1zM534 268h1v2h-1zM529 271h3v2h-3zM539 280h2v1h-2zM535 274h2v2h-2zM543 280h1v2h-1zM531 275h3v2h-3zM530 279h2v2h-2zM532 276h1v2h-1zM536 273h2v2h-2zM540 283h2v2h-2zM544 271h2v1h-2zM528 276h1v2h-1zM533 277h1v2h-1zM534 271h1v1h-1zM529 282h1v2h-1zM531 270h2v1h-2zM544 273h3v2h-3zM529 275h1v2h-1zM529 275h2v2h-2zM544 282h2v1h-2zM545 276h2v1h-2zM542 278h1v1h-1zM535 270h1v1h-1zM531 272h1v1h-1zM542 276h1v2h-1zM541 267h1v2h-1zM529 277h2v2h-2zM531 283h3v2h-3zM537 278h2v2h-2z"/><path fill="#0e7a2a" d="M559 298h1v2h-1zM564 294h1v2h-1zM572 295h1v2h-1zM571 302h2v2h-2zM571 302h2v1h-2zM548 295h2v3h-2zM570 300h2v1h-2zM569 296h1v1h-1zM552 305h1v1h-1zM565 291h1v1h-1zM565 305h3v2h-3zM549 293h1v1h-1zM566 302h3v2h-3zM571 294h3v2h-3zM561 303h1v2h-1zM555 302h2v1h-2zM554 303h2v3h-2zM564 302h1v2h-1zM561 305h2v2h-2zM554 306h2v2h-2zM557 295h3v2h-3zM568 304h1v1h-1zM566 294h1v1h-1zM553 306h1v2h-1zM568 294h1v1h-1zM569 305h2v2h-2zM560 296h2v2h-2zM572 298h1v1h-1zM569 297h2v1h-2zM559 294h1v1h-1zM551 294h1v2h-1zM564 304h1v1h-1zM555 294h2v2h-2zM569 292h2v1h-2zM572 300h1v1h-1zM559 302h1v2h-1zM555 291h2v1h-2zM550 292h2v3h-2z"/><path fill="#b89a10" d="M620 276h2v2h-2zM626 271h1v1h-1zM618 268h2v2h-2zM621 269h2v3h-2zM618 273h2v2h-2zM622 281h3v2h-3zM625 267h1v1h-1zM625 277h2v2h-2zM626 268h2v3h-2zM617 267h1v2h-1zM624 269h1v2h-1zM624 265h1v1h-1zM621 283h3v2h-3zM623 282h1v2h-1zM620 275h1v1h-1zM621 279h2v1h-2zM624 278h2v2h-2zM618 269h1v1h-1zM625 273h1v2h-1zM624 283h2v1h-2zM627 275h2v2h-2z"/><polygon points="619.5,269.95 625.1,268.55 626.5,279.75 620.9,279.75" fill="#b89a10" /><path fill="#d6b212" d="M624 273h1v1h-1zM621 277h1v1h-1zM621 277h1v1h-1zM622 269h1v2h-1z"/><path fill="#fdf800" d="M623 277h2v2h-2z"/><path fill="#b89a10" d="M642 282h1v2h-1zM635 277h1v2h-1zM638 284h2v1h-2zM645 268h2v2h-2zM642 278h2v2h-2zM638 286h2v2h-2zM638 282h1v2h-1zM638 268h2v2h-2zM644 284h2v1h-2zM638 280h1v1h-1zM643 269h2v2h-2zM638 272h2v3h-2zM642 281h1v2h-1zM637 273h2v2h-2zM644 272h3v2h-3zM647 269h2v3h-2zM646 271h2v2h-2zM641 278h2v2h-2zM636 278h1v1h-1zM640 287h2v3h-2zM643 280h3v2h-3zM645 272h1v1h-1zM636 271h2v2h-2zM645 280h1v2h-1zM643 276h2v2h-2zM637 278h3v2h-3zM638 280h1v1h-1zM643 286h2v2h-2z"/><polygon points="637.35,270.7 644.35,272.1 642.95,283.3 637.35,281.9" fill="#b89a10" /><path fill="#d6b212" d="M639 275h1v1h-1zM639 277h1v1h-1zM640 274h1v2h-1z"/><path fill="#fdf800" d="M643 277h2v1h-2zM641 281h2v2h-2zM637 276h1v1h-1zM643 274h1v1h-1zM637 277h1v2h-1zM638 273h2v1h-2zM639 272h1v1h-1z"/><path fill="#b89a10" d="M675 294h2v1h-2zM677 295h1v2h-1zM667 291h2v2h-2zM667 290h2v2h-2zM669 282h1v2h-1zM673 286h1v2h-1zM671 288h1v1h-1zM676 288h1v1h-1zM669 290h2v2h-2zM670 280h3v2h-3zM672 287h2v2h-2zM668 278h1v2h-1zM676 286h1v2h-1zM673 279h1v2h-1zM670 294h2v2h-2zM668 292h3v2h-3zM670 292h1v1h-1zM677 291h1v1h-1zM667 293h2v1h-2zM672 296h2v2h-2zM676 283h2v2h-2z"/><polygon points="669.35,282.4 676.35,283.8 674.95,293.6 669.35,292.2" fill="#b89a10" /><path fill="#d6b212" d="M673 291h1v2h-1zM674 284h1v2h-1zM669 284h1v1h-1zM674 285h1v2h-1z"/><path fill="#fdf800" d="M672 283h1v1h-1zM674 290h1v2h-1zM674 290h2v1h-2zM669 285h1v1h-1z"/><path fill="#b89a10" d="M573 298h2v1h-2zM580 299h2v2h-2zM573 297h1v1h-1zM571 300h1v1h-1zM572 297h2v2h-2zM575 301h2v2h-2zM578 301h1v1h-1z"/><polygon points="573.2,296.9 578.8,296.9 578.8,301.1 573.2,301.1" fill="#b89a10" /><path fill="#d6b212" d="M575 300h2v1h-2zM578 300h1v1h-1z"/><path fill="#b89a10" d="M668 300h2v1h-2zM664 310h2v1h-2zM659 310h1v1h-1zM661 309h2v1h-2zM667 301h2v2h-2zM666 299h2v2h-2zM663 300h2v2h-2zM663 303h1v1h-1zM661 302h1v1h-1zM663 298h2v2h-2zM664 303h2v3h-2zM659 303h2v3h-2zM666 302h1v1h-1zM661 305h2v2h-2zM659 300h1v1h-1zM668 306h1v2h-1zM666 307h1v2h-1z"/><polygon points="661.2,301.5 666.8,301.5 666.8,308.5 661.2,308.5" fill="#b89a10" /><path fill="#fdf800" d="M661 303h2v1h-2zM663 301h2v2h-2z"/><path fill="#d6b212" d="M666 305h1v1h-1zM665 301h1v1h-1z"/><polygon points="641,251 646,250 647,256 642,257" fill="#3cf05a" /><polygon points="659,265 665,263 667,269 661,272" fill="#3cf05a" /><polyline points="612,283 614,292 620,298" fill="none" stroke="#3cf05a" stroke-width="1.2" stroke-linejoin="round" stroke-linecap="round"/><polyline points="667,322 664,330 660,336" fill="none" stroke="#3cf05a" stroke-width="1.2" stroke-linejoin="round" stroke-linecap="round"/><path fill="#cfae7d" d="M555 332h2v3h-2zM586 342h1v2h-1zM557 324h2v2h-2zM581 340h2v1h-2zM592 348h1v1h-1zM593 351h1v1h-1zM567 340h3v2h-3zM556 334h2v3h-2zM561 340h2v2h-2zM562 327h2v2h-2zM572 335h1v1h-1zM594 349h1v2h-1zM594 349h1v1h-1zM539 326h1v1h-1zM575 347h1v1h-1zM537 325h3v2h-3zM545 329h2v2h-2zM547 323h3v2h-3zM556 327h2v2h-2zM554 326h2v2h-2zM567 341h3v2h-3zM569 336h2v3h-2zM572 338h2v3h-2zM579 348h2v2h-2zM583 348h3v2h-3zM576 346h1v1h-1zM579 342h1v2h-1zM569 344h1v1h-1zM573 342h2v2h-2zM575 347h1v2h-1zM578 338h3v2h-3zM579 338h1v2h-1zM546 334h2v2h-2zM549 330h2v1h-2zM541 327h3v2h-3zM589 345h1v1h-1zM543 324h2v1h-2zM570 334h2v2h-2zM578 346h1v1h-1zM582 341h1v1h-1zM582 346h2v2h-2zM570 341h2v2h-2zM601 344h2v1h-2zM554 334h3v2h-3zM563 340h3v2h-3zM583 335h2v3h-2zM579 341h2v1h-2zM554 325h2v2h-2zM585 349h1v2h-1zM561 331h2v3h-2zM557 335h2v2h-2zM538 327h2v2h-2zM574 344h1v1h-1zM562 329h1v2h-1zM549 333h2v3h-2zM567 343h1v2h-1zM574 335h3v2h-3zM567 332h2v3h-2zM586 338h2v1h-2zM570 330h3v2h-3zM597 342h3v2h-3zM546 330h1v2h-1zM580 339h1v1h-1zM554 324h3v2h-3zM551 329h3v2h-3zM585 338h2v2h-2zM543 333h1v1h-1zM592 341h1v2h-1zM585 337h1v2h-1zM558 333h1v1h-1zM570 333h1v1h-1zM546 324h1v2h-1zM580 345h2v1h-2zM582 338h2v1h-2zM604 346h2v2h-2zM574 338h2v2h-2zM582 336h1v2h-1zM564 337h1v1h-1zM583 348h1v2h-1zM556 324h1v2h-1zM544 325h2v1h-2zM583 338h1v1h-1zM564 338h1v1h-1zM557 330h1v2h-1zM560 332h1v2h-1zM548 323h2v1h-2zM585 347h3v2h-3zM575 333h3v2h-3zM549 326h2v2h-2zM540 328h1v1h-1zM555 334h2v1h-2zM574 337h2v3h-2zM550 334h2v3h-2zM555 327h1v1h-1z"/><polygon points="540,325 560,326 575,334 590,338 600,345 590,350 575,347 560,340 546,336" fill="#cfae7d" /><path fill="#fdf800" d="M550 327h2v1h-2zM574 336h1v1h-1zM554 331h1v2h-1zM551 331h1v1h-1zM589 338h1v1h-1zM565 339h1v1h-1zM558 332h1v2h-1zM590 344h1v1h-1zM560 332h2v2h-2zM583 342h1v2h-1zM568 340h1v1h-1zM574 336h2v1h-2zM582 340h2v1h-2zM556 330h1v1h-1zM573 337h1v1h-1zM551 333h1v1h-1zM557 328h2v2h-2zM590 346h1v1h-1zM567 336h1v1h-1zM557 326h2v1h-2zM560 337h2v2h-2zM587 342h1v1h-1zM559 333h1v1h-1zM586 337h1v1h-1zM588 344h1v1h-1zM545 327h2v1h-2zM556 335h1v1h-1zM586 338h1v2h-1zM559 329h1v1h-1zM552 329h1v2h-1z"/><path fill="#cc1e1e" d="M584 346h1v1h-1zM578 347h1v1h-1zM587 339h1v2h-1zM568 334h2v1h-2zM562 336h1v1h-1zM562 331h1v1h-1zM559 332h2v1h-2zM576 341h1v1h-1zM593 341h1v1h-1zM598 345h1v2h-1zM551 337h2v2h-2zM579 346h1v2h-1zM586 340h1v1h-1zM548 332h1v1h-1zM581 347h2v2h-2zM596 344h1v1h-1zM565 342h1v1h-1zM598 344h1v1h-1zM595 342h1v1h-1zM553 331h1v2h-1zM569 335h2v1h-2zM571 341h2v1h-2zM579 339h1v2h-1zM590 345h2v1h-2zM568 338h1v1h-1zM580 346h1v1h-1zM592 344h1v1h-1zM569 342h2v2h-2zM550 331h2v1h-2zM567 332h1v2h-1zM563 340h2v2h-2zM546 325h1v1h-1zM580 339h1v1h-1zM570 342h1v2h-1zM552 336h1v1h-1zM564 336h1v1h-1zM561 335h1v1h-1zM563 341h1v1h-1zM562 333h1v1h-1zM572 339h2v1h-2zM562 336h2v1h-2zM590 340h2v1h-2zM590 347h1v2h-1zM575 337h1v1h-1zM578 335h1v2h-1zM587 341h1v1h-1zM544 332h1v2h-1z"/><path fill="#cc1e1e" d="M543 330h1v2h-1zM545 332h3v2h-3zM548 337h2v3h-2zM544 338h2v3h-2zM546 329h3v2h-3zM543 338h2v1h-2zM540 333h3v2h-3zM548 336h2v1h-2zM539 329h2v2h-2zM540 328h1v2h-1zM542 331h2v1h-2zM541 326h1v2h-1zM542 329h1v1h-1zM543 333h2v3h-2zM543 340h2v2h-2z"/><polygon points="540,326 548,326 549,340 541,341" fill="#cc1e1e" /><path fill="#cc1e1e" d="M569 349h1v2h-1zM576 336h2v3h-2zM556 338h1v1h-1zM575 338h2v2h-2zM563 340h2v1h-2zM566 347h2v2h-2zM562 333h1v1h-1zM573 343h2v2h-2zM562 334h2v3h-2zM565 341h1v1h-1zM562 338h2v2h-2zM577 344h2v2h-2zM560 348h1v2h-1zM557 336h2v2h-2zM578 350h2v1h-2zM570 351h2v1h-2zM576 340h2v1h-2zM575 350h2v2h-2zM575 343h1v1h-1zM564 351h3v2h-3zM563 339h1v2h-1zM566 339h2v2h-2zM573 348h2v3h-2zM560 338h2v1h-2zM567 338h2v2h-2zM563 334h1v2h-1zM566 340h1v1h-1zM568 343h2v3h-2zM557 337h1v1h-1zM562 341h1v1h-1zM570 338h3v2h-3zM567 338h2v2h-2zM572 348h2v3h-2zM576 339h1v1h-1zM561 350h1v1h-1zM578 342h1v2h-1zM567 340h2v2h-2z"/><polygon points="556,334 577,336 578,352 560,350" fill="#cc1e1e" /><path fill="#f08060" d="M562 343h1v1h-1zM576 339h2v2h-2zM566 343h1v2h-1zM565 342h1v1h-1zM561 341h2v2h-2zM562 344h1v1h-1zM558 334h1v1h-1zM563 346h2v1h-2zM560 340h1v1h-1zM569 338h1v1h-1zM561 346h1v1h-1zM563 345h2v1h-2zM570 348h1v1h-1zM572 347h2v1h-2z"/><path fill="#cfae7d" d="M565 343h1v1h-1zM568 341h1v1h-1zM561 349h2v1h-2zM558 335h1v1h-1zM556 335h1v2h-1zM565 339h2v1h-2zM571 345h1v1h-1zM572 344h1v2h-1zM573 349h1v1h-1zM567 350h1v1h-1zM573 346h1v2h-1zM559 334h1v1h-1zM567 347h1v1h-1zM560 343h2v1h-2zM570 347h1v1h-1zM575 349h1v1h-1z"/><path fill="#1878c8" d="M563 339h1v2h-1zM569 343h1v1h-1zM575 351h1v1h-1zM572 348h2v1h-2zM559 341h1v1h-1zM570 337h1v1h-1z"/><path fill="#a89210" d="M648 352h2v2h-2zM628 354h1v1h-1zM579 344h3v2h-3zM625 360h3v2h-3zM644 356h2v2h-2zM632 354h3v2h-3zM606 342h3v2h-3zM591 339h2v1h-2zM625 354h2v2h-2zM586 349h3v2h-3zM591 341h2v1h-2zM645 353h1v1h-1zM608 345h2v1h-2zM602 344h1v1h-1zM626 347h2v2h-2zM591 343h1v2h-1zM640 349h1v1h-1zM585 347h1v1h-1zM578 338h1v2h-1zM646 353h1v2h-1zM612 351h2v2h-2zM622 353h1v2h-1zM593 345h3v2h-3zM598 349h1v2h-1zM619 344h2v1h-2zM646 360h2v1h-2zM634 354h2v3h-2zM596 347h3v2h-3zM627 352h2v1h-2zM580 346h2v1h-2zM593 347h1v2h-1zM641 356h1v1h-1zM655 355h1v2h-1zM643 362h1v1h-1zM616 343h1v2h-1zM581 345h2v1h-2zM581 347h1v1h-1zM624 354h2v2h-2zM641 356h2v1h-2zM608 356h2v2h-2zM593 351h1v2h-1zM639 349h2v3h-2zM599 349h2v2h-2zM644 361h2v1h-2zM627 353h2v2h-2zM625 351h1v1h-1zM651 357h2v1h-2zM620 357h1v1h-1zM653 360h1v1h-1zM600 341h1v1h-1zM610 356h3v2h-3zM622 353h3v2h-3zM639 359h2v1h-2zM642 352h2v3h-2zM656 355h1v2h-1zM586 345h1v1h-1zM603 348h2v3h-2zM657 357h2v2h-2zM634 350h2v2h-2zM657 361h1v1h-1zM609 344h2v2h-2zM623 349h2v1h-2zM583 341h3v2h-3zM587 349h2v2h-2zM588 350h1v2h-1zM654 361h1v1h-1zM628 352h1v2h-1zM607 343h3v2h-3zM619 348h1v1h-1zM647 355h1v2h-1zM596 348h2v2h-2zM597 348h1v2h-1zM581 345h3v2h-3zM628 354h1v1h-1zM578 341h1v1h-1zM647 354h2v1h-2zM623 347h1v1h-1zM623 356h2v1h-2zM648 362h2v1h-2zM649 363h2v2h-2zM656 358h2v1h-2zM652 355h2v1h-2zM622 349h1v1h-1zM610 347h1v1h-1zM652 351h2v2h-2zM637 356h2v1h-2zM634 355h1v1h-1zM614 354h1v1h-1zM640 354h3v2h-3zM652 354h3v2h-3zM635 351h1v2h-1zM615 355h1v2h-1zM612 352h1v1h-1zM638 351h2v2h-2zM600 350h1v1h-1zM647 350h3v2h-3zM642 360h2v2h-2zM637 356h2v1h-2zM603 351h1v1h-1zM613 343h2v2h-2zM577 341h2v2h-2zM632 347h2v3h-2z"/><polygon points="579,338 612,343 654,352 655,364 612,358 580,349" fill="#a89210" /><path fill="#fdf800" d="M645 353h1v1h-1zM615 356h1v1h-1zM602 351h2v1h-2zM619 346h2v2h-2zM611 350h1v1h-1zM603 346h1v1h-1zM601 341h1v1h-1zM605 342h1v1h-1zM590 349h2v1h-2zM651 351h1v1h-1zM617 353h1v2h-1zM589 342h1v1h-1zM653 363h1v1h-1zM624 346h1v1h-1zM643 356h1v1h-1zM626 356h1v1h-1zM584 340h2v2h-2zM604 355h2v1h-2zM623 348h1v1h-1zM594 352h1v1h-1zM644 361h1v1h-1zM627 355h1v2h-1zM610 350h1v1h-1zM615 355h1v2h-1zM622 347h2v1h-2zM615 348h1v2h-1zM612 355h2v1h-2zM631 354h2v1h-2zM598 342h2v1h-2zM590 344h2v2h-2zM596 352h2v1h-2zM636 348h2v2h-2zM654 361h2v2h-2zM639 358h1v1h-1zM622 345h1v1h-1zM606 345h2v1h-2zM587 343h1v2h-1zM592 351h1v2h-1zM625 354h1v1h-1zM598 350h2v1h-2zM580 348h1v1h-1zM579 342h1v1h-1zM635 357h1v2h-1zM622 346h1v2h-1zM619 350h1v1h-1zM589 343h1v1h-1zM633 348h2v1h-2z"/><path fill="#c49c0e" d="M634 348h2v1h-2zM615 350h1v2h-1zM617 356h1v1h-1zM638 352h1v1h-1zM580 346h1v1h-1zM635 351h2v2h-2zM605 346h2v1h-2zM585 350h2v1h-2zM591 351h1v1h-1zM626 346h2v1h-2zM585 347h1v1h-1zM640 361h1v1h-1zM651 354h1v1h-1zM596 343h1v2h-1zM603 342h2v1h-2zM630 349h1v1h-1zM602 344h1v1h-1zM625 355h2v2h-2zM641 361h2v1h-2zM639 352h1v1h-1zM641 360h1v1h-1zM601 347h2v2h-2zM643 359h1v1h-1zM643 351h1v1h-1zM637 350h1v2h-1zM640 349h2v1h-2zM591 348h2v2h-2zM581 348h2v1h-2zM637 359h2v1h-2zM612 343h1v2h-1zM585 341h1v1h-1zM585 340h2v1h-2zM632 349h2v2h-2zM650 357h1v2h-1zM634 358h2v1h-2zM607 342h1v1h-1zM645 354h2v1h-2zM639 355h1v1h-1zM637 361h2v1h-2zM585 348h1v2h-1zM585 345h1v2h-1zM607 356h1v2h-1zM610 347h2v2h-2zM583 344h1v2h-1zM644 354h1v1h-1zM606 342h2v1h-2zM616 348h1v1h-1zM629 353h1v1h-1zM635 353h2v2h-2zM642 361h1v2h-1zM629 347h1v2h-1zM633 358h2v2h-2zM601 346h1v1h-1zM652 363h1v1h-1zM645 357h1v1h-1zM619 353h1v2h-1zM642 356h1v1h-1zM636 352h1v2h-1z"/><path fill="#cc1e1e" d="M603 345h1v1h-1zM591 340h1v2h-1zM599 347h1v1h-1zM596 338h2v2h-2zM600 341h2v2h-2zM594 341h2v2h-2zM597 340h2v2h-2zM598 347h1v1h-1zM602 339h1v2h-1zM600 342h1v2h-1zM599 338h2v2h-2zM599 346h2v1h-2zM600 346h1v1h-1zM592 346h1v2h-1zM602 341h1v1h-1zM593 343h1v1h-1z"/><polygon points="592,338 605,338 605,347 593,347" fill="#cc1e1e" /><path fill="#3cf05a" d="M601 338h1v1h-1zM597 342h1v1h-1zM602 345h2v1h-2zM594 346h1v1h-1zM598 345h2v2h-2zM601 339h1v1h-1zM592 338h2v1h-2zM603 346h1v1h-1z"/><path fill="#a89210" d="M612 347h3v2h-3zM657 359h1v1h-1zM641 347h2v2h-2zM612 336h2v2h-2zM626 341h2v2h-2zM649 355h1v1h-1zM647 360h1v2h-1zM617 349h2v2h-2zM624 348h2v2h-2zM654 355h2v1h-2zM624 349h2v2h-2zM646 360h2v2h-2zM652 350h1v1h-1zM613 340h2v2h-2zM604 343h1v2h-1zM613 347h2v2h-2zM642 346h2v1h-2zM633 350h1v2h-1zM614 338h1v2h-1zM644 349h3v2h-3zM615 347h2v1h-2zM613 348h2v2h-2zM610 346h1v2h-1zM649 359h2v1h-2zM621 350h2v1h-2zM655 355h1v1h-1zM632 350h2v3h-2zM649 359h1v1h-1zM627 344h1v1h-1zM633 351h1v1h-1zM609 345h1v2h-1zM632 351h1v2h-1zM657 360h3v2h-3zM624 339h1v1h-1zM627 344h3v2h-3zM647 349h2v3h-2zM621 341h2v2h-2zM629 344h1v2h-1zM658 359h2v2h-2zM647 361h1v1h-1zM640 353h1v1h-1zM638 356h1v1h-1zM651 352h2v1h-2zM646 348h1v1h-1zM610 345h1v1h-1zM609 345h2v2h-2zM615 337h1v1h-1zM658 361h2v2h-2zM631 349h1v1h-1zM634 356h2v1h-2zM629 353h2v1h-2zM653 357h1v1h-1zM651 359h2v1h-2zM650 352h3v2h-3zM650 361h2v1h-2zM609 341h1v1h-1zM648 353h2v2h-2zM621 338h2v3h-2zM657 353h1v1h-1zM608 340h2v1h-2zM608 337h1v1h-1zM625 345h2v2h-2zM611 340h2v3h-2zM620 342h2v1h-2zM609 337h3v2h-3zM657 359h1v2h-1zM631 343h2v3h-2zM609 339h2v1h-2zM655 356h1v1h-1zM607 340h2v2h-2zM636 345h1v1h-1zM641 359h2v1h-2zM612 346h2v1h-2zM652 350h3v2h-3zM648 353h1v1h-1zM614 338h1v1h-1zM646 358h1v1h-1zM622 352h2v2h-2zM629 351h2v1h-2zM619 339h2v2h-2z"/><polygon points="606,338 618,337 640,346 656,350 656,363 640,359 620,351 606,344" fill="#a89210" /><path fill="#fdf800" d="M643 350h1v1h-1zM634 344h1v1h-1zM645 352h1v1h-1zM610 344h1v1h-1zM641 353h1v1h-1zM615 345h2v1h-2zM650 357h1v1h-1zM606 341h2v1h-2zM624 350h1v1h-1zM617 337h1v1h-1zM607 338h2v1h-2zM633 347h2v1h-2zM647 360h1v2h-1zM607 339h1v1h-1zM641 357h2v2h-2zM650 357h2v1h-2zM618 345h1v1h-1zM643 347h1v2h-1zM624 350h1v1h-1zM632 347h1v1h-1zM649 354h1v1h-1zM643 356h1v1h-1zM639 349h1v1h-1zM649 360h1v1h-1zM643 351h1v1h-1zM636 349h1v1h-1zM639 357h2v2h-2zM611 341h1v1h-1zM640 352h2v1h-2zM629 352h1v1h-1zM644 358h1v1h-1zM620 346h1v2h-1zM615 345h1v1h-1zM630 352h1v1h-1zM631 347h2v1h-2zM615 343h2v1h-2zM633 346h2v1h-2zM655 357h1v1h-1zM629 354h1v1h-1zM636 346h1v1h-1zM625 343h1v1h-1zM655 350h1v1h-1zM655 362h2v2h-2zM618 339h2v2h-2zM625 349h1v2h-1zM655 356h1v1h-1zM626 344h1v2h-1z"/><path fill="#cc1e1e" d="M618 345h1v1h-1zM630 348h1v1h-1zM629 354h1v1h-1zM610 339h2v2h-2zM633 355h1v1h-1zM654 351h1v1h-1zM639 349h1v2h-1zM610 344h2v2h-2zM651 353h1v1h-1z"/><path fill="#c49c0e" d="M625 342h1v1h-1zM630 347h2v2h-2zM648 357h1v2h-1zM639 349h2v2h-2zM636 354h2v2h-2zM627 350h2v2h-2zM625 350h1v1h-1zM616 338h2v1h-2zM616 345h2v2h-2zM642 357h2v1h-2zM626 353h1v1h-1zM610 345h1v1h-1zM643 355h1v1h-1zM617 338h2v2h-2zM613 340h1v2h-1zM630 350h1v1h-1zM627 343h1v1h-1zM646 350h1v2h-1zM651 361h1v1h-1zM635 350h1v1h-1zM621 340h2v1h-2zM645 351h2v1h-2zM653 350h1v1h-1zM632 346h1v2h-1zM638 352h1v1h-1zM616 348h1v1h-1zM650 359h1v1h-1zM612 346h1v2h-1zM622 351h1v2h-1zM608 342h1v1h-1zM613 338h1v2h-1zM621 350h1v1h-1zM618 348h1v2h-1zM631 344h1v1h-1zM636 350h1v1h-1zM647 352h2v2h-2zM649 351h1v1h-1z"/><path fill="#a89210" d="M690 351h1v1h-1zM680 354h2v2h-2zM708 355h1v1h-1zM701 351h2v1h-2zM701 348h2v2h-2zM672 359h1v1h-1zM698 352h3v2h-3zM715 352h1v1h-1zM712 360h1v2h-1zM693 349h2v1h-2zM701 351h1v2h-1zM699 365h1v1h-1zM706 348h2v2h-2zM712 362h1v1h-1zM709 361h2v1h-2zM719 349h2v1h-2zM703 361h2v2h-2zM678 351h2v3h-2zM679 350h1v1h-1zM689 363h2v2h-2zM679 351h2v3h-2zM707 362h2v3h-2zM721 355h2v1h-2zM720 360h2v1h-2zM719 361h1v1h-1zM690 347h3v2h-3zM705 370h2v3h-2zM718 348h2v2h-2zM701 363h1v1h-1zM698 363h2v3h-2zM699 350h2v2h-2zM686 367h2v2h-2zM682 361h1v2h-1zM692 355h2v3h-2zM696 355h1v2h-1zM670 360h1v1h-1zM698 349h2v1h-2zM680 352h3v2h-3zM707 361h1v1h-1zM710 349h2v1h-2zM703 349h2v2h-2zM713 349h1v1h-1zM681 359h1v1h-1zM710 362h2v2h-2zM720 352h2v1h-2zM676 355h1v2h-1zM678 362h1v1h-1zM716 369h1v2h-1zM677 361h1v1h-1zM675 361h2v2h-2zM693 358h2v3h-2zM702 347h2v2h-2zM713 363h1v1h-1zM709 361h2v2h-2zM673 355h3v2h-3zM684 350h1v1h-1zM692 370h2v2h-2zM706 368h2v2h-2zM708 347h1v1h-1zM693 369h1v1h-1zM697 359h2v2h-2zM682 354h2v2h-2zM694 358h2v2h-2zM702 356h2v3h-2zM716 358h2v1h-2zM698 355h1v2h-1zM700 359h1v2h-1zM694 371h1v1h-1zM673 359h1v2h-1zM711 356h2v1h-2zM717 367h2v1h-2zM703 347h2v2h-2zM681 364h1v1h-1zM699 363h1v1h-1zM697 371h1v1h-1zM675 363h2v2h-2zM698 346h1v1h-1zM685 363h2v1h-2zM700 354h2v2h-2zM718 359h2v2h-2zM702 362h1v2h-1zM719 367h1v2h-1zM687 357h2v2h-2zM699 354h2v2h-2zM673 356h2v2h-2zM677 366h1v1h-1zM701 361h2v1h-2zM711 361h1v1h-1zM702 348h1v2h-1zM690 368h2v1h-2zM680 360h2v3h-2zM691 351h3v2h-3zM694 363h1v1h-1zM670 360h2v1h-2zM719 367h2v1h-2zM689 360h1v1h-1zM687 356h1v1h-1zM683 353h1v1h-1zM701 362h2v2h-2zM698 349h2v1h-2zM697 355h2v1h-2zM698 355h2v2h-2zM715 359h3v2h-3zM700 366h3v2h-3zM675 355h2v1h-2zM684 366h1v2h-1zM689 370h1v1h-1zM717 354h3v2h-3zM691 363h2v3h-2z"/><polygon points="674,350 700,347 720,350 720,368 700,372 680,367 672,360" fill="#a89210" /><path fill="#c49c0e" d="M699 359h2v1h-2zM688 355h1v1h-1zM693 368h1v2h-1zM717 352h1v1h-1zM681 362h1v2h-1zM714 350h1v1h-1zM699 368h2v1h-2zM704 369h2v2h-2zM696 357h1v1h-1zM701 358h1v1h-1zM712 354h2v2h-2zM696 352h1v1h-1zM702 354h1v1h-1zM681 356h1v1h-1zM716 368h2v2h-2zM692 360h1v1h-1zM694 352h1v1h-1zM703 365h1v2h-1zM685 349h1v1h-1zM703 357h2v1h-2zM675 350h1v1h-1zM702 351h2v2h-2zM680 359h2v1h-2zM695 361h1v2h-1zM691 353h1v1h-1zM708 348h1v1h-1zM701 361h1v1h-1zM681 364h2v2h-2zM715 367h1v2h-1zM681 352h1v1h-1zM705 353h1v1h-1zM701 369h1v2h-1zM690 356h1v2h-1zM698 348h1v1h-1zM707 368h1v1h-1zM695 355h1v1h-1zM711 368h2v1h-2zM711 359h2v1h-2zM701 366h1v1h-1zM718 362h1v2h-1zM685 362h1v1h-1zM691 355h2v2h-2zM674 361h2v2h-2zM703 349h1v1h-1zM677 362h2v1h-2zM694 362h2v1h-2zM700 353h1v2h-1zM709 365h1v1h-1zM710 354h1v2h-1zM703 358h1v1h-1zM686 361h1v2h-1zM703 358h2v1h-2zM687 360h1v2h-1zM690 357h1v1h-1zM682 350h1v2h-1zM695 361h1v1h-1zM697 350h1v1h-1zM702 370h2v2h-2zM680 352h2v1h-2zM708 366h1v1h-1zM715 364h2v1h-2zM678 361h1v1h-1zM704 355h1v2h-1zM682 349h1v2h-1zM712 367h1v1h-1zM715 364h1v2h-1z"/><path fill="#cc1e1e" d="M683 360h1v1h-1zM688 362h1v2h-1zM704 363h1v1h-1zM706 357h2v1h-2zM685 351h2v1h-2zM682 364h1v1h-1zM681 356h2v1h-2zM699 360h2v1h-2zM707 348h1v1h-1zM689 355h1v1h-1zM685 361h2v1h-2zM704 366h1v1h-1zM709 357h2v1h-2z"/><path fill="#fdf800" d="M684 353h2v2h-2zM692 365h1v1h-1zM674 350h1v1h-1zM698 355h1v1h-1zM706 361h2v1h-2zM692 360h1v1h-1zM704 355h1v1h-1zM696 349h1v1h-1zM677 359h2v1h-2zM680 351h1v1h-1zM681 350h1v1h-1zM691 366h1v1h-1zM712 367h2v2h-2zM701 370h1v2h-1zM703 363h1v1h-1zM690 369h1v2h-1zM710 356h1v1h-1zM711 365h1v2h-1zM700 347h1v2h-1zM713 359h1v1h-1zM715 359h2v1h-2zM677 363h2v1h-2zM718 354h1v1h-1zM698 353h1v1h-1zM698 347h1v2h-1zM686 366h2v1h-2zM677 353h2v1h-2zM687 365h1v2h-1zM706 365h2v1h-2zM682 354h1v1h-1zM696 359h1v1h-1zM714 355h2v1h-2zM675 362h1v2h-1zM700 366h2v1h-2zM686 352h1v2h-1zM719 358h2v1h-2zM696 354h1v1h-1zM678 363h1v1h-1zM688 361h2v1h-2zM707 351h1v1h-1zM711 354h1v1h-1zM707 366h1v2h-1zM689 368h1v1h-1zM702 363h1v1h-1zM691 350h1v1h-1zM684 364h1v1h-1zM690 363h1v1h-1zM712 363h1v2h-1zM693 357h1v2h-1zM692 356h1v1h-1zM687 352h2v2h-2zM675 358h1v1h-1zM702 354h1v1h-1zM703 358h1v1h-1zM705 356h2v2h-2zM697 363h1v1h-1zM699 352h1v1h-1zM718 358h2v2h-2zM715 364h2v2h-2zM676 352h1v1h-1zM685 351h1v1h-1zM699 357h2v1h-2zM687 365h2v1h-2zM706 360h1v2h-1zM679 353h1v1h-1zM700 368h2v1h-2zM679 360h2v1h-2zM704 350h2v1h-2zM700 367h2v1h-2zM714 366h1v1h-1zM684 358h1v2h-1zM677 355h1v1h-1zM692 356h1v2h-1zM685 358h1v1h-1zM713 358h1v1h-1zM700 357h1v1h-1zM718 365h2v2h-2zM695 356h2v1h-2zM718 356h2v1h-2zM690 364h1v1h-1zM696 352h1v2h-1zM681 362h1v1h-1zM716 364h1v1h-1zM683 362h1v1h-1zM683 353h1v2h-1zM689 348h1v1h-1zM687 368h1v1h-1z"/><path fill="#3cf05a" d="M656 318h2v2h-2zM660 330h1v1h-1zM648 340h1v1h-1zM689 340h1v2h-1zM702 324h2v1h-2zM674 327h2v2h-2zM695 333h1v2h-1zM675 329h1v1h-1zM703 320h1v2h-1zM675 329h2v2h-2z"/><path fill="#a89210" d="M698 333h1v1h-1zM696 326h2v1h-2zM664 333h3v2h-3zM654 326h2v3h-2zM686 331h2v2h-2zM710 332h2v2h-2zM717 333h2v2h-2zM695 331h1v1h-1zM701 323h1v1h-1zM638 337h2v2h-2zM648 337h3v2h-3zM654 335h1v1h-1zM707 318h2v2h-2zM674 333h2v2h-2zM683 341h2v1h-2zM698 321h1v1h-1zM687 322h1v1h-1zM712 328h1v1h-1zM703 334h2v2h-2zM720 331h2v2h-2zM699 323h2v2h-2zM720 326h1v2h-1zM707 333h3v2h-3zM665 317h1v2h-1zM637 325h1v2h-1zM689 339h1v2h-1zM630 333h2v2h-2z"/><path fill="#0e7a2a" d="M656 331h2v1h-2zM706 329h1v1h-1zM632 336h2v1h-2zM670 320h2v1h-2zM630 336h2v1h-2zM714 318h1v2h-1zM642 337h1v2h-1zM642 323h3v2h-3zM718 338h2v3h-2zM671 339h1v2h-1zM705 316h1v2h-1zM691 331h1v1h-1zM702 316h2v1h-2zM687 321h3v2h-3zM678 328h3v2h-3zM716 325h2v3h-2zM651 327h2v1h-2zM631 322h2v2h-2zM680 317h2v2h-2zM663 338h1v1h-1zM713 325h2v3h-2zM630 337h2v2h-2zM704 342h1v2h-1zM715 321h2v1h-2zM642 326h1v1h-1zM633 333h1v2h-1zM688 324h1v2h-1zM632 337h2v2h-2zM675 331h2v1h-2zM674 319h2v1h-2zM709 329h3v2h-3zM655 340h2v2h-2zM638 332h3v2h-3zM713 323h2v1h-2zM666 323h1v1h-1zM659 330h1v2h-1zM675 333h1v1h-1zM676 318h2v2h-2zM691 330h2v1h-2zM696 330h1v1h-1zM692 323h2v2h-2zM632 337h1v1h-1zM712 330h1v1h-1zM652 330h2v2h-2zM632 328h1v1h-1zM632 332h1v1h-1zM652 321h2v2h-2zM687 319h2v3h-2zM639 320h1v2h-1zM708 340h2v2h-2zM691 327h2v1h-2zM643 329h1v2h-1z"/><path fill="#c49c0e" d="M679 356h2v2h-2zM669 351h2v3h-2zM672 368h2v1h-2zM678 335h1v2h-1zM670 343h3v2h-3zM658 358h2v1h-2zM664 358h2v2h-2zM665 339h2v2h-2zM666 350h2v1h-2zM658 342h1v1h-1zM659 352h1v2h-1zM672 349h2v3h-2zM659 366h1v1h-1zM663 335h1v2h-1zM668 334h1v1h-1zM677 362h2v2h-2zM664 361h1v2h-1zM675 335h1v2h-1zM680 338h3v2h-3zM664 341h1v2h-1zM680 344h1v2h-1zM652 351h2v3h-2zM674 363h2v1h-2zM678 355h2v2h-2zM670 351h1v1h-1zM679 362h1v1h-1zM650 342h2v1h-2zM670 360h1v2h-1zM676 361h1v2h-1zM678 340h1v2h-1zM651 345h1v1h-1zM675 363h2v3h-2zM682 351h2v2h-2zM681 345h2v2h-2zM666 332h2v2h-2zM675 367h2v1h-2zM673 328h2v2h-2zM679 346h2v1h-2zM678 362h1v2h-1zM662 334h1v2h-1zM659 347h1v2h-1zM673 353h3v2h-3zM670 346h2v1h-2zM661 343h2v3h-2zM658 332h2v1h-2zM669 330h1v2h-1zM667 346h2v3h-2zM668 352h3v2h-3zM673 344h2v2h-2zM665 362h1v1h-1zM661 328h3v2h-3zM650 360h1v1h-1zM672 351h2v1h-2zM664 349h1v1h-1zM678 346h1v2h-1zM665 337h1v2h-1zM677 337h1v1h-1zM669 357h1v1h-1zM646 347h2v1h-2zM663 363h1v1h-1zM672 351h1v2h-1zM663 365h2v1h-2zM668 369h2v2h-2zM675 342h2v3h-2zM673 361h1v2h-1zM660 346h3v2h-3zM661 333h3v2h-3zM674 338h2v1h-2zM649 337h1v2h-1zM669 364h1v1h-1zM672 360h2v2h-2zM650 347h1v2h-1zM658 330h2v3h-2zM668 326h2v2h-2zM676 363h1v2h-1zM676 351h2v1h-2zM656 342h2v2h-2zM651 362h1v2h-1zM671 348h1v2h-1zM665 354h2v1h-2zM670 327h2v3h-2zM678 344h2v2h-2zM669 361h2v2h-2zM675 341h2v1h-2zM665 368h1v1h-1zM659 334h1v1h-1zM651 361h2v1h-2zM662 348h2v2h-2zM648 341h1v1h-1zM665 344h2v2h-2zM654 344h1v2h-1zM666 357h3v2h-3zM656 365h1v1h-1zM664 355h1v1h-1zM650 349h2v2h-2zM651 348h2v1h-2zM668 330h1v2h-1zM679 342h1v1h-1zM660 329h1v1h-1zM651 351h1v1h-1zM655 334h2v1h-2zM681 348h2v3h-2zM676 364h2v2h-2zM662 355h2v1h-2zM652 360h1v1h-1zM675 363h1v1h-1zM679 339h3v2h-3zM649 355h1v2h-1zM674 352h2v1h-2zM659 339h2v1h-2zM659 332h2v2h-2zM669 348h3v2h-3zM670 327h3v2h-3zM651 346h1v1h-1zM678 356h1v2h-1zM651 359h1v1h-1zM663 352h2v2h-2zM671 346h1v2h-1zM667 341h2v2h-2zM676 336h1v1h-1zM648 341h2v1h-2z"/><polygon points="652,338 662,332 670,330 678,338 680,352 676,364 664,366 654,360 650,348" fill="#c49c0e" /><path fill="#fdf800" d="M675 349h1v2h-1zM666 344h1v1h-1zM670 356h1v2h-1zM678 347h1v2h-1zM666 352h1v1h-1zM675 359h1v1h-1zM659 362h1v1h-1zM673 344h1v2h-1zM667 339h1v1h-1zM670 346h1v1h-1zM671 346h1v1h-1zM670 361h1v1h-1zM652 350h1v1h-1zM663 349h1v1h-1zM665 349h1v1h-1zM671 353h1v2h-1zM669 361h1v2h-1z"/><path fill="#a89210" d="M654 357h1v1h-1zM650 346h1v1h-1zM669 337h1v1h-1zM656 338h1v1h-1zM669 356h1v1h-1zM665 331h2v1h-2zM657 350h2v1h-2zM652 338h1v1h-1zM658 336h1v1h-1zM668 357h1v1h-1zM667 339h1v1h-1zM672 357h2v1h-2zM665 339h2v1h-2zM655 350h2v1h-2zM666 360h2v2h-2zM655 346h1v1h-1zM676 348h1v1h-1zM675 359h1v1h-1zM655 345h2v2h-2zM678 351h2v2h-2zM659 355h2v2h-2zM669 360h2v2h-2zM666 343h1v2h-1zM654 350h1v1h-1zM667 362h1v1h-1zM655 349h1v1h-1zM658 351h1v1h-1zM666 364h2v2h-2zM655 359h1v2h-1zM659 347h2v1h-2zM667 357h2v1h-2zM664 357h1v2h-1zM672 353h2v1h-2z"/><path fill="#ffffff" d="M672 351h1v1h-1zM665 331h1v1h-1zM659 333h1v1h-1z"/><path fill="#cc1e1e" d="M601 365h2v1h-2zM610 368h2v2h-2zM618 356h1v1h-1zM608 365h1v1h-1zM620 355h2v3h-2zM626 366h1v1h-1zM613 357h2v2h-2zM624 371h2v1h-2zM616 366h2v2h-2zM598 361h2v1h-2zM615 368h1v2h-1zM623 369h1v1h-1zM608 360h2v2h-2zM606 365h1v1h-1zM611 351h2v1h-2zM595 350h1v2h-1zM620 361h1v1h-1zM621 374h1v1h-1zM621 365h1v2h-1zM620 357h1v2h-1zM617 366h3v2h-3zM617 369h2v3h-2zM611 355h2v2h-2zM609 359h1v1h-1zM609 351h3v2h-3zM602 366h2v1h-2zM618 366h2v2h-2zM623 363h2v3h-2zM622 363h3v2h-3zM608 361h2v1h-2zM604 354h2v2h-2zM626 358h2v2h-2zM621 369h2v1h-2zM604 359h1v2h-1zM598 364h1v2h-1zM613 361h1v2h-1zM603 356h1v1h-1zM623 371h1v1h-1zM608 369h2v1h-2zM598 366h2v1h-2zM598 362h1v1h-1zM610 372h1v2h-1zM607 374h2v3h-2zM613 364h2v1h-2zM598 365h1v2h-1zM622 354h2v2h-2zM600 354h1v2h-1zM603 352h1v1h-1zM622 372h1v2h-1zM604 352h1v2h-1zM608 360h3v2h-3zM605 364h3v2h-3zM605 360h2v2h-2zM618 371h3v2h-3zM611 372h2v2h-2zM607 365h2v1h-2zM604 358h2v2h-2zM609 367h1v2h-1zM610 361h2v2h-2zM620 365h1v1h-1zM614 354h1v1h-1zM626 362h1v1h-1zM605 370h1v1h-1zM599 361h2v3h-2zM615 373h2v1h-2zM618 359h1v1h-1zM620 354h2v2h-2zM618 355h2v2h-2z"/><polygon points="597,352 625,354 625,372 612,376 600,370" fill="#cc1e1e" /><path fill="#f08060" d="M601 366h1v1h-1zM597 353h1v1h-1zM603 364h1v1h-1zM622 371h2v2h-2zM623 366h2v1h-2zM598 359h1v1h-1zM624 357h1v1h-1zM621 354h1v1h-1zM621 365h1v1h-1zM602 355h1v1h-1zM607 370h2v2h-2zM623 355h1v1h-1zM609 360h1v1h-1zM604 366h1v1h-1zM611 366h1v1h-1zM605 359h2v1h-2zM605 365h2v1h-2zM616 369h1v2h-1zM601 361h2v1h-2zM619 358h2v1h-2zM624 359h1v1h-1zM616 363h1v1h-1z"/><path fill="#cfae7d" d="M624 356h1v2h-1zM617 357h2v1h-2zM612 359h2v2h-2zM603 361h2v1h-2zM617 373h1v2h-1zM617 354h1v2h-1zM615 359h1v2h-1zM620 372h2v2h-2zM623 371h1v1h-1zM615 373h1v1h-1zM607 373h1v2h-1zM613 371h1v2h-1zM612 358h2v2h-2zM611 360h1v1h-1zM608 365h1v1h-1zM614 368h1v1h-1zM618 357h1v1h-1zM607 372h1v1h-1zM614 363h2v1h-2zM608 363h2v1h-2zM618 367h1v2h-1z"/><path fill="#ffffff" d="M605 360h2v1h-2zM617 368h1v2h-1zM621 358h1v2h-1zM616 360h1v1h-1zM604 360h1v1h-1zM614 364h1v2h-1zM607 370h1v2h-1zM617 353h2v1h-2z"/><path fill="#1878c8" d="M616 373h2v1h-2zM616 364h1v1h-1zM605 354h1v2h-1zM600 366h2v1h-2zM615 362h2v1h-2zM614 355h1v2h-1z"/><path fill="#cc1e1e" d="M643 364h2v1h-2zM624 362h1v2h-1zM640 366h2v2h-2zM650 366h1v1h-1zM620 364h1v1h-1zM625 365h3v2h-3zM622 362h2v3h-2zM636 363h1v1h-1zM644 363h1v2h-1zM625 360h1v2h-1zM643 366h3v2h-3zM619 359h1v1h-1zM639 363h2v2h-2zM639 363h1v2h-1zM639 360h1v1h-1zM646 362h2v2h-2zM637 366h1v1h-1zM642 366h2v3h-2zM619 361h2v1h-2zM638 360h1v2h-1zM652 364h2v2h-2zM629 364h2v2h-2zM628 362h2v3h-2zM646 361h1v1h-1zM619 365h2v2h-2zM636 364h1v1h-1zM635 362h2v2h-2zM645 361h2v2h-2zM621 361h1v1h-1z"/><polygon points="620,359 654,360 654,367 621,366" fill="#cc1e1e" /><path fill="#f24a1e" d="M622 360h1v1h-1zM626 361h1v1h-1zM635 361h1v2h-1zM646 361h1v1h-1zM640 366h1v1h-1zM638 362h1v2h-1zM650 361h1v1h-1zM640 365h1v1h-1zM644 362h1v1h-1zM632 362h2v1h-2zM624 362h1v1h-1zM632 359h1v1h-1zM625 359h2v2h-2zM645 364h1v1h-1zM634 363h1v1h-1zM624 364h2v1h-2zM640 363h2v1h-2zM647 360h2v2h-2zM633 364h2v1h-2zM650 364h1v1h-1z"/><path fill="#a89210" d="M639 361h1v2h-1zM632 362h1v2h-1zM637 360h1v1h-1zM625 364h2v1h-2zM643 363h2v1h-2zM622 364h1v1h-1zM651 362h1v1h-1zM621 364h1v1h-1zM623 362h1v1h-1zM637 365h2v2h-2zM641 361h1v1h-1zM621 361h1v1h-1zM628 359h2v1h-2z"/><path fill="#cc1e1e" d="M663 360h1v2h-1zM687 367h1v1h-1zM669 367h3v2h-3zM681 363h1v2h-1zM668 364h2v1h-2zM683 367h2v2h-2zM659 364h1v2h-1zM687 365h1v2h-1zM659 361h3v2h-3zM686 368h1v1h-1zM673 364h2v2h-2zM673 359h2v2h-2zM680 364h2v2h-2zM659 359h2v2h-2zM672 366h1v1h-1zM670 365h2v1h-2zM665 361h3v2h-3zM676 360h2v2h-2zM665 364h2v3h-2zM663 365h2v1h-2zM668 361h2v2h-2zM680 365h2v3h-2zM684 362h1v1h-1z"/><polygon points="657,359 687,360 686,369 658,368" fill="#cc1e1e" /><path fill="#a89210" d="M682 361h2v1h-2zM676 364h1v1h-1zM657 360h1v2h-1zM663 367h1v1h-1zM662 362h2v1h-2zM683 368h1v1h-1zM683 366h1v1h-1zM662 364h2v1h-2zM668 362h1v2h-1zM660 359h1v1h-1zM669 364h1v1h-1zM667 361h1v2h-1zM663 359h1v1h-1zM674 363h1v2h-1zM657 359h1v1h-1zM657 359h2v1h-2zM676 365h1v1h-1z"/><path fill="#f0a0c0" d="M672 362h1v1h-1zM685 368h1v2h-1zM670 361h1v1h-1zM683 367h2v1h-2zM676 364h1v2h-1zM671 359h2v1h-2zM664 363h2v1h-2zM675 367h2v2h-2zM684 364h2v1h-2z"/><path fill="#1878c8" d="M685 364h1v1h-1zM671 362h1v1h-1zM678 360h1v1h-1zM658 362h2v1h-2zM661 362h1v1h-1zM680 365h1v1h-1zM681 368h1v2h-1zM671 362h1v2h-1zM660 364h1v1h-1zM683 361h1v1h-1z"/><path fill="#cc1e1e" d="M717 356h2v2h-2zM701 368h2v1h-2zM697 364h2v2h-2zM703 357h1v2h-1zM709 360h2v2h-2zM718 354h1v1h-1zM711 371h3v2h-3zM709 367h2v2h-2zM708 358h2v1h-2zM716 360h2v2h-2zM705 359h1v2h-1zM716 355h1v2h-1zM697 351h1v2h-1zM712 370h1v1h-1zM698 359h2v1h-2zM717 356h2v2h-2zM700 361h1v1h-1zM717 353h2v1h-2zM702 359h1v2h-1zM705 352h2v2h-2zM706 365h2v2h-2zM695 367h2v1h-2zM695 355h1v1h-1zM703 351h1v1h-1zM714 370h2v2h-2zM699 363h2v2h-2zM718 366h2v2h-2zM694 351h2v1h-2zM707 352h3v2h-3zM712 358h1v1h-1zM705 366h1v1h-1zM707 362h1v1h-1zM717 369h2v1h-2zM695 362h1v1h-1zM700 365h3v2h-3zM713 357h1v1h-1zM704 362h2v3h-2zM717 354h1v1h-1zM717 353h2v3h-2zM711 367h3v2h-3zM713 366h3v2h-3zM710 363h1v1h-1zM703 363h2v3h-2zM694 354h1v1h-1zM711 368h2v2h-2zM706 359h1v2h-1zM703 363h2v2h-2zM705 358h3v2h-3z"/><polygon points="695,352 718,353 719,371 696,372" fill="#cc1e1e" /><path fill="#cfae7d" d="M701 361h1v1h-1zM703 353h1v2h-1zM708 367h1v2h-1zM699 358h1v1h-1zM713 368h1v1h-1zM702 352h1v1h-1zM704 353h1v1h-1zM714 369h1v2h-1zM701 360h2v1h-2zM710 357h1v1h-1zM702 362h1v2h-1zM699 354h2v1h-2zM698 365h1v1h-1zM713 359h2v1h-2zM707 357h1v1h-1zM696 355h1v1h-1zM703 364h1v1h-1zM705 366h1v1h-1zM715 364h2v1h-2zM706 371h2v1h-2zM701 359h1v1h-1zM710 353h1v1h-1zM712 362h1v1h-1zM695 361h1v2h-1zM712 363h2v1h-2zM711 369h1v1h-1zM702 362h1v1h-1z"/><path fill="#12d0d8" d="M712 362h1v1h-1zM704 364h1v1h-1zM711 370h2v1h-2zM713 364h1v2h-1zM709 362h1v1h-1zM714 370h2v2h-2zM709 355h1v1h-1zM702 361h1v1h-1zM700 353h2v2h-2zM714 354h2v1h-2zM700 362h1v1h-1zM713 354h1v1h-1zM712 359h1v1h-1z"/><path fill="#1878c8" d="M697 369h2v2h-2zM717 357h1v1h-1zM695 359h1v1h-1zM706 371h2v2h-2zM713 370h2v1h-2zM717 365h1v2h-1zM704 355h1v2h-1z"/><path fill="#a89210" d="M707 366h1v1h-1zM695 353h1v1h-1zM706 360h2v1h-2zM696 367h1v2h-1zM717 369h1v1h-1zM700 370h2v1h-2zM704 352h2v1h-2zM702 359h1v1h-1zM710 367h1v1h-1zM696 359h1v1h-1zM705 352h1v1h-1zM697 359h2v2h-2zM698 355h2v1h-2zM704 357h1v1h-1zM704 365h1v1h-1zM700 352h1v1h-1zM716 353h1v2h-1zM700 353h1v1h-1zM702 356h1v1h-1zM706 355h1v1h-1zM709 359h1v1h-1zM698 370h1v1h-1zM714 362h1v1h-1zM699 358h1v1h-1zM717 354h2v2h-2z"/><polygon points="660,365 666,365 666,371 660,371" fill="#f0a0c0" /><polygon points="672,366 677,366 677,370 672,370" fill="#1878c8" /><polygon points="618,378 626,378 627,390 619,390" fill="#a89210" /><polygon points="646,377 656,377 656,385 646,385" fill="#d04060" /><polygon points="682,377 690,376 690,385 682,385" fill="#cfae7d" /><path fill="#0e7a2a" d="M700 323h1v2h-1zM699 330h1v1h-1zM703 332h2v1h-2zM697 333h3v2h-3zM695 324h2v3h-2zM697 324h1v1h-1zM688 329h1v1h-1zM705 321h2v2h-2zM705 321h1v2h-1zM698 327h2v2h-2zM695 329h1v1h-1zM702 327h2v2h-2zM691 322h2v2h-2zM702 324h2v1h-2zM700 324h2v2h-2zM697 322h1v2h-1zM702 332h2v1h-2zM700 332h1v1h-1zM688 320h3v2h-3zM697 327h2v2h-2zM698 325h2v2h-2zM705 333h2v2h-2zM691 331h2v2h-2zM647 317h2v2h-2zM645 323h1v1h-1zM640 318h3v2h-3zM646 315h1v2h-1zM639 322h2v1h-2zM646 317h3v2h-3zM632 325h2v1h-2zM634 313h2v2h-2zM648 316h2v1h-2zM640 314h2v1h-2zM639 321h2v2h-2zM635 322h2v2h-2zM635 315h2v1h-2zM649 322h3v2h-3zM637 323h1v1h-1zM643 324h3v2h-3zM641 323h2v1h-2z"/><path fill="#cfae7d" d="M479 355h1v1h-1zM489 356h1v1h-1zM485 363h1v1h-1zM461 367h3v2h-3zM479 378h3v2h-3zM460 369h1v1h-1zM475 362h1v2h-1zM481 387h2v2h-2zM484 389h3v2h-3zM472 370h1v2h-1zM485 385h2v2h-2zM478 368h1v1h-1zM480 379h1v2h-1zM456 352h1v1h-1zM461 359h2v3h-2zM497 365h2v1h-2zM455 359h1v1h-1zM495 372h1v1h-1zM483 389h2v2h-2zM498 369h1v2h-1zM468 383h2v2h-2zM469 354h1v2h-1zM471 360h2v2h-2zM475 363h1v2h-1zM476 363h2v2h-2zM480 378h2v2h-2zM493 367h2v2h-2zM483 379h1v2h-1zM470 357h2v2h-2zM493 362h3v2h-3zM476 361h3v2h-3zM475 355h1v1h-1zM478 386h1v2h-1zM482 370h3v2h-3zM495 367h3v2h-3zM475 354h1v2h-1zM483 362h2v2h-2zM468 354h1v1h-1zM496 380h2v2h-2zM459 351h2v1h-2zM481 357h2v2h-2zM487 388h2v3h-2zM498 372h2v1h-2zM483 366h1v2h-1zM485 386h2v1h-2zM488 371h1v1h-1zM493 373h2v2h-2zM496 364h2v1h-2zM466 371h2v1h-2zM471 375h1v2h-1zM452 362h2v3h-2zM462 359h2v2h-2zM489 370h3v2h-3zM471 381h1v1h-1zM460 371h2v1h-2zM486 376h2v3h-2zM448 355h3v2h-3zM481 387h2v2h-2zM469 352h3v2h-3zM491 360h2v2h-2zM487 356h2v2h-2zM497 368h2v2h-2zM449 351h2v2h-2zM499 374h2v1h-2zM488 376h2v1h-2zM477 381h1v1h-1zM469 376h1v2h-1zM459 349h2v1h-2zM462 359h2v2h-2zM466 373h2v2h-2zM459 374h2v3h-2zM463 365h2v2h-2zM491 367h2v2h-2zM460 376h1v2h-1zM489 372h1v2h-1zM480 375h2v2h-2zM487 374h1v1h-1zM498 364h1v2h-1zM488 382h1v1h-1zM479 376h2v1h-2zM456 353h1v2h-1zM466 353h1v2h-1zM457 366h2v1h-2zM496 379h2v2h-2zM477 359h2v3h-2zM465 362h3v2h-3zM465 372h2v2h-2zM490 378h1v2h-1zM470 372h1v1h-1zM484 375h1v2h-1zM485 377h1v1h-1zM474 365h2v3h-2zM458 353h1v2h-1zM475 368h2v2h-2zM485 390h1v1h-1zM482 369h1v1h-1zM483 381h2v1h-2zM485 361h2v2h-2zM485 361h2v1h-2zM473 353h2v1h-2zM488 377h2v1h-2zM488 390h2v2h-2zM464 350h1v1h-1zM481 372h2v2h-2zM454 355h2v3h-2zM476 361h1v2h-1zM489 387h2v2h-2zM470 357h1v1h-1zM487 365h2v2h-2zM478 362h1v1h-1zM490 372h3v2h-3zM465 370h3v2h-3zM478 384h1v1h-1zM499 373h2v2h-2zM466 366h1v1h-1zM455 348h2v3h-2zM472 360h2v2h-2zM499 380h1v2h-1zM458 353h1v1h-1zM487 387h1v1h-1zM449 356h1v2h-1zM469 364h2v2h-2zM471 373h1v2h-1zM462 376h1v1h-1zM481 378h2v2h-2zM485 387h2v3h-2zM470 360h2v1h-2zM458 374h2v2h-2zM456 369h1v2h-1zM479 369h2v2h-2zM474 355h1v2h-1zM487 364h1v1h-1zM487 390h2v2h-2zM467 353h2v1h-2zM475 387h2v2h-2zM477 378h2v2h-2zM471 357h2v2h-2zM485 391h2v3h-2zM492 378h2v2h-2zM469 357h2v1h-2zM500 366h1v2h-1zM492 385h2v2h-2zM496 379h2v1h-2zM483 389h2v2h-2zM470 374h2v2h-2zM484 356h1v1h-1zM488 366h1v1h-1zM464 365h1v2h-1zM466 372h2v2h-2zM498 363h1v1h-1zM465 378h1v1h-1z"/><polygon points="452.2,347.7 479,355 488,356.6 497,362 503,372 497,384 488,392 475,386.8 459.5,377 456.3,370.5 449.8,357.5" fill="#cfae7d" /><path fill="#0e7a2a" d="M474 385h2v1h-2zM472 365h1v1h-1zM470 361h1v2h-1zM474 378h2v1h-2zM483 362h2v1h-2zM481 361h1v1h-1zM458 365h2v1h-2zM464 365h1v1h-1zM463 369h1v1h-1zM492 364h1v1h-1zM483 372h1v1h-1zM471 378h2v2h-2zM473 383h1v1h-1zM486 386h1v1h-1zM499 374h1v1h-1zM472 358h1v1h-1zM500 376h1v1h-1zM488 384h1v2h-1zM501 374h2v1h-2zM489 368h1v1h-1z"/><path fill="#ffffff" d="M463 365h1v1h-1zM482 373h1v1h-1zM457 366h1v1h-1zM465 359h1v1h-1z"/><path fill="#d9829b" d="M486 373h1v1h-1zM462 371h2v1h-2zM453 355h1v1h-1zM472 371h1v1h-1zM478 376h1v2h-1zM483 361h1v1h-1zM474 364h1v2h-1zM475 366h1v1h-1zM496 371h2v1h-2zM482 366h1v1h-1zM501 373h1v1h-1zM477 360h2v2h-2zM456 358h1v2h-1zM463 360h2v1h-2zM497 369h1v1h-1z"/><path fill="#8a4a2c" d="M467 370h2v1h-2zM479 385h1v1h-1zM457 353h1v1h-1zM497 379h1v1h-1zM483 360h1v1h-1zM461 371h1v1h-1zM457 358h1v1h-1zM479 368h1v2h-1zM484 359h1v2h-1zM498 369h1v2h-1zM488 379h1v2h-1zM472 364h1v1h-1zM491 385h2v2h-2zM481 378h1v1h-1zM498 378h1v1h-1zM465 365h1v1h-1zM454 358h1v1h-1zM457 372h1v1h-1zM459 368h2v1h-2z"/><path fill="#fdf800" d="M499 367h1v1h-1zM453 356h2v1h-2zM478 361h2v1h-2zM476 384h1v1h-1zM472 376h1v1h-1zM471 363h1v2h-1zM471 354h1v1h-1zM461 369h1v1h-1zM490 372h2v2h-2zM481 372h1v2h-1zM487 390h1v1h-1zM452 349h2v1h-2zM486 385h1v2h-1zM458 362h2v1h-2zM486 375h1v1h-1zM475 379h1v1h-1zM485 377h2v1h-2zM499 374h1v1h-1zM483 362h1v1h-1zM496 369h2v2h-2zM461 366h2v2h-2zM482 373h1v1h-1zM453 349h1v1h-1zM497 379h1v1h-1zM485 364h2v1h-2zM480 388h2v1h-2zM468 381h1v1h-1zM471 377h1v1h-1zM486 379h1v1h-1zM480 375h1v2h-1zM455 354h1v1h-1z"/><path fill="#12d0d8" d="M480 380h1v2h-1zM455 367h1v2h-1z"/><polygon points="488,357 511,356 512,362 497,363" fill="#cfae7d" /><polygon points="490,345 501,345 502,355 491,356" fill="#cc1e1e" /><polygon points="519.5,353.5 537.8,353 537.8,357.4 521,358" fill="#c88a78" /><polygon points="524.8,343 535.2,342.4 537.8,354.8 528,356 524,350.8" fill="#cc1e1e" /><polygon points="466,372 477,372 478,380 467,380" fill="#cc1e1e" /><polygon points="467,363 479,363 479,368 467,368" fill="#8a4a2c" /><polygon points="458,368 465,368 466,378 459,378" fill="#8a4a2c" /><polygon points="482,384 493,384 493,390 483,390" fill="#8a4a2c" /><polygon points="488,363 494,363 495,376 489,376" fill="#8a4a2c" /><path fill="#d9829b" d="M509 378h3v2h-3zM506 388h2v2h-2zM502 384h2v2h-2zM495 384h1v2h-1zM508 376h1v1h-1zM505 364h1v1h-1zM506 369h1v2h-1zM496 369h2v2h-2zM498 389h1v1h-1zM505 389h2v3h-2zM510 390h2v2h-2zM501 371h2v1h-2zM496 376h1v2h-1zM497 383h2v1h-2zM498 386h1v2h-1zM494 375h1v1h-1zM506 391h2v3h-2zM499 387h2v1h-2zM509 383h1v2h-1zM494 378h1v1h-1zM500 381h1v2h-1zM506 371h1v2h-1zM506 367h2v2h-2zM501 392h2v3h-2zM493 380h2v1h-2zM506 364h1v1h-1zM495 370h2v2h-2zM501 382h1v2h-1zM504 381h2v2h-2zM507 379h2v1h-2zM508 379h1v1h-1zM505 387h1v1h-1zM503 388h2v1h-2zM498 372h1v1h-1zM496 380h1v2h-1zM504 380h1v1h-1zM507 369h3v2h-3zM503 381h1v2h-1zM495 378h1v1h-1zM495 363h2v3h-2zM501 377h2v3h-2zM496 382h2v2h-2zM507 379h1v1h-1zM501 370h2v3h-2zM506 373h1v1h-1z"/><polygon points="493,364 506,364 511,376 510,390 497,392 494,380" fill="#d9829b" /><path fill="#fdf800" d="M499 377h1v1h-1zM506 382h2v1h-2zM493 370h1v1h-1zM497 370h1v1h-1zM498 365h1v2h-1zM495 373h1v1h-1zM507 386h1v2h-1zM501 389h1v2h-1zM502 382h2v1h-2zM509 374h1v2h-1zM498 377h1v1h-1zM500 366h2v1h-2zM495 371h1v1h-1zM497 368h1v1h-1zM503 380h1v1h-1zM497 389h1v1h-1zM502 385h2v1h-2zM502 385h1v1h-1zM505 378h1v1h-1zM504 373h2v1h-2zM494 379h1v1h-1zM496 368h1v1h-1zM501 389h1v2h-1zM493 369h1v1h-1zM501 384h1v1h-1z"/><path fill="#8a4a2c" d="M502 371h1v2h-1zM499 367h2v2h-2zM498 384h1v1h-1zM504 382h2v1h-2zM496 381h1v2h-1zM509 375h2v1h-2zM506 371h2v2h-2zM501 384h1v1h-1zM504 388h2v1h-2zM503 388h1v1h-1zM498 370h2v2h-2zM495 366h1v1h-1zM499 377h1v1h-1zM496 388h1v1h-1zM508 380h1v1h-1zM505 380h1v1h-1zM499 387h1v1h-1z"/><path fill="#cfae7d" d="M495 367h1v1h-1zM509 375h1v1h-1zM509 378h1v1h-1zM501 384h1v1h-1zM503 366h1v1h-1zM502 385h1v1h-1zM499 381h1v1h-1zM508 385h2v1h-2zM504 384h1v1h-1zM498 368h1v1h-1zM509 389h2v1h-2zM509 373h1v1h-1zM504 388h1v1h-1zM496 373h1v1h-1z"/><path fill="#d9829b" d="M483 398h1v1h-1zM487 397h2v1h-2zM483 402h1v1h-1zM479 395h1v1h-1zM481 392h2v2h-2zM486 393h2v3h-2zM488 392h2v1h-2zM483 401h1v1h-1zM470 402h2v2h-2zM480 397h2v2h-2zM487 400h2v2h-2zM485 393h1v1h-1zM478 392h2v2h-2zM486 395h1v1h-1zM477 397h2v3h-2zM477 402h1v2h-1zM489 397h3v2h-3zM472 399h1v2h-1zM478 390h2v3h-2zM478 397h1v1h-1zM484 400h2v1h-2zM476 397h2v1h-2zM476 399h2v1h-2z"/><polygon points="470,403.9 475,388 488,392 490,402" fill="#d9829b" /><path fill="#8a4a2c" d="M480 399h1v1h-1zM484 391h1v2h-1zM485 401h2v1h-2zM475 388h2v2h-2zM475 392h1v1h-1zM482 396h1v1h-1zM473 402h2v2h-2zM477 398h1v2h-1zM488 396h1v2h-1zM487 398h1v2h-1zM477 402h2v2h-2z"/><path fill="#fdf800" d="M482 400h2v1h-2zM474 391h1v1h-1zM483 400h1v1h-1zM483 397h1v1h-1z"/><polygon points="491.3,401.4 502.7,401.4 497.8,416 494.6,416" fill="#d9829b" /><polygon points="516,404 540,406 541,414 521,416 516.5,411.2" fill="#cfae7d" /><path fill="#cfae7d" d="M641 426h2v1h-2zM644 429h2v2h-2zM632 403h3v2h-3zM666 419h1v2h-1zM660 402h1v1h-1zM649 398h2v3h-2zM637 423h2v1h-2zM654 412h3v2h-3zM652 439h1v1h-1zM636 427h2v1h-2zM631 407h2v2h-2zM654 433h2v2h-2zM640 408h3v2h-3zM636 419h2v2h-2zM624 407h3v2h-3zM642 429h1v2h-1zM666 410h2v2h-2zM663 431h1v2h-1zM631 430h1v1h-1zM619 437h3v2h-3zM614 408h2v2h-2zM613 403h2v2h-2zM648 410h2v3h-2zM642 438h1v2h-1zM654 402h2v2h-2zM621 422h1v1h-1zM629 430h1v2h-1zM620 410h2v2h-2zM629 441h1v2h-1zM645 403h2v1h-2zM624 428h1v1h-1zM666 410h1v1h-1zM638 430h1v2h-1zM654 417h3v2h-3zM633 432h2v2h-2zM630 406h2v3h-2zM613 423h1v2h-1zM636 410h1v1h-1zM641 399h3v2h-3zM628 414h2v1h-2zM655 407h2v2h-2zM644 404h1v1h-1zM627 410h1v1h-1zM630 436h2v3h-2zM633 410h1v1h-1zM655 436h2v1h-2zM636 418h2v2h-2zM651 417h2v2h-2zM607 430h1v2h-1zM661 428h3v2h-3zM619 401h2v2h-2zM661 409h1v1h-1zM628 410h2v2h-2zM607 430h2v3h-2zM645 413h2v2h-2zM631 398h2v2h-2zM628 423h1v1h-1zM663 399h2v2h-2zM633 421h1v2h-1zM635 428h2v2h-2zM638 433h1v1h-1zM606 422h1v1h-1zM634 398h1v1h-1zM645 436h2v3h-2zM611 429h2v3h-2zM659 400h2v1h-2zM663 410h2v1h-2zM617 426h2v2h-2zM661 437h1v2h-1zM622 422h1v1h-1zM621 403h2v2h-2zM660 407h2v2h-2zM648 403h1v1h-1zM612 433h3v2h-3zM609 428h2v2h-2zM626 437h2v2h-2zM635 430h1v1h-1zM645 409h1v1h-1zM611 428h1v2h-1zM621 408h2v3h-2zM627 428h1v2h-1zM660 411h3v2h-3zM658 401h1v1h-1zM627 401h2v1h-2zM626 422h1v1h-1zM665 430h2v3h-2zM664 401h2v2h-2zM613 436h2v1h-2zM646 431h3v2h-3zM641 432h2v3h-2zM626 438h2v3h-2zM620 439h2v2h-2zM629 413h1v1h-1zM658 425h2v3h-2zM661 432h2v2h-2zM625 435h1v2h-1zM622 419h2v2h-2zM613 404h2v2h-2zM636 442h1v2h-1zM660 420h1v2h-1zM615 434h1v2h-1zM638 417h1v1h-1zM625 425h1v2h-1zM613 429h2v2h-2zM627 442h2v3h-2zM620 402h2v1h-2zM637 432h1v2h-1zM660 401h1v1h-1zM614 431h2v3h-2zM628 430h1v2h-1zM626 406h1v1h-1zM619 417h2v1h-2zM663 432h1v2h-1zM640 430h2v2h-2zM643 423h3v2h-3zM652 435h2v1h-2zM609 401h1v1h-1zM611 427h2v3h-2zM660 438h1v1h-1zM638 405h1v2h-1zM652 413h2v1h-2zM626 419h2v1h-2zM608 433h2v2h-2zM628 405h2v1h-2zM628 404h2v2h-2zM665 419h2v1h-2zM631 416h2v1h-2zM625 411h1v1h-1zM626 415h2v2h-2zM661 409h1v1h-1zM641 398h3v2h-3zM665 416h1v2h-1zM631 438h2v1h-2zM652 400h2v2h-2zM617 401h1v1h-1zM615 431h2v1h-2zM654 416h2v3h-2zM627 428h1v2h-1zM634 441h1v2h-1zM654 437h1v2h-1zM647 406h1v1h-1zM635 441h3v2h-3zM653 399h1v2h-1zM660 399h2v2h-2zM630 415h1v1h-1zM625 426h1v1h-1zM650 434h2v2h-2zM640 432h1v2h-1zM612 422h3v2h-3zM636 429h1v1h-1zM659 408h2v3h-2zM626 439h1v2h-1zM653 420h1v1h-1zM660 434h2v1h-2zM631 411h1v1h-1zM611 420h2v1h-2zM622 406h1v2h-1zM630 431h1v2h-1zM616 436h1v2h-1zM657 419h2v3h-2zM657 405h2v2h-2zM658 416h1v1h-1zM659 419h1v1h-1zM654 437h2v1h-2zM623 412h1v1h-1zM641 413h2v1h-2zM659 420h1v2h-1zM644 411h3v2h-3zM641 411h3v2h-3zM614 438h2v2h-2zM649 413h1v1h-1zM656 398h1v1h-1zM645 402h2v1h-2zM635 436h2v1h-2zM623 416h3v2h-3zM647 399h2v2h-2zM628 442h2v1h-2zM647 437h1v1h-1zM654 436h2v1h-2zM619 426h2v3h-2zM627 437h2v2h-2zM634 423h1v2h-1zM643 422h1v2h-1zM637 436h1v1h-1zM652 436h1v1h-1zM634 404h1v1h-1zM623 399h1v1h-1zM636 430h2v2h-2zM646 412h1v1h-1zM619 422h2v2h-2zM629 432h3v2h-3zM644 401h1v2h-1zM633 403h1v1h-1zM649 431h2v2h-2zM640 439h1v1h-1zM664 404h2v3h-2zM647 421h2v3h-2zM630 425h1v2h-1zM660 436h2v1h-2zM628 425h1v1h-1zM634 407h1v1h-1zM605 425h1v1h-1zM611 402h1v1h-1zM627 440h2v3h-2zM627 436h2v2h-2zM621 423h1v1h-1zM642 401h1v2h-1zM635 400h2v2h-2zM636 418h1v2h-1zM656 431h1v1h-1zM614 436h2v2h-2zM640 420h2v1h-2zM658 419h1v2h-1zM664 427h1v1h-1zM641 426h2v2h-2zM618 439h2v2h-2zM632 404h1v1h-1zM664 411h1v1h-1zM655 404h3v2h-3zM622 407h2v3h-2zM617 435h1v2h-1zM631 432h2v1h-2zM654 427h3v2h-3zM635 439h1v1h-1zM666 412h1v1h-1zM664 424h2v1h-2zM654 420h1v2h-1zM649 415h2v2h-2zM637 425h2v2h-2zM612 410h3v2h-3zM637 398h3v2h-3zM651 412h1v1h-1zM613 421h2v3h-2zM633 402h1v2h-1zM661 404h2v1h-2zM610 414h2v3h-2zM625 426h2v2h-2zM646 415h3v2h-3zM620 415h3v2h-3zM653 398h2v2h-2zM653 425h1v2h-1zM614 403h1v1h-1zM642 413h1v1h-1zM624 414h1v1h-1zM614 405h1v1h-1zM636 441h2v3h-2zM650 432h1v1h-1zM634 436h1v1h-1zM646 398h1v1h-1zM607 421h2v2h-2zM658 432h1v1h-1z"/><polygon points="611,400 664,399 665,412 664,438 645.4,440 634,443 618.5,440 611,435 606,428 610,415" fill="#cfae7d" /><path fill="#12d0d8" d="M621 422h1v2h-1zM651 415h1v2h-1zM638 414h1v1h-1zM635 410h1v1h-1zM616 418h1v2h-1zM632 426h1v1h-1zM640 403h2v1h-2zM644 405h1v1h-1zM660 432h1v1h-1zM649 433h1v2h-1zM637 422h1v2h-1zM630 417h1v1h-1z"/><path fill="#0e7a2a" d="M651 403h1v2h-1zM625 436h1v1h-1zM659 409h1v1h-1zM639 435h2v1h-2zM660 406h1v2h-1zM638 420h2v1h-2zM647 420h1v2h-1zM637 400h1v1h-1zM617 415h1v2h-1zM636 438h2v1h-2zM615 431h1v2h-1zM623 415h2v2h-2zM651 426h1v2h-1zM638 441h2v1h-2zM630 428h1v1h-1zM611 432h1v1h-1zM623 424h2v1h-2zM660 436h1v1h-1zM628 436h1v1h-1zM655 409h2v1h-2zM629 440h1v1h-1zM656 404h2v1h-2zM640 428h1v2h-1zM641 408h1v1h-1zM636 423h1v1h-1zM614 422h1v1h-1zM663 431h1v1h-1zM638 439h1v1h-1zM655 429h1v1h-1zM661 429h2v1h-2zM643 424h1v1h-1zM646 426h1v2h-1zM618 402h1v1h-1zM647 400h1v1h-1z"/><path fill="#ffffff" d="M627 403h1v1h-1zM612 409h2v1h-2zM652 438h1v1h-1zM664 415h2v2h-2zM624 415h1v1h-1z"/><path fill="#fdf800" d="M629 432h1v1h-1zM617 411h2v2h-2zM653 400h2v1h-2zM619 422h2v1h-2zM663 434h2v1h-2zM646 423h2v2h-2zM616 416h1v1h-1zM625 411h1v2h-1zM647 405h1v1h-1zM650 420h1v2h-1zM607 426h1v1h-1zM641 406h1v2h-1zM663 413h1v2h-1zM614 417h1v1h-1zM639 441h1v1h-1zM639 422h2v1h-2zM620 419h1v1h-1zM663 413h1v2h-1zM626 404h1v1h-1zM614 432h2v1h-2zM653 422h1v1h-1zM659 430h1v2h-1zM634 414h1v2h-1zM630 417h1v1h-1zM649 427h2v1h-2zM621 419h1v1h-1zM630 416h2v1h-2zM609 431h1v1h-1zM626 412h2v1h-2zM623 435h2v1h-2zM622 435h1v1h-1zM620 431h1v1h-1zM659 418h1v1h-1zM649 422h1v2h-1zM659 427h1v1h-1zM615 416h2v1h-2zM646 410h1v2h-1z"/><path fill="#cc1e1e" d="M635 431h1v1h-1zM629 410h1v1h-1zM623 403h1v1h-1zM621 428h1v2h-1zM622 419h2v1h-2zM609 418h2v1h-2zM656 402h1v1h-1zM627 438h1v1h-1zM640 420h2v1h-2zM611 427h1v1h-1zM615 414h1v1h-1zM639 429h1v2h-1zM661 420h1v1h-1zM628 416h1v1h-1zM610 429h2v2h-2zM663 422h1v1h-1z"/><path fill="#d9829b" d="M635 441h2v2h-2zM621 412h1v1h-1zM641 402h1v1h-1zM611 426h1v1h-1zM643 434h1v1h-1zM622 418h1v1h-1zM644 433h1v1h-1zM633 416h1v1h-1zM638 405h1v1h-1zM644 402h1v1h-1zM656 414h1v2h-1zM610 415h1v1h-1zM650 400h1v2h-1zM646 433h1v2h-1zM643 423h1v1h-1zM615 401h1v1h-1zM631 422h1v1h-1zM626 406h1v1h-1zM645 412h1v1h-1zM655 407h1v1h-1zM662 415h2v1h-2zM657 421h1v2h-1z"/><path fill="#8a4a2c" d="M651 402h1v2h-1zM624 431h1v1h-1zM653 425h1v1h-1zM654 435h1v1h-1zM633 423h1v2h-1zM625 432h1v1h-1zM626 428h1v1h-1zM647 410h1v2h-1zM650 433h1v1h-1zM658 417h1v1h-1zM662 434h1v1h-1zM611 410h1v1h-1zM608 428h1v1h-1zM656 422h1v1h-1zM638 439h1v1h-1zM623 406h2v2h-2zM648 408h1v1h-1zM649 407h2v1h-2zM656 413h1v1h-1zM659 403h2v1h-2zM650 419h1v2h-1zM634 417h1v1h-1zM636 420h1v1h-1zM649 427h2v2h-2zM625 402h1v1h-1zM646 434h1v1h-1zM650 435h1v1h-1zM647 404h1v1h-1zM637 431h1v1h-1z"/><polygon points="635,410 645,410 645,430 636,430" fill="#fdf800" /><path fill="#cfae7d" d="M663 429h2v2h-2zM676 423h1v2h-1zM686 427h1v1h-1zM675 431h2v3h-2zM692 413h1v1h-1zM664 433h1v1h-1zM664 421h2v2h-2zM687 428h2v3h-2zM667 440h1v1h-1zM678 432h1v2h-1zM693 420h2v2h-2zM669 415h2v3h-2zM670 428h2v2h-2zM675 419h1v1h-1zM694 418h1v2h-1zM669 435h1v1h-1zM662 429h3v2h-3zM677 417h2v1h-2zM694 420h2v1h-2zM676 440h3v2h-3zM676 435h1v2h-1zM669 427h1v1h-1zM664 432h2v3h-2zM674 419h2v2h-2zM685 431h1v2h-1zM673 422h2v2h-2zM676 422h1v1h-1zM673 430h2v1h-2zM664 421h1v1h-1zM684 415h1v1h-1zM679 432h2v1h-2zM686 416h2v3h-2zM691 415h2v3h-2zM676 441h2v2h-2zM681 426h2v1h-2zM675 427h2v3h-2zM690 417h2v2h-2zM669 436h1v1h-1zM676 425h2v2h-2zM674 430h2v2h-2zM691 420h1v1h-1zM672 438h1v2h-1zM663 438h2v1h-2zM672 430h2v3h-2zM682 417h1v1h-1zM677 435h1v1h-1zM677 440h2v3h-2zM663 432h1v1h-1zM684 416h1v1h-1zM673 429h2v3h-2zM666 425h3v2h-3zM674 434h1v1h-1zM665 426h1v1h-1zM686 431h1v2h-1zM684 432h3v2h-3zM689 421h1v1h-1zM668 420h2v1h-2zM681 417h2v2h-2zM667 416h1v1h-1zM695 418h2v2h-2zM682 426h2v2h-2zM689 427h2v2h-2zM673 434h2v3h-2zM675 433h1v2h-1zM664 439h2v2h-2zM673 420h2v2h-2zM663 435h1v1h-1zM667 431h2v2h-2zM678 419h2v1h-2zM678 430h2v3h-2zM689 425h1v2h-1zM667 424h1v2h-1zM668 431h2v2h-2zM690 418h1v1h-1zM668 425h1v1h-1zM686 434h1v1h-1zM676 417h1v1h-1zM676 431h2v2h-2zM683 419h1v1h-1z"/><polygon points="662,418 687,411.4 698.3,416.3 695,422 690,427 689.3,434 680.4,436.6 678,440.7 671.4,444 664,438" fill="#cfae7d" /><path fill="#0e7a2a" d="M692 423h1v1h-1zM669 431h1v1h-1zM672 440h1v1h-1zM676 414h1v1h-1zM664 431h1v1h-1z"/><path fill="#fdf800" d="M673 429h1v1h-1zM669 420h1v2h-1zM672 430h2v2h-2zM672 432h1v2h-1zM672 429h1v1h-1zM676 433h1v1h-1zM673 430h2v1h-2zM673 425h1v1h-1zM685 414h1v1h-1zM687 422h1v1h-1zM676 418h1v2h-1zM672 427h2v1h-2zM681 414h1v1h-1zM681 429h1v1h-1z"/><path fill="#8a4a2c" d="M666 432h1v1h-1zM686 415h1v1h-1zM687 430h2v1h-2zM674 418h1v1h-1zM666 423h1v1h-1zM676 427h1v1h-1zM680 417h1v1h-1zM675 420h1v1h-1z"/><path fill="#d9829b" d="M685 427h1v2h-1zM694 415h1v2h-1zM679 425h1v1h-1zM684 428h1v1h-1zM680 416h1v1h-1zM675 431h1v2h-1zM681 422h1v1h-1zM678 424h1v2h-1zM689 422h2v1h-2zM683 427h1v1h-1zM670 436h1v1h-1zM690 415h1v1h-1zM680 429h2v2h-2zM676 416h2v2h-2zM667 422h1v1h-1zM671 430h1v1h-1z"/><path fill="#ffffff" d="M693 418h1v1h-1zM684 413h1v1h-1z"/><path fill="#d9829b" d="M611 421h2v1h-2zM609 421h1v1h-1zM601 413h1v1h-1zM607 421h2v2h-2zM606 419h1v1h-1zM599 424h2v1h-2zM598 417h2v2h-2zM612 415h1v2h-1zM601 423h1v1h-1zM601 413h1v1h-1zM606 421h1v1h-1zM608 421h2v2h-2zM608 424h2v2h-2zM611 420h2v1h-2zM607 417h3v2h-3zM607 414h1v1h-1zM600 419h2v3h-2zM607 422h2v2h-2zM606 412h2v2h-2zM607 425h1v2h-1zM612 416h2v1h-2z"/><polygon points="598,412 612,412 612,425 599,425" fill="#d9829b" /><path fill="#f24a1e" d="M610 419h2v1h-2zM598 414h2v1h-2zM600 415h2v1h-2zM603 422h2v1h-2zM608 412h1v1h-1zM609 412h1v1h-1zM599 423h2v1h-2zM599 415h1v1h-1z"/><path fill="#fdf800" d="M608 419h1v1h-1zM601 420h1v2h-1zM600 421h2v1h-2zM610 424h1v2h-1zM603 416h1v2h-1zM611 417h1v2h-1zM601 414h1v1h-1zM599 424h1v2h-1zM605 412h1v2h-1zM603 424h1v1h-1zM600 413h2v1h-2zM598 414h2v2h-2z"/><polygon points="648,420 662,420 662,428 648,428" fill="#c39a96" /><path fill="#4a1c12" d="M599 432h2v3h-2zM593 438h1v1h-1zM600 445h2v2h-2zM597 432h1v1h-1zM599 432h1v2h-1zM604 434h1v1h-1zM592 434h2v1h-2zM599 433h2v1h-2zM600 433h2v1h-2zM591 445h1v2h-1zM593 442h2v1h-2zM603 434h2v2h-2zM604 433h1v1h-1zM596 438h2v2h-2zM590 432h2v2h-2zM592 447h1v1h-1zM602 437h2v2h-2zM601 438h1v1h-1zM591 436h2v1h-2zM604 434h1v1h-1zM602 434h2v1h-2zM591 443h1v2h-1zM592 441h3v2h-3zM598 440h1v1h-1zM604 447h1v1h-1zM595 439h2v3h-2zM592 447h2v1h-2zM602 443h3v2h-3z"/><polygon points="589,433 604,433 604,447 590,448" fill="#4a1c12" /><path fill="#f24a1e" d="M598 436h1v1h-1zM600 436h1v2h-1zM598 442h1v1h-1zM596 444h2v2h-2zM603 441h1v1h-1z"/><path fill="#8a4a2c" d="M595 434h1v1h-1zM591 446h1v1h-1zM590 440h1v2h-1zM597 439h2v1h-2zM600 443h1v1h-1zM591 435h1v1h-1zM591 440h2v2h-2zM603 442h1v1h-1zM592 438h2v1h-2zM590 444h1v1h-1zM591 436h2v1h-2zM601 446h1v2h-1zM600 433h1v1h-1zM600 436h1v2h-1zM599 440h1v1h-1zM601 440h1v1h-1zM600 442h1v1h-1zM596 435h1v1h-1z"/><path fill="#8a4a2c" d="M575 439h1v2h-1zM588 439h3v2h-3zM584 449h1v1h-1zM578 439h3v2h-3zM584 449h1v1h-1zM581 445h1v1h-1zM590 444h2v2h-2zM589 438h2v1h-2zM579 443h3v2h-3zM586 443h2v1h-2zM588 436h1v1h-1zM583 446h1v1h-1zM578 446h1v2h-1zM588 436h1v1h-1zM579 446h1v2h-1zM577 440h3v2h-3zM583 444h1v1h-1zM586 444h1v2h-1zM589 445h2v2h-2zM581 448h2v2h-2zM581 440h2v2h-2z"/><polygon points="575,437 590,437 590,448 578,451" fill="#8a4a2c" /><path fill="#cfae7d" d="M579 449h2v1h-2zM581 439h2v2h-2zM582 439h1v1h-1zM581 439h1v2h-1zM578 450h1v2h-1zM587 441h2v1h-2zM588 437h1v1h-1zM580 446h1v1h-1zM583 438h2v1h-2zM577 437h2v1h-2zM581 437h1v1h-1z"/><path fill="#4a1c12" d="M584 437h1v1h-1zM584 437h2v2h-2zM588 445h1v1h-1zM583 438h1v2h-1zM589 446h1v1h-1zM589 445h1v2h-1zM588 437h1v1h-1zM575 437h1v1h-1z"/><polygon points="635,438 650,437 650,443 642,444.8 634,443" fill="#8a4a2c" /><polygon points="665,430 680,428 680.4,436.6 671.4,444 668,450.5 665.7,446.4" fill="#8a4a2c" /><polygon points="674,432 682,430 682,437 675,438" fill="#4a1c12" /><polygon points="513.6,435 560,436 575,440 578,452 571.4,462 560,462 545,470 530,478 528,490 522,505 530,510 551,508 545,515 523,530.6 519,532.6 492.4,530.6 490.4,533.2 480,532.6 481.2,518.2 479.5,513.3 479.5,508.4 498.3,508.4 503.2,492 500.7,490.5 480.4,489.7 478.7,482.3 476.3,472.6 475.5,453.8 513.7,454.7" fill="#cfae7d" /><path fill="#d9829b" d="M521 517h2v2h-2zM577 450h1v1h-1zM547 450h2v1h-2zM487 531h1v2h-1zM522 452h1v1h-1zM543 459h2v2h-2zM492 523h1v1h-1zM522 449h1v1h-1zM534 454h1v1h-1zM502 498h2v1h-2zM526 461h1v1h-1zM490 524h2v2h-2zM505 469h1v2h-1zM544 466h1v1h-1zM501 474h1v1h-1zM490 530h1v1h-1zM553 458h1v1h-1zM532 457h2v1h-2zM489 525h2v1h-2zM528 515h1v1h-1zM533 516h1v1h-1zM538 457h2v1h-2zM541 465h2v1h-2zM552 460h1v2h-1zM535 471h1v2h-1zM543 458h1v1h-1zM480 484h2v2h-2zM480 459h2v1h-2zM512 496h2v1h-2zM531 455h1v2h-1zM517 527h2v1h-2zM551 443h1v2h-1zM488 463h1v1h-1zM571 439h1v2h-1zM489 480h1v1h-1zM519 510h1v1h-1zM532 517h1v1h-1zM525 511h1v1h-1zM569 439h1v2h-1zM516 526h1v1h-1zM484 463h1v1h-1zM516 436h1v1h-1zM499 520h1v1h-1zM525 524h1v1h-1zM540 453h1v1h-1zM516 486h1v1h-1zM544 449h1v1h-1zM546 444h1v2h-1zM503 526h2v1h-2zM534 453h2v1h-2zM502 522h2v2h-2zM494 487h2v1h-2zM507 490h1v2h-1zM561 438h1v1h-1zM520 472h1v1h-1zM497 485h1v1h-1zM524 448h2v2h-2zM491 520h1v1h-1zM523 453h1v2h-1zM513 473h1v1h-1zM554 437h2v2h-2zM524 472h2v1h-2zM477 456h2v1h-2z"/><path fill="#8a4a2c" d="M572 457h1v2h-1zM536 470h1v1h-1zM566 454h1v1h-1zM517 526h1v1h-1zM502 491h1v1h-1zM483 483h1v1h-1zM512 501h1v1h-1zM520 490h1v1h-1zM538 471h1v2h-1zM498 525h1v1h-1zM497 466h1v1h-1zM483 475h2v1h-2zM525 435h1v1h-1zM533 458h1v1h-1zM559 448h1v1h-1zM523 449h1v1h-1zM553 449h1v1h-1zM532 451h1v2h-1zM493 456h2v1h-2zM568 441h1v1h-1zM498 469h1v1h-1zM486 509h1v1h-1zM513 474h1v1h-1zM478 469h1v1h-1zM520 479h2v2h-2zM561 446h1v1h-1zM528 464h1v1h-1zM565 451h1v2h-1zM520 456h1v1h-1zM518 435h1v1h-1zM499 514h1v1h-1zM488 463h1v1h-1zM528 453h1v1h-1zM512 525h1v1h-1zM515 469h1v1h-1zM551 440h2v2h-2zM526 463h1v2h-1zM514 469h1v1h-1zM533 464h2v2h-2zM496 517h2v1h-2zM483 466h1v1h-1zM485 469h1v1h-1zM543 448h1v1h-1zM488 482h2v1h-2zM513 522h2v1h-2zM487 517h1v2h-1zM488 461h1v1h-1zM521 482h1v1h-1zM495 463h2v2h-2zM493 509h1v1h-1zM558 436h2v1h-2zM503 480h1v1h-1zM513 512h1v1h-1zM528 462h2v2h-2zM509 515h1v1h-1zM485 487h1v1h-1zM516 499h2v1h-2zM534 450h1v1h-1zM494 465h1v2h-1z"/><path fill="#12d0d8" d="M492 510h1v1h-1zM531 439h1v2h-1zM517 496h1v1h-1zM520 502h1v2h-1zM510 467h1v1h-1zM570 459h1v1h-1zM565 447h1v2h-1zM518 529h2v1h-2zM530 471h1v1h-1zM476 464h1v1h-1zM542 448h2v1h-2zM483 510h1v2h-1zM518 440h1v1h-1zM545 509h1v1h-1zM561 446h1v2h-1zM537 517h1v1h-1zM550 451h2v1h-2zM560 455h1v1h-1zM528 466h1v1h-1zM517 461h1v2h-1zM517 502h1v2h-1zM506 511h1v1h-1zM572 443h1v1h-1zM485 462h1v1h-1zM529 521h2v1h-2zM487 466h2v1h-2zM523 514h2v1h-2zM526 441h1v1h-1z"/><path fill="#0e7a2a" d="M548 458h1v1h-1zM555 443h2v1h-2zM530 475h1v1h-1zM520 524h2v1h-2zM504 523h1v1h-1zM534 455h1v1h-1zM503 471h2v2h-2zM553 444h1v1h-1zM499 527h1v2h-1zM515 502h1v2h-1zM482 518h1v1h-1zM526 440h1v1h-1zM493 472h1v1h-1zM482 522h1v1h-1zM492 481h1v1h-1zM508 487h1v2h-1zM548 454h1v1h-1zM531 522h1v1h-1zM509 494h1v1h-1zM495 460h1v1h-1zM499 483h1v1h-1zM516 499h2v1h-2zM487 460h1v1h-1zM501 464h1v1h-1zM496 470h1v1h-1zM503 518h1v1h-1zM567 443h1v2h-1zM482 481h2v1h-2zM569 459h2v2h-2zM507 498h1v2h-1zM485 460h1v1h-1zM513 515h1v1h-1zM495 477h2v2h-2zM499 469h2v1h-2zM500 514h1v1h-1zM521 456h1v1h-1zM517 436h2v2h-2zM522 519h1v2h-1zM481 516h1v1h-1zM517 485h1v1h-1zM495 514h1v1h-1zM540 517h1v2h-1zM532 469h2v2h-2zM494 484h2v1h-2zM494 516h1v1h-1zM543 449h2v1h-2zM498 472h1v1h-1zM537 473h1v1h-1zM572 440h1v1h-1zM539 456h1v1h-1zM559 455h1v2h-1zM522 467h1v2h-1zM501 520h1v1h-1z"/><path fill="#fdf800" d="M505 487h1v1h-1zM480 487h1v1h-1zM518 481h1v2h-1zM507 526h1v1h-1zM488 532h1v1h-1zM516 522h2v1h-2zM477 460h1v1h-1zM550 457h1v2h-1zM505 515h2v2h-2zM549 446h1v1h-1zM545 467h1v2h-1zM543 444h2v2h-2zM503 462h1v1h-1zM508 479h1v2h-1zM484 513h1v1h-1zM482 523h1v1h-1zM492 480h1v2h-1zM551 457h2v1h-2zM568 454h2v1h-2zM511 494h1v1h-1zM538 512h1v1h-1zM532 458h1v1h-1zM537 515h1v2h-1zM516 482h1v2h-1zM505 475h1v1h-1zM530 523h2v2h-2zM521 442h1v1h-1zM517 516h2v1h-2zM524 528h1v1h-1zM527 451h1v1h-1zM527 452h1v1h-1zM487 523h1v1h-1zM504 457h1v2h-1zM547 458h1v2h-1zM523 498h2v1h-2zM487 524h2v1h-2zM503 494h2v1h-2zM516 508h2v1h-2zM541 515h1v1h-1zM493 528h1v1h-1zM502 462h2v1h-2zM502 517h1v1h-1zM529 458h2v1h-2zM538 458h1v2h-1zM499 521h1v1h-1zM517 466h1v1h-1zM492 460h2v1h-2zM520 442h1v1h-1zM503 500h2v1h-2zM504 462h2v1h-2zM513 492h1v1h-1zM497 530h1v1h-1zM519 448h1v1h-1zM520 473h1v2h-1zM490 475h1v1h-1zM536 451h1v1h-1zM569 457h1v1h-1zM550 445h1v1h-1zM514 451h1v1h-1zM486 528h1v1h-1zM502 499h1v1h-1zM480 480h1v1h-1zM552 447h1v1h-1zM498 463h1v1h-1zM511 522h1v1h-1zM521 465h1v1h-1zM526 510h1v1h-1zM517 488h2v2h-2zM545 444h1v1h-1zM532 464h1v2h-1zM507 517h1v1h-1zM480 460h1v2h-1zM558 440h1v1h-1zM490 459h2v2h-2zM511 461h1v1h-1zM519 520h2v1h-2zM501 516h1v1h-1zM532 436h1v1h-1zM549 455h1v2h-1zM485 511h1v2h-1zM521 439h1v1h-1zM527 479h2v1h-2zM501 454h1v1h-1zM535 446h2v1h-2zM527 440h1v1h-1zM509 455h2v2h-2zM542 467h1v2h-1zM500 488h1v1h-1zM523 441h1v2h-1zM524 525h2v1h-2zM518 516h1v1h-1zM537 449h2v1h-2z"/><path fill="#ffffff" d="M558 445h2v1h-2zM574 445h1v1h-1zM500 529h1v2h-1zM531 472h1v2h-1zM512 516h1v1h-1zM520 447h1v1h-1zM557 436h1v2h-1zM526 522h2v2h-2zM516 516h1v1h-1zM510 493h1v1h-1zM555 439h1v2h-1zM537 513h1v1h-1zM480 461h2v1h-2zM533 513h1v1h-1zM552 445h1v2h-1zM498 455h1v2h-1zM524 508h1v1h-1zM561 450h1v1h-1zM543 444h1v1h-1z"/><polygon points="566.7,480.7 594.4,478.3 593.6,492 585.4,497 581.3,505 557.7,508.4 556,496 560,486" fill="#cfae7d" /><path fill="#fdf800" d="M575 492h1v1h-1zM575 499h1v1h-1zM577 485h2v1h-2zM574 496h1v1h-1zM574 502h1v1h-1zM557 494h1v1h-1zM580 499h1v1h-1zM585 496h2v1h-2zM562 500h1v1h-1zM580 493h2v1h-2zM592 484h1v1h-1zM591 479h1v1h-1zM590 485h1v2h-1zM581 484h1v1h-1z"/><path fill="#0e7a2a" d="M563 496h2v2h-2zM566 491h1v1h-1zM589 491h1v1h-1zM567 486h1v1h-1zM587 480h2v1h-2zM558 496h1v1h-1zM574 498h1v1h-1zM577 495h1v2h-1zM567 503h1v1h-1zM568 490h2v2h-2zM585 493h1v2h-1zM576 485h2v2h-2zM560 489h1v1h-1zM567 484h1v1h-1z"/><path fill="#d9829b" d="M589 493h1v1h-1zM587 491h2v1h-2zM577 483h2v1h-2zM561 504h1v2h-1zM587 490h1v1h-1zM560 488h2v1h-2zM579 480h2v2h-2zM570 490h1v1h-1zM574 504h2v1h-2z"/><path fill="#8a4a2c" d="M574 501h1v1h-1zM562 500h1v1h-1zM571 490h1v1h-1zM560 503h1v1h-1zM561 485h1v1h-1zM569 485h1v1h-1zM567 485h1v1h-1zM593 489h1v1h-1z"/><path fill="#12d0d8" d="M564 491h1v1h-1zM579 493h1v1h-1zM572 501h2v2h-2zM570 494h1v2h-1zM585 483h1v2h-1z"/><path fill="#ffffff" d="M571 494h1v1h-1z"/><polygon points="581,497 585.4,497 583.8,516.5 580.5,516.5" fill="#8a4a2c" /><path fill="#c39a96" d="M572 491h2v2h-2zM591 483h1v2h-1zM590 488h2v2h-2zM588 492h1v2h-1zM592 487h2v1h-2zM588 492h1v1h-1zM587 479h1v2h-1zM574 491h1v1h-1zM592 481h2v1h-2zM594 490h1v1h-1zM573 492h1v1h-1zM579 487h1v1h-1zM592 485h3v2h-3zM591 486h2v3h-2zM581 493h2v1h-2zM576 482h3v2h-3zM584 494h1v2h-1zM580 493h1v1h-1zM584 490h2v2h-2zM573 494h2v3h-2zM592 485h1v2h-1zM584 486h1v2h-1zM584 488h2v2h-2zM580 492h1v1h-1zM586 489h2v1h-2zM594 490h2v1h-2zM581 479h1v1h-1zM579 489h2v2h-2zM587 479h3v2h-3zM583 485h2v3h-2zM594 480h1v1h-1zM588 492h2v2h-2zM583 494h2v3h-2zM592 492h2v2h-2zM592 492h1v1h-1zM594 483h2v1h-2zM576 483h1v2h-1z"/><polygon points="575,482 594,479 593.6,492 585,497 574,494" fill="#c39a96" /><path fill="#0e7a2a" d="M580 491h1v1h-1zM586 485h2v1h-2zM580 481h1v1h-1zM588 490h1v1h-1zM590 488h2v2h-2zM590 488h2v2h-2zM576 484h2v2h-2zM590 480h1v1h-1zM580 491h1v1h-1zM579 487h1v2h-1zM581 484h1v1h-1zM593 490h1v2h-1zM574 492h2v1h-2zM591 487h1v1h-1zM581 484h1v1h-1zM583 482h1v2h-1zM580 494h1v1h-1zM593 486h1v1h-1zM576 483h1v1h-1zM582 495h1v1h-1z"/><path fill="#cfae7d" d="M580 488h1v1h-1zM587 495h2v2h-2zM590 490h1v1h-1zM588 483h1v1h-1zM578 491h1v1h-1zM588 484h1v1h-1zM585 489h1v1h-1zM575 490h1v1h-1zM586 480h2v2h-2zM590 491h1v1h-1zM583 494h1v1h-1zM584 489h1v1h-1zM576 487h1v1h-1zM592 482h2v1h-2zM586 487h1v1h-1zM587 493h2v1h-2zM589 484h2v1h-2zM588 486h2v1h-2zM577 488h1v1h-1zM591 482h1v1h-1zM583 489h2v1h-2zM578 488h1v2h-1zM588 488h1v1h-1zM576 493h2v1h-2zM579 494h1v1h-1zM580 495h1v1h-1z"/><path fill="#f24a1e" d="M576 493h1v1h-1zM591 480h2v1h-2zM587 489h1v1h-1zM579 483h2v1h-2zM583 485h1v1h-1zM579 492h1v1h-1zM592 481h2v1h-2z"/><path fill="#d9829b" d="M493 466h1v2h-1zM483 461h1v1h-1zM493 462h2v1h-2zM488 456h2v2h-2zM491 467h1v2h-1zM486 458h2v1h-2zM493 460h1v1h-1zM479 455h2v3h-2zM487 466h1v1h-1zM485 462h2v3h-2zM498 454h2v1h-2zM487 464h2v1h-2zM499 464h3v2h-3zM483 463h2v2h-2zM480 459h2v1h-2zM490 460h3v2h-3zM484 455h1v1h-1zM498 456h2v2h-2zM477 465h2v2h-2zM491 464h1v2h-1zM488 467h2v3h-2zM497 458h2v2h-2zM494 463h1v1h-1zM486 460h2v2h-2zM484 465h2v2h-2zM483 457h2v3h-2zM486 465h2v1h-2zM485 466h2v1h-2zM485 460h1v1h-1z"/><polygon points="480,455 497,455 498,464 488,470 478,466" fill="#d9829b" /><path fill="#8a4a2c" d="M479 466h1v1h-1zM492 461h1v1h-1zM489 468h1v1h-1zM487 461h1v2h-1zM492 455h1v2h-1zM485 466h2v2h-2zM482 464h1v1h-1zM480 455h1v1h-1zM497 463h1v2h-1zM479 460h1v1h-1zM489 456h2v2h-2zM494 460h2v1h-2zM493 463h1v1h-1z"/><path fill="#cfae7d" d="M494 462h2v2h-2zM496 460h1v2h-1zM482 461h1v1h-1zM493 463h2v2h-2zM487 469h1v1h-1zM492 458h1v1h-1zM480 455h1v1h-1zM493 463h2v1h-2zM494 456h1v1h-1zM484 458h1v1h-1zM494 457h1v1h-1zM482 462h1v1h-1z"/><polygon points="497,458 512,460 510,472 498,470" fill="#f0a0c0" /><path fill="#fdf800" d="M508 470h2v2h-2zM511 473h2v2h-2zM509 473h1v2h-1zM513 468h1v2h-1zM512 476h1v2h-1zM512 464h2v3h-2zM511 474h2v3h-2zM505 463h1v2h-1zM499 464h1v2h-1zM514 472h1v1h-1zM503 465h3v2h-3zM511 476h1v2h-1zM505 463h1v1h-1zM513 472h1v1h-1zM504 464h1v1h-1zM516 467h1v2h-1zM514 469h2v3h-2zM506 462h2v2h-2zM510 463h1v1h-1zM508 466h2v3h-2zM511 464h1v1h-1zM515 462h3v2h-3zM515 476h2v2h-2zM511 462h1v1h-1z"/><polygon points="500,462 517,462 518,476 503,476" fill="#fdf800" /><polygon points="500,462 517,462 518,476 503,476" fill="url(#yp)" /><path fill="#c49c0e" d="M516 467h1v1h-1zM510 466h2v1h-2zM504 463h1v1h-1zM504 464h1v1h-1zM503 465h2v2h-2zM511 469h2v1h-2zM515 465h1v1h-1zM508 472h1v1h-1zM505 466h1v2h-1zM503 470h1v1h-1zM513 474h2v2h-2zM509 463h2v1h-2z"/><path fill="#cf8ea4" d="M542 453h2v2h-2zM558 445h1v1h-1zM572 440h1v1h-1zM572 450h2v2h-2zM532 440h2v2h-2zM575 447h3v2h-3zM571 452h1v1h-1zM527 448h2v2h-2zM530 443h1v2h-1zM546 436h1v1h-1zM531 453h2v2h-2zM521 452h2v2h-2zM540 443h1v2h-1zM532 444h2v1h-2zM548 457h2v1h-2zM542 447h2v2h-2zM530 436h1v2h-1zM571 451h1v1h-1zM578 450h1v1h-1zM544 446h3v2h-3zM565 437h1v1h-1zM558 455h2v2h-2zM525 440h1v1h-1zM532 438h1v1h-1zM549 438h1v1h-1zM555 446h2v3h-2zM555 442h2v2h-2zM553 439h1v1h-1zM522 437h2v1h-2zM550 442h2v2h-2zM544 435h1v1h-1zM535 438h1v2h-1zM545 442h2v1h-2zM563 447h1v1h-1zM534 451h2v1h-2zM554 453h1v1h-1zM570 440h2v3h-2zM552 456h1v2h-1zM541 454h1v1h-1zM531 455h2v2h-2zM572 448h1v2h-1zM562 455h1v1h-1zM549 437h1v1h-1zM532 439h1v1h-1zM542 453h1v1h-1zM520 440h1v1h-1zM545 448h1v2h-1zM573 449h3v2h-3zM542 439h1v1h-1zM548 448h2v1h-2zM549 452h2v3h-2zM565 455h2v2h-2zM531 449h3v2h-3zM562 436h2v3h-2zM558 437h2v2h-2zM529 444h2v2h-2zM560 454h2v2h-2zM535 438h1v2h-1zM542 447h1v2h-1zM543 452h1v2h-1zM571 458h1v1h-1zM531 436h2v2h-2zM526 436h1v2h-1zM562 449h1v1h-1zM523 455h1v1h-1zM543 448h1v1h-1zM560 457h1v1h-1zM547 447h3v2h-3zM570 439h1v1h-1zM557 442h2v3h-2zM552 451h1v1h-1zM562 454h3v2h-3zM559 441h1v1h-1zM571 457h1v1h-1zM560 456h2v2h-2zM542 445h1v1h-1zM560 452h1v2h-1zM564 452h1v1h-1zM558 438h1v1h-1zM563 437h3v2h-3zM543 442h2v2h-2zM546 451h2v3h-2zM530 451h2v3h-2zM572 445h1v2h-1zM573 440h1v1h-1zM536 436h3v2h-3zM542 450h2v2h-2zM531 436h2v2h-2zM525 445h2v1h-2zM537 446h2v2h-2zM551 443h2v1h-2zM571 442h2v2h-2zM542 439h2v2h-2zM528 448h1v2h-1zM568 455h2v1h-2zM562 437h2v3h-2zM562 445h1v1h-1zM526 447h1v1h-1zM529 445h2v3h-2zM558 450h1v1h-1zM565 450h3v2h-3zM563 445h1v1h-1zM561 458h2v1h-2zM520 449h2v3h-2zM533 450h2v2h-2zM537 445h2v2h-2zM539 438h1v2h-1zM526 453h3v2h-3zM525 447h1v2h-1zM571 440h1v1h-1zM554 442h2v1h-2zM550 456h2v2h-2zM576 448h1v2h-1z"/><polygon points="521,437 545,436 562,437 575,441 578,452 571,460 556,458 540,457 521,455" fill="#cf8ea4" /><path fill="#c39a96" d="M554 451h2v1h-2zM555 439h1v1h-1zM532 452h1v2h-1zM546 442h3v2h-3zM567 441h1v2h-1zM570 456h1v1h-1zM529 452h2v2h-2zM530 448h1v1h-1zM571 451h1v2h-1zM559 439h1v1h-1zM529 446h1v1h-1zM560 444h2v1h-2zM561 454h2v2h-2zM564 451h2v2h-2zM528 441h1v1h-1zM544 436h2v2h-2zM540 436h3v2h-3zM561 458h1v1h-1zM541 439h3v2h-3zM530 450h1v1h-1zM558 448h1v2h-1zM537 449h1v1h-1zM540 443h1v2h-1zM562 455h1v2h-1zM568 451h2v1h-2zM532 448h1v2h-1zM537 447h2v1h-2zM542 444h1v1h-1zM546 444h1v1h-1zM532 437h1v2h-1zM556 445h2v2h-2zM546 450h1v2h-1zM535 440h3v2h-3z"/><path fill="#fdf800" d="M556 438h2v3h-2zM545 444h2v3h-2zM528 454h2v3h-2zM541 440h2v1h-2zM533 438h2v1h-2zM568 443h1v2h-1zM558 442h2v2h-2zM537 442h3v2h-3zM530 448h1v2h-1zM545 456h2v1h-2zM524 446h2v2h-2zM545 448h2v2h-2zM573 455h2v2h-2zM523 448h2v3h-2zM563 439h1v2h-1zM542 436h2v1h-2zM529 439h2v2h-2zM544 442h1v1h-1zM527 441h1v1h-1zM543 456h1v1h-1zM560 442h2v2h-2zM542 447h1v2h-1zM567 448h2v1h-2zM537 438h2v2h-2zM537 436h2v1h-2zM562 438h1v1h-1zM533 444h1v1h-1zM565 451h2v2h-2zM559 456h2v3h-2zM569 440h2v2h-2zM532 451h1v1h-1zM532 439h2v3h-2zM552 452h1v2h-1zM548 454h1v1h-1zM559 445h1v1h-1zM537 455h1v2h-1zM576 449h3v2h-3zM532 454h2v2h-2zM532 437h1v1h-1zM546 455h1v1h-1zM557 448h1v2h-1zM551 454h2v2h-2zM566 452h2v1h-2zM547 439h1v2h-1zM522 453h1v2h-1zM545 456h2v2h-2zM555 446h1v1h-1zM525 439h1v1h-1zM564 450h2v1h-2zM549 452h2v1h-2zM551 437h1v1h-1zM562 437h2v2h-2zM526 448h1v2h-1zM533 437h2v2h-2zM566 454h2v2h-2zM531 446h2v2h-2zM574 455h2v1h-2zM543 452h1v1h-1zM524 443h1v1h-1zM573 447h1v1h-1zM534 449h2v2h-2zM567 454h2v3h-2zM567 440h2v2h-2zM532 439h1v1h-1zM541 445h2v1h-2zM557 446h1v1h-1zM539 445h2v1h-2zM570 451h2v1h-2z"/><path fill="#cfae7d" d="M559 455h2v2h-2zM564 445h2v3h-2zM558 452h1v1h-1zM526 453h1v2h-1zM532 437h1v2h-1zM576 453h1v1h-1zM543 447h1v1h-1zM565 446h2v3h-2zM531 445h1v1h-1zM549 437h1v1h-1zM524 452h2v2h-2zM561 439h2v2h-2zM552 457h2v2h-2zM573 454h2v1h-2zM531 440h2v2h-2zM554 437h2v2h-2zM552 444h1v2h-1zM550 456h1v1h-1zM554 452h1v1h-1zM548 451h2v2h-2zM557 448h1v2h-1zM558 455h2v1h-2zM555 451h2v2h-2zM536 449h1v1h-1zM547 450h2v2h-2zM573 446h1v2h-1zM539 441h1v2h-1zM533 440h2v2h-2zM553 457h2v1h-2zM523 440h1v2h-1zM535 446h1v2h-1zM529 453h1v1h-1zM566 453h1v1h-1zM549 454h1v1h-1zM521 452h3v2h-3zM555 437h1v1h-1zM534 447h2v3h-2zM570 448h2v3h-2zM573 452h2v2h-2zM539 449h3v2h-3zM522 444h2v3h-2zM570 454h2v2h-2zM528 443h1v1h-1zM554 457h2v2h-2zM538 441h1v1h-1zM533 436h1v2h-1zM530 450h2v2h-2zM536 452h2v3h-2z"/><path fill="#0e7a2a" d="M560 437h1v1h-1zM561 450h1v2h-1zM554 441h1v2h-1zM526 438h2v1h-2zM531 437h2v3h-2zM534 447h2v2h-2zM562 446h2v1h-2zM551 450h1v2h-1zM558 437h1v1h-1zM551 456h1v1h-1zM556 456h1v2h-1zM567 452h2v1h-2zM527 449h2v2h-2z"/><path fill="#8a4a2c" d="M540 442h2v2h-2zM572 440h1v2h-1zM533 437h1v1h-1zM547 453h2v1h-2zM548 447h1v1h-1zM525 440h1v2h-1zM550 437h1v1h-1zM576 447h3v2h-3zM534 440h1v2h-1zM575 452h1v2h-1z"/><polygon points="546,437 558,436 560,445 550,448" fill="#fdf800" /><polygon points="523,446 534,444 536,453 525,455" fill="#cfae7d" /><polygon points="545,432 556,432 556,440 545,440" fill="#f0a0c0" /><polygon points="484,498 500,499 497,508 486,508" fill="#d9829b" /><path fill="#d9829b" d="M510 519h1v1h-1zM521 519h2v2h-2zM499 521h1v1h-1zM491 525h2v2h-2zM508 516h1v1h-1zM507 522h2v2h-2zM488 524h3v2h-3zM502 524h1v1h-1zM522 514h1v2h-1zM517 514h1v2h-1zM490 525h2v3h-2zM485 524h2v2h-2zM522 512h1v2h-1zM510 515h2v2h-2zM503 520h3v2h-3zM512 514h2v2h-2zM496 521h1v2h-1zM513 521h1v2h-1zM495 522h3v2h-3zM522 509h2v2h-2zM493 528h2v2h-2zM506 510h2v1h-2zM510 510h2v3h-2zM506 519h2v1h-2zM516 511h1v1h-1zM519 510h1v1h-1zM498 510h2v2h-2zM496 512h2v2h-2zM504 515h2v1h-2zM501 508h2v1h-2zM495 528h2v2h-2zM527 513h2v1h-2zM496 525h2v3h-2zM516 511h2v1h-2zM495 519h2v3h-2zM503 517h1v2h-1zM496 516h2v1h-2zM518 519h1v2h-1zM488 512h2v2h-2zM507 510h2v3h-2zM493 514h1v1h-1zM493 514h2v1h-2zM500 523h2v2h-2zM504 515h3v2h-3zM500 509h2v1h-2zM504 523h2v1h-2zM509 520h1v2h-1zM492 524h2v1h-2zM492 513h3v2h-3zM496 524h2v1h-2zM512 516h1v2h-1zM493 525h3v2h-3zM506 523h2v1h-2zM498 522h2v3h-2zM506 517h2v2h-2zM526 512h1v2h-1zM496 521h3v2h-3zM517 519h2v1h-2zM505 517h2v3h-2zM489 526h3v2h-3zM492 521h2v1h-2zM515 522h1v1h-1zM521 517h1v1h-1zM498 520h1v2h-1zM520 508h2v3h-2zM526 512h2v2h-2zM513 508h3v2h-3zM502 524h1v2h-1zM500 518h1v2h-1zM506 518h1v2h-1zM518 522h2v1h-2zM494 521h2v1h-2z"/><polygon points="489,510 500,508.4 520,508 528,514 520,522 506,524 494,530 485,524" fill="#d9829b" /><path fill="#8a4a2c" d="M499 518h2v2h-2zM498 509h2v2h-2zM507 516h2v1h-2zM514 516h1v1h-1zM499 512h2v2h-2zM497 522h1v2h-1zM511 511h1v1h-1zM499 526h2v1h-2zM522 512h1v1h-1zM509 512h1v1h-1zM495 527h2v1h-2zM503 513h1v1h-1zM499 522h1v1h-1zM517 520h2v1h-2zM489 523h1v1h-1zM510 518h1v2h-1zM497 523h2v2h-2zM522 515h1v2h-1zM519 520h1v1h-1zM488 516h1v1h-1zM498 512h2v2h-2zM500 522h2v2h-2zM511 517h1v1h-1zM486 524h1v1h-1zM502 521h1v1h-1zM512 520h1v1h-1zM513 509h1v2h-1zM517 521h1v1h-1zM522 510h1v2h-1zM523 513h1v1h-1zM495 516h1v1h-1zM514 518h1v1h-1zM498 525h1v1h-1zM518 515h1v2h-1zM496 514h1v1h-1zM489 523h2v1h-2zM494 520h1v1h-1zM496 516h1v1h-1zM515 509h1v1h-1zM492 513h1v1h-1zM514 517h1v2h-1zM523 513h1v1h-1z"/><path fill="#ffffff" d="M522 516h2v1h-2zM518 516h1v1h-1zM514 516h1v1h-1zM505 517h1v1h-1zM494 528h1v1h-1zM494 510h1v1h-1zM486 522h1v1h-1zM514 513h1v2h-1zM519 509h1v2h-1z"/><path fill="#cfae7d" d="M499 514h1v2h-1zM510 510h2v1h-2zM493 526h1v1h-1zM497 523h1v1h-1zM523 513h2v2h-2zM503 513h1v1h-1zM504 519h1v1h-1zM509 516h2v2h-2zM515 520h2v2h-2zM495 523h2v1h-2zM496 524h2v1h-2zM496 512h1v2h-1zM507 512h1v1h-1zM515 519h1v1h-1zM497 521h1v1h-1zM496 509h1v1h-1zM524 511h1v2h-1zM509 509h2v1h-2zM510 511h2v2h-2zM486 524h1v1h-1zM512 513h2v1h-2z"/><polygon points="480,514 487,512 488,522 481,521" fill="#fdf800" /><polygon points="479.5,508.4 484,508.4 484,513 479.5,513.3" fill="#a80c10" /><polygon points="497,520 512,520 514,529 498,529" fill="#8a4a2c" /><polygon points="505,498 520,497 518,507 506,507" fill="#d9829b" /><polygon points="478,480 484,480 484,489 479,489" fill="#0e7a2a" /><path fill="#fdf800" d="M536 494h3v2h-3zM542 476h2v1h-2zM541 465h1v1h-1zM539 475h1v2h-1zM521 479h2v1h-2zM549 497h3v2h-3zM532 471h2v2h-2zM526 497h1v1h-1zM533 460h1v2h-1zM529 489h1v2h-1zM520 478h2v1h-2zM557 461h1v1h-1zM560 480h3v2h-3zM525 475h1v1h-1zM546 470h2v2h-2zM533 478h1v1h-1zM548 495h1v2h-1zM528 467h2v1h-2zM552 466h3v2h-3zM548 469h1v1h-1zM546 462h1v1h-1zM568 476h1v2h-1zM524 490h1v1h-1zM541 463h1v1h-1zM543 473h1v2h-1zM557 489h2v2h-2zM532 493h3v2h-3zM557 466h2v1h-2zM556 471h3v2h-3zM524 486h1v1h-1zM526 474h1v1h-1zM556 468h1v1h-1zM560 490h1v1h-1zM555 465h2v2h-2zM559 468h2v3h-2zM545 477h2v2h-2zM523 469h1v1h-1zM552 494h1v2h-1zM534 501h2v2h-2zM564 468h1v1h-1zM546 496h1v1h-1zM546 477h2v2h-2zM533 492h2v2h-2zM546 501h2v2h-2zM568 471h2v3h-2zM554 463h1v1h-1zM518 486h3v2h-3zM547 474h2v2h-2zM552 474h2v1h-2zM555 478h2v3h-2zM541 493h1v2h-1zM546 479h2v1h-2zM547 462h2v1h-2zM545 491h2v2h-2zM545 460h2v2h-2zM548 488h1v2h-1zM535 499h3v2h-3zM557 474h3v2h-3zM527 494h2v2h-2zM541 502h1v1h-1zM553 491h2v2h-2zM558 471h2v1h-2zM528 488h1v1h-1zM553 463h1v1h-1zM523 476h2v2h-2zM556 496h1v1h-1zM562 473h2v1h-2zM564 460h1v1h-1zM528 479h2v1h-2zM541 474h2v1h-2zM540 498h2v2h-2zM537 482h2v1h-2zM524 473h1v2h-1zM533 485h2v3h-2zM531 479h2v2h-2zM531 479h1v2h-1zM551 460h2v3h-2zM534 480h2v2h-2zM531 495h2v2h-2zM564 478h1v2h-1zM518 483h2v2h-2zM568 473h2v2h-2zM552 493h2v1h-2zM525 485h1v1h-1zM554 472h1v1h-1zM534 475h1v2h-1zM552 491h3v2h-3zM523 496h2v1h-2zM547 470h2v1h-2zM538 466h2v2h-2zM552 468h1v1h-1zM553 496h1v1h-1zM553 489h2v2h-2zM544 478h1v2h-1zM527 465h2v1h-2zM561 472h2v3h-2zM532 494h1v1h-1zM565 472h2v2h-2zM563 486h1v1h-1zM547 466h1v1h-1zM538 472h1v2h-1zM542 484h2v3h-2zM538 482h1v1h-1zM531 501h2v2h-2zM525 489h1v1h-1zM540 497h1v2h-1zM555 496h1v1h-1zM535 489h1v1h-1zM560 487h2v2h-2zM557 473h3v2h-3zM558 486h2v2h-2zM543 480h1v1h-1zM534 462h2v2h-2zM527 470h3v2h-3zM566 480h1v1h-1zM548 469h2v1h-2zM527 500h2v2h-2zM538 487h2v1h-2zM542 480h1v1h-1zM549 493h1v2h-1zM528 477h2v1h-2zM543 489h1v2h-1zM540 475h2v1h-2zM552 477h2v2h-2zM557 488h2v2h-2zM525 486h2v2h-2zM548 495h1v1h-1zM558 462h1v2h-1zM530 475h1v2h-1zM519 488h1v2h-1zM546 476h1v2h-1zM527 495h1v1h-1zM533 496h2v2h-2zM536 497h2v2h-2zM521 480h1v1h-1zM531 485h2v1h-2zM525 470h1v1h-1zM557 463h2v2h-2zM526 493h3v2h-3zM550 502h1v2h-1zM555 480h1v2h-1zM565 481h2v2h-2zM535 478h1v1h-1zM549 481h1v1h-1zM542 491h2v2h-2zM545 479h2v2h-2zM557 489h1v1h-1zM557 467h1v1h-1zM556 491h2v2h-2zM554 477h2v2h-2zM525 492h1v1h-1zM556 472h2v1h-2zM546 467h3v2h-3zM562 470h2v1h-2zM568 466h3v2h-3zM564 468h1v1h-1z"/><polygon points="530,462 566,462 566.7,480.7 560,490 552,500 540,505 528,500 518,490 522,476" fill="#fdf800" /><polygon points="530,462 566,462 566.7,480.7 560,490 552,500 540,505 528,500 518,490 522,476" fill="url(#yp)" /><path fill="#c49c0e" d="M558 462h2v2h-2zM547 488h2v2h-2zM532 501h1v2h-1zM551 483h1v1h-1zM535 495h1v1h-1zM563 479h1v2h-1zM540 496h1v1h-1zM544 493h1v1h-1zM535 462h1v1h-1zM530 477h1v1h-1zM528 494h2v1h-2zM529 486h1v2h-1zM557 473h1v1h-1zM535 482h2v2h-2zM522 483h1v2h-1zM555 470h1v1h-1zM556 486h1v2h-1zM553 493h1v1h-1zM526 496h2v1h-2zM560 463h2v1h-2zM555 477h1v1h-1zM554 481h1v1h-1zM560 470h1v1h-1zM557 466h1v1h-1zM540 463h1v1h-1zM547 482h1v1h-1zM528 498h1v1h-1zM533 476h1v1h-1zM551 477h1v2h-1zM547 494h1v1h-1zM524 494h1v2h-1zM530 487h1v2h-1zM525 492h1v1h-1zM549 462h1v1h-1zM524 487h1v1h-1zM527 475h1v1h-1zM542 496h1v1h-1zM556 464h1v1h-1zM535 462h2v1h-2zM547 470h1v1h-1zM529 487h1v1h-1zM544 502h1v2h-1zM530 483h1v1h-1zM532 463h1v1h-1zM539 480h1v1h-1zM554 483h1v1h-1zM537 502h1v1h-1zM541 480h1v2h-1zM550 481h2v2h-2zM549 482h1v1h-1zM554 469h2v2h-2zM547 471h1v1h-1zM522 480h1v1h-1zM536 487h1v1h-1zM555 486h1v1h-1zM543 489h1v2h-1zM556 474h2v2h-2zM531 496h1v1h-1zM528 492h1v2h-1zM537 471h1v1h-1z"/><path fill="#f0a0c0" d="M565 475h1v1h-1zM559 485h1v1h-1zM559 470h1v2h-1zM558 465h1v1h-1zM523 476h1v1h-1zM527 493h2v1h-2zM542 480h2v1h-2zM530 487h1v1h-1zM527 471h1v1h-1zM542 483h1v1h-1zM540 475h1v1h-1zM525 481h1v1h-1zM558 483h1v1h-1zM555 494h1v1h-1zM535 492h1v1h-1zM524 491h2v1h-2zM560 463h1v1h-1zM541 501h2v1h-2zM564 475h1v1h-1zM527 497h1v2h-1zM541 491h2v1h-2zM563 481h1v1h-1zM550 490h1v1h-1zM545 491h2v2h-2zM537 494h2v1h-2zM541 470h1v1h-1zM529 463h1v1h-1zM564 473h1v1h-1z"/><path fill="#cfae7d" d="M556 472h1v1h-1zM564 480h1v1h-1zM541 485h1v2h-1zM536 502h1v1h-1zM531 474h1v1h-1zM529 463h1v2h-1zM555 465h2v1h-2zM542 482h1v1h-1zM533 477h1v1h-1zM551 488h2v1h-2zM527 473h1v2h-1zM520 485h1v2h-1zM565 477h1v2h-1zM550 490h1v2h-1zM544 477h2v1h-2zM556 471h1v1h-1zM542 481h1v1h-1zM529 491h1v1h-1zM522 494h1v2h-1zM534 467h1v1h-1zM542 479h1v1h-1zM534 495h1v1h-1zM530 469h2v1h-2zM535 472h1v1h-1zM533 492h2v1h-2zM530 490h2v1h-2zM547 474h2v2h-2zM547 478h1v1h-1zM533 474h2v1h-2zM523 475h1v1h-1zM540 492h1v1h-1zM543 496h2v1h-2zM559 463h1v1h-1zM542 493h2v1h-2zM563 482h2v2h-2zM542 471h1v1h-1zM525 495h2v2h-2zM521 485h1v1h-1zM565 470h2v2h-2zM544 502h2v1h-2zM551 477h1v1h-1zM557 491h1v1h-1z"/><path fill="#12d0d8" d="M565 481h2v1h-2zM548 476h1v1h-1zM523 485h1v1h-1zM529 477h1v1h-1z"/><path fill="#fdf800" d="M540 530h1v2h-1zM558 539h1v2h-1zM541 531h1v1h-1zM548 545h1v1h-1zM541 517h1v2h-1zM544 517h3v2h-3zM541 543h1v1h-1zM542 534h1v1h-1zM550 524h2v1h-2zM535 538h1v2h-1zM540 543h1v1h-1zM554 539h1v1h-1zM554 544h2v2h-2zM549 529h2v2h-2zM536 525h2v1h-2zM531 535h2v3h-2zM536 524h3v2h-3zM546 520h2v2h-2zM546 526h2v1h-2zM554 540h2v1h-2zM545 522h1v1h-1zM558 551h1v1h-1zM540 542h2v2h-2zM547 518h1v2h-1zM539 515h1v1h-1zM533 524h1v1h-1zM557 545h2v1h-2zM541 520h2v3h-2zM536 540h1v2h-1zM539 526h1v2h-1zM540 542h2v1h-2zM535 536h2v2h-2zM530 532h2v3h-2zM559 548h1v2h-1zM562 550h3v2h-3zM543 538h1v1h-1zM539 518h2v2h-2zM530 529h1v2h-1zM544 545h2v3h-2zM554 553h2v2h-2zM545 532h3v2h-3zM545 519h1v2h-1zM555 534h1v2h-1zM541 543h1v1h-1zM537 542h2v3h-2zM535 539h2v2h-2zM554 544h1v1h-1zM549 548h1v1h-1zM551 534h1v1h-1zM544 542h1v1h-1zM541 537h1v1h-1zM537 541h2v2h-2zM551 541h2v2h-2zM541 524h1v1h-1zM561 547h2v2h-2zM547 522h2v1h-2zM542 534h3v2h-3zM544 517h1v1h-1zM537 524h2v2h-2zM545 542h1v2h-1zM547 511h2v2h-2zM556 547h1v1h-1zM535 523h1v1h-1zM535 532h1v2h-1zM540 524h2v2h-2zM556 535h2v1h-2zM546 519h3v2h-3zM559 555h1v2h-1zM556 547h2v2h-2zM547 540h1v2h-1zM549 534h2v2h-2zM547 532h1v1h-1zM551 527h3v2h-3zM535 528h1v1h-1zM555 552h3v2h-3zM537 519h1v1h-1zM549 537h1v1h-1zM546 510h2v2h-2zM549 512h3v2h-3zM549 525h1v2h-1zM545 540h2v2h-2zM546 526h2v1h-2zM537 539h2v1h-2zM549 524h1v2h-1zM556 554h2v3h-2zM533 526h1v1h-1zM539 523h1v1h-1z"/><polygon points="551,508 551.7,527.4 556.9,533.9 561.4,543 562.7,558.6 558.2,557.3 539.3,543 530,537.8 527,530 540,516" fill="#fdf800" /><polygon points="551,508 551.7,527.4 556.9,533.9 561.4,543 562.7,558.6 558.2,557.3 539.3,543 530,537.8 527,530 540,516" fill="url(#yp)" /><path fill="#cfae7d" d="M547 526h2v2h-2zM535 525h1v1h-1zM546 515h1v1h-1zM533 538h1v1h-1zM555 550h1v1h-1zM544 541h1v1h-1zM531 534h1v1h-1zM551 551h2v1h-2zM550 520h2v1h-2zM545 526h1v1h-1zM530 529h1v1h-1zM550 521h1v1h-1zM547 520h1v1h-1zM551 533h1v1h-1zM547 545h1v2h-1zM549 538h1v1h-1zM552 529h1v1h-1zM560 544h1v1h-1zM535 540h1v1h-1zM553 543h1v1h-1zM556 555h1v1h-1zM539 538h1v1h-1zM547 514h1v1h-1zM559 542h1v1h-1zM554 553h1v2h-1zM544 532h1v1h-1zM548 534h1v1h-1z"/><path fill="#c49c0e" d="M544 545h1v1h-1zM549 511h1v1h-1zM541 540h1v1h-1zM537 539h2v1h-2zM541 515h1v1h-1zM552 533h1v1h-1zM548 530h1v2h-1zM556 541h1v1h-1zM553 541h1v1h-1zM550 519h1v2h-1zM555 532h2v1h-2zM549 547h1v2h-1zM545 530h2v2h-2zM543 516h1v2h-1zM547 537h1v1h-1zM542 533h1v1h-1zM557 535h1v2h-1zM552 536h1v1h-1zM555 540h2v2h-2zM542 525h2v1h-2zM554 552h1v1h-1zM537 530h1v1h-1zM535 538h1v2h-1zM556 543h1v1h-1z"/><path fill="#12d0d8" d="M530 529h1v1h-1z"/><path fill="#f0a0c0" d="M544 528h1v1h-1zM554 538h2v1h-2zM543 540h1v1h-1zM531 537h1v1h-1zM547 525h2v2h-2zM548 517h1v1h-1z"/><polygon points="523,530.6 530,537.8 525,545.6" fill="#cfae7d" /><path fill="#fdf800" d="M549 437h2v1h-2zM550 427h2v1h-2zM545 428h1v1h-1zM546 417h1v1h-1zM522 430h2v2h-2zM542 425h2v2h-2zM533 435h3v2h-3zM521 436h2v3h-2zM537 420h2v2h-2zM517 428h2v2h-2zM532 423h2v2h-2zM562 427h2v2h-2zM547 421h2v3h-2zM528 425h2v3h-2zM539 430h2v1h-2zM539 434h1v2h-1zM539 417h1v2h-1zM534 420h1v2h-1zM519 428h3v2h-3zM520 419h2v1h-2zM544 420h1v1h-1zM533 426h1v2h-1zM523 431h2v2h-2zM549 423h2v3h-2zM522 428h1v2h-1zM555 432h2v3h-2zM540 429h2v1h-2zM523 416h2v1h-2zM547 420h2v2h-2zM547 430h2v2h-2zM545 422h1v2h-1zM546 437h1v1h-1zM548 421h1v1h-1zM544 419h2v2h-2zM544 424h2v1h-2zM540 420h2v2h-2zM543 426h1v1h-1zM538 427h2v1h-2zM531 428h1v1h-1zM529 436h2v2h-2zM553 423h2v2h-2zM539 422h2v1h-2zM538 420h2v1h-2zM553 426h2v2h-2zM530 426h1v2h-1zM551 432h1v1h-1zM549 428h2v2h-2zM538 423h1v1h-1zM517 420h3v2h-3zM530 436h2v1h-2zM539 422h2v2h-2zM519 424h1v2h-1zM521 433h1v1h-1zM553 421h1v2h-1zM538 419h1v2h-1zM545 429h2v1h-2zM542 424h2v1h-2zM548 427h2v2h-2zM549 430h2v1h-2zM550 421h2v1h-2zM536 416h1v2h-1zM519 417h2v3h-2zM518 427h2v2h-2zM529 419h3v2h-3zM547 426h2v1h-2zM534 416h2v2h-2zM525 433h2v1h-2zM529 433h1v1h-1zM528 416h1v2h-1zM555 432h1v1h-1zM547 436h2v3h-2zM518 429h1v1h-1zM524 432h2v2h-2zM528 431h2v1h-2zM524 426h2v2h-2zM546 434h1v2h-1zM535 421h1v2h-1zM518 431h2v2h-2zM550 423h1v2h-1zM524 428h1v1h-1zM549 436h1v2h-1zM557 424h1v2h-1zM557 432h2v2h-2zM538 431h2v1h-2zM527 429h1v1h-1zM549 421h1v1h-1zM539 428h2v2h-2zM537 423h2v2h-2z"/><polygon points="521,416 545,418 560,428 556,436 540,437 521,435" fill="#fdf800" /><polygon points="521,416 545,418 560,428 556,436 540,437 521,435" fill="url(#yp)" /><path fill="#cfae7d" d="M532 432h1v1h-1zM541 436h1v2h-1zM557 431h1v1h-1zM527 432h1v1h-1zM540 436h2v1h-2zM553 430h1v1h-1zM530 424h2v2h-2zM536 436h1v1h-1zM538 428h1v1h-1zM545 429h2v1h-2zM544 419h2v1h-2zM536 427h1v1h-1zM537 434h1v1h-1zM533 424h1v1h-1zM539 435h1v1h-1zM548 431h1v1h-1zM542 423h2v1h-2zM550 429h1v1h-1z"/><path fill="#c49c0e" d="M557 430h1v1h-1zM537 427h1v1h-1zM548 423h1v1h-1zM523 426h1v1h-1zM549 425h1v1h-1zM548 432h2v1h-2zM543 429h2v1h-2zM553 434h2v1h-2zM537 429h1v2h-1zM539 435h1v1h-1zM547 423h1v2h-1zM546 427h2v2h-2zM523 430h1v1h-1zM552 427h2v2h-2zM546 430h1v1h-1zM523 434h1v1h-1zM535 419h2v1h-2z"/><path fill="#f0a0c0" d="M529 420h1v2h-1zM521 423h1v1h-1zM531 429h1v1h-1zM541 432h1v1h-1z"/><path fill="#12d0d8" d="M544 425h1v1h-1zM550 431h1v1h-1zM533 431h1v1h-1z"/><polyline points="516.3,337.8 515,349.5" fill="none" stroke="#12d0d8" stroke-width="2" stroke-linejoin="round" stroke-linecap="round"/><polyline points="500,349.5 517,352" fill="none" stroke="#12d0d8" stroke-width="1.5" stroke-linejoin="round" stroke-linecap="round"/><polyline points="537.8,356 527,362 517,367.8 512.4,375.6 511.7,382 515.6,388.6 522,395 527.4,401.7 529.3,408 534,413" fill="none" stroke="#12d0d8" stroke-width="3" stroke-linejoin="round" stroke-linecap="round"/><polyline points="548,373 537.8,373.6 532.6,377 530.6,382 531.3,388.6 532.6,395 536,401" fill="none" stroke="#12d0d8" stroke-width="1.6" stroke-linejoin="round" stroke-linecap="round"/><polyline points="548,373 557.3,373 562.5,375 565,379.5 570.4,379.5 575.6,378 583.4,382 588.6,386 596,390" fill="none" stroke="#12d0d8" stroke-width="1.6" stroke-linejoin="round" stroke-linecap="round"/><polyline points="565,379.5 562.5,386 560,391 559.3,399 560.6,408 562,418 563,426" fill="none" stroke="#12d0d8" stroke-width="2.4" stroke-linejoin="round" stroke-linecap="round"/><polyline points="520,411 535,415 552,425 565,432 576,435 590,431 605,428 620,430 640,434 660,436 675,428 695,418" fill="none" stroke="#12d0d8" stroke-width="3.4" stroke-linejoin="round" stroke-linecap="round"/><polyline points="528,404 540,409 552,416 566,426" fill="none" stroke="#12d0d8" stroke-width="2" stroke-linejoin="round" stroke-linecap="round"/><polyline points="545,470 550,480 556,492 552,500" fill="none" stroke="#12d0d8" stroke-width="1.6" stroke-linejoin="round" stroke-linecap="round"/><polyline points="560,468 558,480 556,492" fill="none" stroke="#12d0d8" stroke-width="1.4" stroke-linejoin="round" stroke-linecap="round"/><polyline points="490,470 496,478 492,490" fill="none" stroke="#12d0d8" stroke-width="1.2" stroke-linejoin="round" stroke-linecap="round"/><polyline points="505,516 512,508 520,500" fill="none" stroke="#12d0d8" stroke-width="1.4" stroke-linejoin="round" stroke-linecap="round"/><polyline points="548,545 549,553" fill="none" stroke="#12d0d8" stroke-width="1.5" stroke-linejoin="round" stroke-linecap="round"/><polyline points="561,545 561.5,556" fill="none" stroke="#12d0d8" stroke-width="1.2" stroke-linejoin="round" stroke-linecap="round"/><polygon points="566,426 574,426 575,434 567,434" fill="#1878c8" /></g></svg>
</body></html>
